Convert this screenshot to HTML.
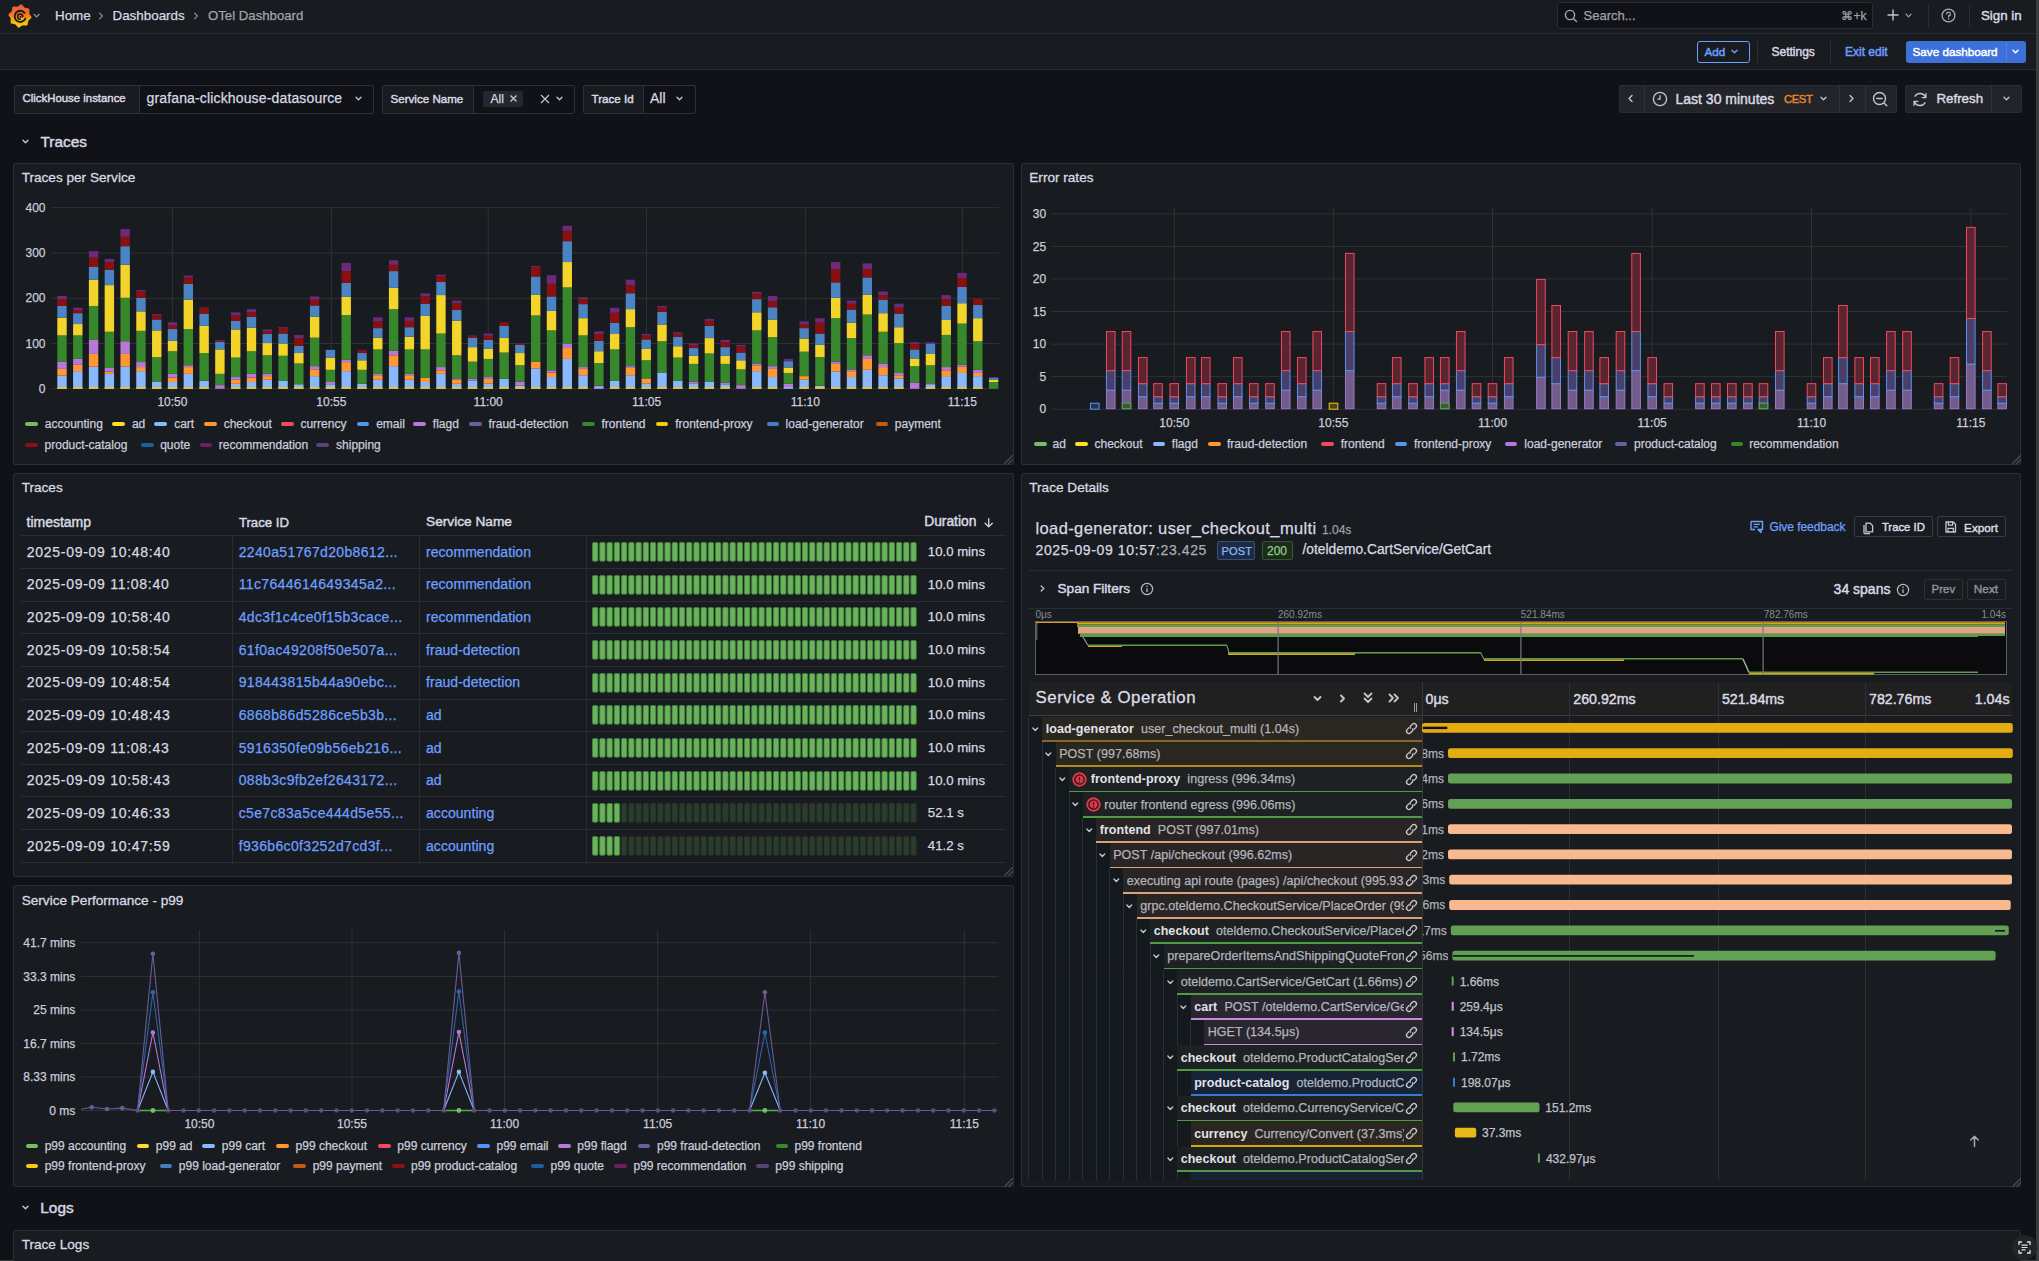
<!DOCTYPE html>
<html><head><meta charset="utf-8"><title>OTel Dashboard</title>
<style>
html,body{margin:0;padding:0;}
body{width:2039px;height:1261px;background:#111217;position:relative;overflow:hidden;font-family:"Liberation Sans", sans-serif;}
.t{position:absolute;white-space:nowrap;line-height:1;-webkit-text-stroke:0.25px currentColor;}
.b{position:absolute;}
.s{position:absolute;overflow:visible;}
</style></head><body>
<div class="b" style="left:0.0px;top:0.0px;width:2036.0px;height:33.0px;background:#181b1f;border-bottom:1px solid #2a2c31;"></div>
<div class="b" style="left:0.0px;top:34.0px;width:2036.0px;height:35.0px;background:#181b1f;border-bottom:1px solid #2a2c31;"></div>
<div class="b" style="left:2036.0px;top:0.0px;width:3.0px;height:1261.0px;background:#3a3b3f;"></div>
<div class="b" style="left:0.0px;top:1260.0px;width:2039.0px;height:1.0px;background:#3a3b3f;"></div>
<svg class="s" style="left:6.5px;top:2.8px;" width="26" height="26" viewBox="0 0 26 26"><defs><linearGradient id="lg" x1="0" y1="0" x2="0" y2="1"><stop offset="0" stop-color="#f0593a"/><stop offset="0.5" stop-color="#f77a20"/><stop offset="0.62" stop-color="#f0a814"/><stop offset="1" stop-color="#f8c80c"/></linearGradient></defs>
<path d="M14.27,2.48 L17.12,5.68 L21.34,6.46 L21.09,10.74 L23.52,14.27 L20.32,17.12 L19.54,21.34 L15.26,21.09 L11.73,23.52 L8.88,20.32 L4.66,19.54 L4.91,15.26 L2.48,11.73 L5.68,8.88 L6.46,4.66 L10.74,4.91 Z" fill="url(#lg)" stroke="url(#lg)" stroke-width="2.2" stroke-linejoin="round"/>
<path d="M17.6,9.8 A5.6,5.6 0 1 0 18.4,15.6" fill="none" stroke="#181b1f" stroke-width="1.9" stroke-linecap="round"/>
<path d="M15.8,13.6 A2.6,2.6 0 1 0 13.2,16.2" fill="none" stroke="#181b1f" stroke-width="1.6" stroke-linecap="round"/>
<circle cx="13.6" cy="13.8" r="1.1" fill="#181b1f"/></svg>
<svg class="s" style="left:32px;top:11px;" width="9.2" height="9.2" viewBox="0 0 9.2 9.2"><path d="M2.1 3.3 L4.6 5.9 L7.1 3.3" fill="none" stroke="#a0a1ab" stroke-width="1.2" stroke-linecap="round" stroke-linejoin="round"/></svg>
<div class="t" style="left:55.0px;top:9.1px;font-size:13.4px;color:#d8d9e3;font-weight:400;">Home</div>
<svg class="s" style="left:96px;top:11px;" width="10" height="10" viewBox="0 0 10 10"><path d="M3.6 2.2 L6.4 5.0 L3.6 7.8" fill="none" stroke="#8e8f9b" stroke-width="1.2" stroke-linecap="round" stroke-linejoin="round"/></svg>
<div class="t" style="left:112.5px;top:9.1px;font-size:13.4px;color:#d8d9e3;font-weight:400;">Dashboards</div>
<svg class="s" style="left:191px;top:11px;" width="10" height="10" viewBox="0 0 10 10"><path d="M3.6 2.2 L6.4 5.0 L3.6 7.8" fill="none" stroke="#8e8f9b" stroke-width="1.2" stroke-linecap="round" stroke-linejoin="round"/></svg>
<div class="t" style="left:208.0px;top:9.2px;font-size:13.2px;color:#a3a4ae;font-weight:400;">OTel Dashboard</div>
<div class="b" style="left:1557.0px;top:2.0px;width:316.0px;height:27.0px;background:#111217;border:1px solid #2c2e33;border-radius:3px;box-sizing:border-box;"></div>
<svg class="s" style="left:1564px;top:9px;" width="14" height="14" viewBox="0 0 14 14"><circle cx="6" cy="6" r="4.6" fill="none" stroke="#a8a9b3" stroke-width="1.4"/><path d="M9.4 9.4 L12.5 12.5" stroke="#a8a9b3" stroke-width="1.4" stroke-linecap="round"/></svg>
<div class="t" style="left:1583.5px;top:9.3px;font-size:13px;color:#a0a1ab;font-weight:400;">Search...</div>
<div class="t" style="right:172.5px;top:10.1px;font-size:12px;color:#a0a1ab;font-weight:400;text-align:right;">⌘+k</div>
<svg class="s" style="left:1887px;top:9px;" width="12" height="12" viewBox="0 0 12 12"><path d="M6 0.5 V11.5 M0.5 6 H11.5" stroke="#c4c5cf" stroke-width="1.4"/></svg>
<svg class="s" style="left:1904px;top:11px;" width="9.0" height="9.0" viewBox="0 0 9.0 9.0"><path d="M2.0 3.2 L4.5 5.8 L7.0 3.2" fill="none" stroke="#a0a1ab" stroke-width="1.2" stroke-linecap="round" stroke-linejoin="round"/></svg>
<div class="b" style="left:1928.0px;top:5.0px;width:1.0px;height:22.0px;background:#2c2e33;"></div>
<svg class="s" style="left:1941px;top:8px;" width="15" height="15" viewBox="0 0 15 15"><circle cx="7.5" cy="7.5" r="6.4" fill="none" stroke="#a8a9b3" stroke-width="1.3"/><path d="M5.6 5.9 A1.9 1.9 0 1 1 7.6 7.9 V9" fill="none" stroke="#a8a9b3" stroke-width="1.3" stroke-linecap="round"/><circle cx="7.6" cy="11" r="0.8" fill="#a8a9b3"/></svg>
<div class="b" style="left:1969.0px;top:5.0px;width:1.0px;height:22.0px;background:#2c2e33;"></div>
<div class="t" style="left:1981.0px;top:9.0px;font-size:13.3px;color:#d8d9e3;font-weight:400;-webkit-text-stroke:0.45px currentColor;">Sign in</div>
<div class="b" style="left:1697.0px;top:41.0px;width:53.0px;height:22.0px;border:1px solid #6e9fff;border-radius:3px;box-sizing:border-box;"></div>
<div class="t" style="left:1704.5px;top:46.0px;font-size:11.7px;color:#6e9fff;font-weight:400;-webkit-text-stroke:0.45px currentColor;">Add</div>
<svg class="s" style="left:1730px;top:47px;" width="9.0" height="9.0" viewBox="0 0 9.0 9.0"><path d="M2.0 3.2 L4.5 5.8 L7.0 3.2" fill="none" stroke="#6e9fff" stroke-width="1.4" stroke-linecap="round" stroke-linejoin="round"/></svg>
<div class="b" style="left:1757.0px;top:41.0px;width:1.0px;height:22.0px;background:#2c2e33;"></div>
<div class="t" style="left:1771.5px;top:45.7px;font-size:12px;color:#d8d9e3;font-weight:400;-webkit-text-stroke:0.45px currentColor;">Settings</div>
<div class="b" style="left:1830.0px;top:41.0px;width:1.0px;height:22.0px;background:#2c2e33;"></div>
<div class="t" style="left:1845.0px;top:45.7px;font-size:12px;color:#6e9fff;font-weight:400;-webkit-text-stroke:0.45px currentColor;">Exit edit</div>
<div class="b" style="left:1906.0px;top:41.0px;width:120.0px;height:22.0px;background:#3d71d9;border-radius:3px;"></div>
<div class="b" style="left:2006.0px;top:43.0px;width:1.0px;height:18.0px;border-left:1px dotted #6b8fd8;"></div>
<div class="t" style="left:1912.5px;top:46.0px;font-size:11.7px;color:#ffffff;font-weight:400;-webkit-text-stroke:0.45px currentColor;">Save dashboard</div>
<svg class="s" style="left:2011px;top:47px;" width="9.0" height="9.0" viewBox="0 0 9.0 9.0"><path d="M2.0 3.2 L4.5 5.8 L7.0 3.2" fill="none" stroke="#ffffff" stroke-width="1.4" stroke-linecap="round" stroke-linejoin="round"/></svg>
<div class="b" style="left:14.0px;top:84.5px;width:360.0px;height:29.0px;background:#111217;border:1px solid #2f3136;border-radius:2px;box-sizing:border-box;"></div>
<div class="b" style="left:15.0px;top:85.5px;width:123.5px;height:27.0px;background:#181b1f;border-right:1px solid #2f3136;"></div>
<div class="t" style="left:22.5px;top:92.8px;font-size:11.4px;color:#d8d9e3;font-weight:400;-webkit-text-stroke:0.45px currentColor;">ClickHouse instance</div>
<div class="t" style="left:146.5px;top:91.2px;font-size:14px;color:#d8d9e3;font-weight:400;letter-spacing:0.15px;">grafana-clickhouse-datasource</div>
<svg class="s" style="left:354px;top:94px;" width="9.0" height="9.0" viewBox="0 0 9.0 9.0"><path d="M2.0 3.2 L4.5 5.8 L7.0 3.2" fill="none" stroke="#c4c5cf" stroke-width="1.3" stroke-linecap="round" stroke-linejoin="round"/></svg>
<div class="b" style="left:382.0px;top:84.5px;width:193.0px;height:29.0px;background:#111217;border:1px solid #2f3136;border-radius:2px;box-sizing:border-box;"></div>
<div class="b" style="left:383.0px;top:85.5px;width:89.5px;height:27.0px;background:#181b1f;border-right:1px solid #2f3136;"></div>
<div class="t" style="left:390.5px;top:92.6px;font-size:11.6px;color:#d8d9e3;font-weight:400;-webkit-text-stroke:0.45px currentColor;">Service Name</div>
<div class="b" style="left:483.0px;top:91.0px;width:40.0px;height:16.0px;background:#24272c;border-radius:2px;"></div>
<div class="t" style="left:490.5px;top:92.6px;font-size:12px;color:#d8d9e3;font-weight:400;">All</div>
<svg class="s" style="left:508px;top:93px;" width="11" height="11" viewBox="0 0 11 11"><path d="M2.5 2.5 L8.5 8.5 M8.5 2.5 L2.5 8.5" stroke="#c4c5cf" stroke-width="1.4"/></svg>
<svg class="s" style="left:539px;top:93px;" width="12" height="12" viewBox="0 0 12 12"><path d="M2 2 L10 10 M10 2 L2 10" stroke="#c4c5cf" stroke-width="1.2"/></svg>
<svg class="s" style="left:555px;top:94px;" width="9.0" height="9.0" viewBox="0 0 9.0 9.0"><path d="M2.0 3.2 L4.5 5.8 L7.0 3.2" fill="none" stroke="#c4c5cf" stroke-width="1.3" stroke-linecap="round" stroke-linejoin="round"/></svg>
<div class="b" style="left:583.0px;top:84.5px;width:112.5px;height:29.0px;background:#111217;border:1px solid #2f3136;border-radius:2px;box-sizing:border-box;"></div>
<div class="b" style="left:584.0px;top:85.5px;width:58.5px;height:27.0px;background:#181b1f;border-right:1px solid #2f3136;"></div>
<div class="t" style="left:591.5px;top:92.6px;font-size:11.6px;color:#d8d9e3;font-weight:400;-webkit-text-stroke:0.45px currentColor;">Trace Id</div>
<div class="t" style="left:650.0px;top:91.1px;font-size:14px;color:#d8d9e3;font-weight:400;">All</div>
<svg class="s" style="left:675px;top:94px;" width="9.0" height="9.0" viewBox="0 0 9.0 9.0"><path d="M2.0 3.2 L4.5 5.8 L7.0 3.2" fill="none" stroke="#c4c5cf" stroke-width="1.3" stroke-linecap="round" stroke-linejoin="round"/></svg>
<div class="b" style="left:1618.5px;top:84.5px;width:278.5px;height:28.5px;background:#222429;border:1px solid #2a2c31;border-radius:2px;box-sizing:border-box;"></div>
<div class="b" style="left:1644.0px;top:85.0px;width:1.0px;height:27.5px;background:#2f3136;"></div>
<div class="b" style="left:1839.0px;top:85.0px;width:1.0px;height:27.5px;background:#2f3136;"></div>
<div class="b" style="left:1864.5px;top:85.0px;width:1.0px;height:27.5px;background:#2f3136;"></div>
<svg class="s" style="left:1625px;top:93px;" width="11.0" height="11.0" viewBox="0 0 11.0 11.0"><path d="M7.0 2.5 L4.0 5.5 L7.0 8.5" fill="none" stroke="#c4c5cf" stroke-width="1.4" stroke-linecap="round" stroke-linejoin="round"/></svg>
<svg class="s" style="left:1652px;top:91px;" width="16" height="16" viewBox="0 0 16 16"><circle cx="8" cy="8" r="6.6" fill="none" stroke="#c4c5cf" stroke-width="1.3"/><path d="M8 4.2 V8.2 H5.4" fill="none" stroke="#c4c5cf" stroke-width="1.3"/></svg>
<div class="t" style="left:1675.5px;top:91.7px;font-size:14px;color:#d8d9e3;font-weight:400;-webkit-text-stroke:0.45px currentColor;">Last 30 minutes</div>
<div class="t" style="left:1784.0px;top:93.7px;font-size:11.2px;color:#e8862c;font-weight:400;letter-spacing:-0.35px;-webkit-text-stroke:0.45px currentColor;">CEST</div>
<svg class="s" style="left:1819px;top:94px;" width="9.0" height="9.0" viewBox="0 0 9.0 9.0"><path d="M2.0 3.2 L4.5 5.8 L7.0 3.2" fill="none" stroke="#c4c5cf" stroke-width="1.3" stroke-linecap="round" stroke-linejoin="round"/></svg>
<svg class="s" style="left:1846px;top:93px;" width="11.0" height="11.0" viewBox="0 0 11.0 11.0"><path d="M4.0 2.5 L7.0 5.5 L4.0 8.5" fill="none" stroke="#c4c5cf" stroke-width="1.4" stroke-linecap="round" stroke-linejoin="round"/></svg>
<svg class="s" style="left:1872px;top:91px;" width="17" height="17" viewBox="0 0 17 17"><circle cx="7.5" cy="7.5" r="6" fill="none" stroke="#c4c5cf" stroke-width="1.4"/><path d="M4.8 7.5 H10.2 M12 12 L14.8 14.8" stroke="#c4c5cf" stroke-width="1.4" stroke-linecap="round"/></svg>
<div class="b" style="left:1904.5px;top:84.5px;width:117.5px;height:28.5px;background:#222429;border:1px solid #2a2c31;border-radius:2px;box-sizing:border-box;"></div>
<div class="b" style="left:1991.0px;top:85.0px;width:1.0px;height:27.5px;background:#2f3136;"></div>
<svg class="s" style="left:1912px;top:91px;" width="17" height="17" viewBox="0 0 17 17"><path d="M13.6 6.2 A6 6 0 0 0 3 5.2 M2.4 10.8 A6 6 0 0 0 13 11.8" fill="none" stroke="#c4c5cf" stroke-width="1.4" stroke-linecap="round"/><path d="M13.9 2.8 V6.6 H10.2 M2.1 14.2 V10.4 H5.8" fill="none" stroke="#c4c5cf" stroke-width="1.4" stroke-linecap="round" stroke-linejoin="round"/></svg>
<div class="t" style="left:1936.5px;top:92.2px;font-size:13.3px;color:#d8d9e3;font-weight:400;-webkit-text-stroke:0.45px currentColor;">Refresh</div>
<svg class="s" style="left:2002px;top:94px;" width="9.0" height="9.0" viewBox="0 0 9.0 9.0"><path d="M2.0 3.2 L4.5 5.8 L7.0 3.2" fill="none" stroke="#c4c5cf" stroke-width="1.3" stroke-linecap="round" stroke-linejoin="round"/></svg>
<svg class="s" style="left:21px;top:137px;" width="9.0" height="9.0" viewBox="0 0 9.0 9.0"><path d="M2.0 3.2 L4.5 5.8 L7.0 3.2" fill="none" stroke="#c4c5cf" stroke-width="1.4" stroke-linecap="round" stroke-linejoin="round"/></svg>
<div class="t" style="left:40.5px;top:134.2px;font-size:15.4px;color:#d8d9e3;font-weight:400;-webkit-text-stroke:0.45px currentColor;">Traces</div>
<svg class="s" style="left:21px;top:1203px;" width="9.0" height="9.0" viewBox="0 0 9.0 9.0"><path d="M2.0 3.2 L4.5 5.8 L7.0 3.2" fill="none" stroke="#c4c5cf" stroke-width="1.4" stroke-linecap="round" stroke-linejoin="round"/></svg>
<div class="t" style="left:40.3px;top:1200.3px;font-size:15.4px;color:#d8d9e3;font-weight:400;-webkit-text-stroke:0.45px currentColor;">Logs</div>
<div class="b" style="left:13.2px;top:163.3px;width:1000.6px;height:302.0px;background:#181b1f;border:1px solid #2c2e33;border-radius:2px;box-sizing:border-box;"></div>
<div class="t" style="left:21.7px;top:171.4px;font-size:13.6px;color:#d8d9e3;font-weight:400;-webkit-text-stroke:0.3px currentColor;">Traces per Service</div>
<svg class="s" style="left:1000.8px;top:452.3px;" width="12" height="12" viewBox="0 0 12 12"><path d="M3.8 11.3 L11.5 3.6 M7.8 11.3 L11.5 7.6" stroke="#55575c" stroke-width="1.1" stroke-linecap="round"/></svg>
<div class="b" style="left:1020.8px;top:163.3px;width:1000.7px;height:302.0px;background:#181b1f;border:1px solid #2c2e33;border-radius:2px;box-sizing:border-box;"></div>
<div class="t" style="left:1029.3px;top:171.3px;font-size:13.6px;color:#d8d9e3;font-weight:400;-webkit-text-stroke:0.3px currentColor;">Error rates</div>
<svg class="s" style="left:2008.5px;top:452.3px;" width="12" height="12" viewBox="0 0 12 12"><path d="M3.8 11.3 L11.5 3.6 M7.8 11.3 L11.5 7.6" stroke="#55575c" stroke-width="1.1" stroke-linecap="round"/></svg>
<div class="b" style="left:13.2px;top:473.3px;width:1000.6px;height:404.0px;background:#181b1f;border:1px solid #2c2e33;border-radius:2px;box-sizing:border-box;"></div>
<div class="t" style="left:21.7px;top:481.1px;font-size:13.6px;color:#d8d9e3;font-weight:400;-webkit-text-stroke:0.3px currentColor;">Traces</div>
<svg class="s" style="left:1000.8px;top:864.3px;" width="12" height="12" viewBox="0 0 12 12"><path d="M3.8 11.3 L11.5 3.6 M7.8 11.3 L11.5 7.6" stroke="#55575c" stroke-width="1.1" stroke-linecap="round"/></svg>
<div class="b" style="left:1020.8px;top:473.3px;width:1000.7px;height:714.2px;background:#181b1f;border:1px solid #2c2e33;border-radius:2px;box-sizing:border-box;"></div>
<div class="t" style="left:1029.3px;top:481.1px;font-size:13.6px;color:#d8d9e3;font-weight:400;-webkit-text-stroke:0.3px currentColor;">Trace Details</div>
<svg class="s" style="left:2008.5px;top:1174.5px;" width="12" height="12" viewBox="0 0 12 12"><path d="M3.8 11.3 L11.5 3.6 M7.8 11.3 L11.5 7.6" stroke="#55575c" stroke-width="1.1" stroke-linecap="round"/></svg>
<div class="b" style="left:13.2px;top:885.2px;width:1000.6px;height:302.3px;background:#181b1f;border:1px solid #2c2e33;border-radius:2px;box-sizing:border-box;"></div>
<div class="t" style="left:21.7px;top:893.7px;font-size:13.6px;color:#d8d9e3;font-weight:400;-webkit-text-stroke:0.3px currentColor;">Service Performance - p99</div>
<svg class="s" style="left:1000.8px;top:1174.5px;" width="12" height="12" viewBox="0 0 12 12"><path d="M3.8 11.3 L11.5 3.6 M7.8 11.3 L11.5 7.6" stroke="#55575c" stroke-width="1.1" stroke-linecap="round"/></svg>
<div class="b" style="left:13.2px;top:1229.5px;width:2008.3px;height:70.5px;background:#181b1f;border:1px solid #2c2e33;border-radius:2px;box-sizing:border-box;"></div>
<div class="t" style="left:21.7px;top:1237.7px;font-size:13.6px;color:#d8d9e3;font-weight:400;-webkit-text-stroke:0.3px currentColor;">Trace Logs</div>
<svg class="s" style="left:2011px;top:1234px;" width="27" height="27" viewBox="0 0 27 27"><circle cx="13.5" cy="13.5" r="12.5" fill="#222428"/><path d="M8 11 V8 H11 M16 8 H19 V11 M19 16 V19 H16 M11 19 H8 V16" fill="none" stroke="#e0e0ea" stroke-width="1.3"/><path d="M10.5 11.2 H16.5 M10.5 13.5 H16.5 M10.5 15.8 H14.5" stroke="#e0e0ea" stroke-width="1.2"/></svg>
<svg class="s" style="left:0px;top:0px;pointer-events:none;" width="1020" height="470" viewBox="0 0 1020 470"><rect x="51" y="388.3" width="948" height="1" fill="#2e3136"/><rect x="51" y="343.0" width="948" height="1" fill="#2e3136"/><rect x="51" y="297.8" width="948" height="1" fill="#2e3136"/><rect x="51" y="252.5" width="948" height="1" fill="#2e3136"/><rect x="51" y="207.2" width="948" height="1" fill="#2e3136"/><rect x="171.9" y="207.5" width="1" height="184.5" fill="#2e3136"/><rect x="330.8" y="207.5" width="1" height="184.5" fill="#2e3136"/><rect x="487.7" y="207.5" width="1" height="184.5" fill="#2e3136"/><rect x="646.1" y="207.5" width="1" height="184.5" fill="#2e3136"/><rect x="804.8" y="207.5" width="1" height="184.5" fill="#2e3136"/><rect x="961.9" y="207.5" width="1" height="184.5" fill="#2e3136"/><rect x="57.30" y="375.67" width="9.4" height="13.13" fill="#8ab8ff"/><rect x="57.30" y="368.88" width="9.4" height="6.79" fill="#ff9830"/><rect x="57.30" y="361.63" width="9.4" height="7.24" fill="#b877d9"/><rect x="57.30" y="335.38" width="9.4" height="26.26" fill="#37872d"/><rect x="57.30" y="317.72" width="9.4" height="17.66" fill="#f2d42a"/><rect x="57.30" y="305.95" width="9.4" height="11.77" fill="#4a84c2"/><rect x="57.30" y="299.16" width="9.4" height="6.79" fill="#8a1010"/><rect x="57.30" y="295.99" width="9.4" height="3.17" fill="#6d2a78"/><rect x="57.30" y="387.20" width="9.4" height="1.6" fill="#f2cc0c"/><rect x="73.09" y="371.14" width="9.4" height="17.66" fill="#8ab8ff"/><rect x="73.09" y="364.80" width="9.4" height="6.34" fill="#ff9830"/><rect x="73.09" y="358.92" width="9.4" height="5.89" fill="#b877d9"/><rect x="73.09" y="335.38" width="9.4" height="23.54" fill="#37872d"/><rect x="73.09" y="324.06" width="9.4" height="11.32" fill="#f2d42a"/><rect x="73.09" y="313.19" width="9.4" height="10.87" fill="#4a84c2"/><rect x="73.09" y="310.02" width="9.4" height="3.17" fill="#8a1010"/><rect x="73.09" y="307.76" width="9.4" height="2.26" fill="#6d2a78"/><rect x="73.09" y="387.20" width="9.4" height="1.6" fill="#f2cc0c"/><rect x="88.88" y="366.62" width="9.4" height="22.18" fill="#8ab8ff"/><rect x="88.88" y="353.94" width="9.4" height="12.68" fill="#ff9830"/><rect x="88.88" y="339.90" width="9.4" height="14.04" fill="#b877d9"/><rect x="88.88" y="305.95" width="9.4" height="33.96" fill="#37872d"/><rect x="88.88" y="279.69" width="9.4" height="26.26" fill="#f2d42a"/><rect x="88.88" y="266.56" width="9.4" height="13.13" fill="#4a84c2"/><rect x="88.88" y="257.50" width="9.4" height="9.05" fill="#8a1010"/><rect x="88.88" y="251.16" width="9.4" height="6.34" fill="#6d2a78"/><rect x="88.88" y="387.20" width="9.4" height="1.6" fill="#f2cc0c"/><rect x="104.67" y="373.86" width="9.4" height="14.94" fill="#8ab8ff"/><rect x="104.67" y="371.60" width="9.4" height="2.26" fill="#ff9830"/><rect x="104.67" y="367.97" width="9.4" height="3.62" fill="#b877d9"/><rect x="104.67" y="331.75" width="9.4" height="36.22" fill="#37872d"/><rect x="104.67" y="285.12" width="9.4" height="46.63" fill="#f2d42a"/><rect x="104.67" y="269.73" width="9.4" height="15.39" fill="#4a84c2"/><rect x="104.67" y="262.03" width="9.4" height="7.70" fill="#8a1010"/><rect x="104.67" y="258.86" width="9.4" height="3.17" fill="#6d2a78"/><rect x="104.67" y="387.20" width="9.4" height="1.6" fill="#f2cc0c"/><rect x="120.46" y="366.62" width="9.4" height="22.18" fill="#8ab8ff"/><rect x="120.46" y="353.94" width="9.4" height="12.68" fill="#ff9830"/><rect x="120.46" y="341.26" width="9.4" height="12.68" fill="#b877d9"/><rect x="120.46" y="297.80" width="9.4" height="43.46" fill="#37872d"/><rect x="120.46" y="264.75" width="9.4" height="33.05" fill="#f2d42a"/><rect x="120.46" y="246.18" width="9.4" height="18.56" fill="#4a84c2"/><rect x="120.46" y="236.68" width="9.4" height="9.51" fill="#8a1010"/><rect x="120.46" y="228.98" width="9.4" height="7.70" fill="#6d2a78"/><rect x="120.46" y="387.20" width="9.4" height="1.6" fill="#f2cc0c"/><rect x="136.25" y="371.14" width="9.4" height="17.66" fill="#8ab8ff"/><rect x="136.25" y="367.07" width="9.4" height="4.07" fill="#ff9830"/><rect x="136.25" y="362.09" width="9.4" height="4.98" fill="#b877d9"/><rect x="136.25" y="330.85" width="9.4" height="31.24" fill="#37872d"/><rect x="136.25" y="311.38" width="9.4" height="19.47" fill="#f2d42a"/><rect x="136.25" y="297.80" width="9.4" height="13.58" fill="#4a84c2"/><rect x="136.25" y="291.46" width="9.4" height="6.34" fill="#8a1010"/><rect x="136.25" y="290.10" width="9.4" height="1.36" fill="#6d2a78"/><rect x="136.25" y="387.20" width="9.4" height="1.6" fill="#f2cc0c"/><rect x="152.04" y="381.56" width="9.4" height="7.24" fill="#8ab8ff"/><rect x="152.04" y="357.11" width="9.4" height="24.45" fill="#37872d"/><rect x="152.04" y="330.40" width="9.4" height="26.71" fill="#f2d42a"/><rect x="152.04" y="319.53" width="9.4" height="10.87" fill="#4a84c2"/><rect x="152.04" y="315.00" width="9.4" height="4.53" fill="#8a1010"/><rect x="152.04" y="314.10" width="9.4" height="0.91" fill="#6d2a78"/><rect x="152.04" y="387.20" width="9.4" height="1.6" fill="#f2cc0c"/><rect x="167.83" y="382.01" width="9.4" height="6.79" fill="#8ab8ff"/><rect x="167.83" y="377.48" width="9.4" height="4.53" fill="#ff9830"/><rect x="167.83" y="373.86" width="9.4" height="3.62" fill="#b877d9"/><rect x="167.83" y="351.22" width="9.4" height="22.64" fill="#37872d"/><rect x="167.83" y="340.81" width="9.4" height="10.41" fill="#f2d42a"/><rect x="167.83" y="329.04" width="9.4" height="11.77" fill="#4a84c2"/><rect x="167.83" y="325.42" width="9.4" height="3.62" fill="#8a1010"/><rect x="167.83" y="322.25" width="9.4" height="3.17" fill="#6d2a78"/><rect x="167.83" y="387.20" width="9.4" height="1.6" fill="#f2cc0c"/><rect x="183.62" y="373.86" width="9.4" height="14.94" fill="#8ab8ff"/><rect x="183.62" y="367.07" width="9.4" height="6.79" fill="#ff9830"/><rect x="183.62" y="365.26" width="9.4" height="1.81" fill="#b877d9"/><rect x="183.62" y="329.04" width="9.4" height="36.22" fill="#37872d"/><rect x="183.62" y="299.61" width="9.4" height="29.43" fill="#f2d42a"/><rect x="183.62" y="283.76" width="9.4" height="15.85" fill="#4a84c2"/><rect x="183.62" y="277.42" width="9.4" height="6.34" fill="#8a1010"/><rect x="183.62" y="275.61" width="9.4" height="1.81" fill="#6d2a78"/><rect x="183.62" y="387.20" width="9.4" height="1.6" fill="#f2cc0c"/><rect x="199.41" y="380.65" width="9.4" height="8.15" fill="#8ab8ff"/><rect x="199.41" y="353.03" width="9.4" height="27.62" fill="#37872d"/><rect x="199.41" y="325.87" width="9.4" height="27.17" fill="#f2d42a"/><rect x="199.41" y="313.64" width="9.4" height="12.22" fill="#4a84c2"/><rect x="199.41" y="307.76" width="9.4" height="5.89" fill="#8a1010"/><rect x="199.41" y="307.31" width="9.4" height="0.45" fill="#6d2a78"/><rect x="199.41" y="387.20" width="9.4" height="1.6" fill="#f2cc0c"/><rect x="215.20" y="385.18" width="9.4" height="3.62" fill="#b877d9"/><rect x="215.20" y="373.86" width="9.4" height="11.32" fill="#37872d"/><rect x="215.20" y="349.41" width="9.4" height="24.45" fill="#f2d42a"/><rect x="215.20" y="341.71" width="9.4" height="7.70" fill="#4a84c2"/><rect x="215.20" y="340.81" width="9.4" height="0.91" fill="#8a1010"/><rect x="215.20" y="339.90" width="9.4" height="0.91" fill="#6d2a78"/><rect x="230.99" y="383.82" width="9.4" height="4.98" fill="#8ab8ff"/><rect x="230.99" y="379.75" width="9.4" height="4.07" fill="#ff9830"/><rect x="230.99" y="377.03" width="9.4" height="2.72" fill="#b877d9"/><rect x="230.99" y="357.56" width="9.4" height="19.47" fill="#37872d"/><rect x="230.99" y="329.49" width="9.4" height="28.07" fill="#f2d42a"/><rect x="230.99" y="320.89" width="9.4" height="8.60" fill="#4a84c2"/><rect x="230.99" y="315.45" width="9.4" height="5.43" fill="#8a1010"/><rect x="230.99" y="312.29" width="9.4" height="3.17" fill="#6d2a78"/><rect x="230.99" y="387.20" width="9.4" height="1.6" fill="#f2cc0c"/><rect x="246.78" y="382.01" width="9.4" height="6.79" fill="#8ab8ff"/><rect x="246.78" y="377.48" width="9.4" height="4.53" fill="#ff9830"/><rect x="246.78" y="373.86" width="9.4" height="3.62" fill="#b877d9"/><rect x="246.78" y="351.22" width="9.4" height="22.64" fill="#37872d"/><rect x="246.78" y="327.68" width="9.4" height="23.54" fill="#f2d42a"/><rect x="246.78" y="316.81" width="9.4" height="10.87" fill="#4a84c2"/><rect x="246.78" y="312.29" width="9.4" height="4.53" fill="#8a1010"/><rect x="246.78" y="309.12" width="9.4" height="3.17" fill="#6d2a78"/><rect x="246.78" y="387.20" width="9.4" height="1.6" fill="#f2cc0c"/><rect x="262.57" y="379.75" width="9.4" height="9.06" fill="#8ab8ff"/><rect x="262.57" y="376.12" width="9.4" height="3.62" fill="#ff9830"/><rect x="262.57" y="373.86" width="9.4" height="2.26" fill="#b877d9"/><rect x="262.57" y="355.30" width="9.4" height="18.56" fill="#37872d"/><rect x="262.57" y="343.07" width="9.4" height="12.22" fill="#f2d42a"/><rect x="262.57" y="334.02" width="9.4" height="9.06" fill="#4a84c2"/><rect x="262.57" y="331.30" width="9.4" height="2.72" fill="#8a1010"/><rect x="262.57" y="329.49" width="9.4" height="1.81" fill="#6d2a78"/><rect x="262.57" y="387.20" width="9.4" height="1.6" fill="#f2cc0c"/><rect x="278.36" y="380.65" width="9.4" height="8.15" fill="#8ab8ff"/><rect x="278.36" y="355.75" width="9.4" height="24.90" fill="#37872d"/><rect x="278.36" y="343.53" width="9.4" height="12.22" fill="#f2d42a"/><rect x="278.36" y="333.56" width="9.4" height="9.96" fill="#4a84c2"/><rect x="278.36" y="328.13" width="9.4" height="5.43" fill="#8a1010"/><rect x="278.36" y="327.23" width="9.4" height="0.91" fill="#6d2a78"/><rect x="278.36" y="387.20" width="9.4" height="1.6" fill="#f2cc0c"/><rect x="294.15" y="384.27" width="9.4" height="4.53" fill="#8ab8ff"/><rect x="294.15" y="363.45" width="9.4" height="20.83" fill="#37872d"/><rect x="294.15" y="353.03" width="9.4" height="10.41" fill="#f2d42a"/><rect x="294.15" y="345.79" width="9.4" height="7.24" fill="#4a84c2"/><rect x="294.15" y="338.09" width="9.4" height="7.70" fill="#8a1010"/><rect x="294.15" y="334.92" width="9.4" height="3.17" fill="#6d2a78"/><rect x="294.15" y="387.20" width="9.4" height="1.6" fill="#f2cc0c"/><rect x="309.94" y="376.12" width="9.4" height="12.68" fill="#8ab8ff"/><rect x="309.94" y="369.33" width="9.4" height="6.79" fill="#ff9830"/><rect x="309.94" y="366.16" width="9.4" height="3.17" fill="#b877d9"/><rect x="309.94" y="337.64" width="9.4" height="28.52" fill="#37872d"/><rect x="309.94" y="316.81" width="9.4" height="20.83" fill="#f2d42a"/><rect x="309.94" y="305.49" width="9.4" height="11.32" fill="#4a84c2"/><rect x="309.94" y="299.61" width="9.4" height="5.89" fill="#8a1010"/><rect x="309.94" y="296.44" width="9.4" height="3.17" fill="#6d2a78"/><rect x="309.94" y="387.20" width="9.4" height="1.6" fill="#f2cc0c"/><rect x="325.73" y="384.27" width="9.4" height="4.53" fill="#8ab8ff"/><rect x="325.73" y="382.01" width="9.4" height="2.26" fill="#b877d9"/><rect x="325.73" y="369.78" width="9.4" height="12.22" fill="#37872d"/><rect x="325.73" y="357.56" width="9.4" height="12.22" fill="#f2d42a"/><rect x="325.73" y="349.86" width="9.4" height="7.70" fill="#4a84c2"/><rect x="325.73" y="387.20" width="9.4" height="1.6" fill="#f2cc0c"/><rect x="341.52" y="371.14" width="9.4" height="17.66" fill="#8ab8ff"/><rect x="341.52" y="362.09" width="9.4" height="9.06" fill="#ff9830"/><rect x="341.52" y="359.82" width="9.4" height="2.26" fill="#b877d9"/><rect x="341.52" y="315.00" width="9.4" height="44.82" fill="#37872d"/><rect x="341.52" y="296.89" width="9.4" height="18.11" fill="#f2d42a"/><rect x="341.52" y="282.86" width="9.4" height="14.04" fill="#4a84c2"/><rect x="341.52" y="271.09" width="9.4" height="11.77" fill="#8a1010"/><rect x="341.52" y="262.94" width="9.4" height="8.15" fill="#6d2a78"/><rect x="341.52" y="387.20" width="9.4" height="1.6" fill="#f2cc0c"/><rect x="357.31" y="383.82" width="9.4" height="4.98" fill="#8ab8ff"/><rect x="357.31" y="369.78" width="9.4" height="14.04" fill="#37872d"/><rect x="357.31" y="360.28" width="9.4" height="9.51" fill="#f2d42a"/><rect x="357.31" y="353.03" width="9.4" height="7.24" fill="#4a84c2"/><rect x="357.31" y="350.32" width="9.4" height="2.72" fill="#8a1010"/><rect x="357.31" y="349.86" width="9.4" height="0.45" fill="#6d2a78"/><rect x="357.31" y="387.20" width="9.4" height="1.6" fill="#f2cc0c"/><rect x="373.10" y="379.75" width="9.4" height="9.06" fill="#8ab8ff"/><rect x="373.10" y="375.22" width="9.4" height="4.53" fill="#ff9830"/><rect x="373.10" y="373.86" width="9.4" height="1.36" fill="#b877d9"/><rect x="373.10" y="349.41" width="9.4" height="24.45" fill="#37872d"/><rect x="373.10" y="337.64" width="9.4" height="11.77" fill="#f2d42a"/><rect x="373.10" y="328.13" width="9.4" height="9.51" fill="#4a84c2"/><rect x="373.10" y="321.34" width="9.4" height="6.79" fill="#8a1010"/><rect x="373.10" y="317.27" width="9.4" height="4.07" fill="#6d2a78"/><rect x="373.10" y="387.20" width="9.4" height="1.6" fill="#f2cc0c"/><rect x="388.89" y="366.16" width="9.4" height="22.64" fill="#8ab8ff"/><rect x="388.89" y="355.30" width="9.4" height="10.87" fill="#ff9830"/><rect x="388.89" y="350.77" width="9.4" height="4.53" fill="#b877d9"/><rect x="388.89" y="309.12" width="9.4" height="41.65" fill="#37872d"/><rect x="388.89" y="287.84" width="9.4" height="21.28" fill="#f2d42a"/><rect x="388.89" y="271.09" width="9.4" height="16.75" fill="#4a84c2"/><rect x="388.89" y="264.75" width="9.4" height="6.34" fill="#8a1010"/><rect x="388.89" y="260.22" width="9.4" height="4.53" fill="#6d2a78"/><rect x="388.89" y="387.20" width="9.4" height="1.6" fill="#f2cc0c"/><rect x="404.68" y="379.75" width="9.4" height="9.06" fill="#8ab8ff"/><rect x="404.68" y="375.22" width="9.4" height="4.53" fill="#ff9830"/><rect x="404.68" y="373.86" width="9.4" height="1.36" fill="#b877d9"/><rect x="404.68" y="349.41" width="9.4" height="24.45" fill="#37872d"/><rect x="404.68" y="336.73" width="9.4" height="12.68" fill="#f2d42a"/><rect x="404.68" y="327.23" width="9.4" height="9.51" fill="#4a84c2"/><rect x="404.68" y="320.89" width="9.4" height="6.34" fill="#8a1010"/><rect x="404.68" y="317.27" width="9.4" height="3.62" fill="#6d2a78"/><rect x="404.68" y="387.20" width="9.4" height="1.6" fill="#f2cc0c"/><rect x="420.47" y="382.01" width="9.4" height="6.79" fill="#8ab8ff"/><rect x="420.47" y="377.93" width="9.4" height="4.07" fill="#ff9830"/><rect x="420.47" y="349.41" width="9.4" height="28.52" fill="#37872d"/><rect x="420.47" y="315.91" width="9.4" height="33.50" fill="#f2d42a"/><rect x="420.47" y="303.68" width="9.4" height="12.22" fill="#4a84c2"/><rect x="420.47" y="296.44" width="9.4" height="7.24" fill="#8a1010"/><rect x="420.47" y="293.27" width="9.4" height="3.17" fill="#6d2a78"/><rect x="420.47" y="387.20" width="9.4" height="1.6" fill="#f2cc0c"/><rect x="436.26" y="373.86" width="9.4" height="14.94" fill="#8ab8ff"/><rect x="436.26" y="370.24" width="9.4" height="3.62" fill="#ff9830"/><rect x="436.26" y="367.07" width="9.4" height="3.17" fill="#b877d9"/><rect x="436.26" y="333.56" width="9.4" height="33.50" fill="#37872d"/><rect x="436.26" y="295.08" width="9.4" height="38.48" fill="#f2d42a"/><rect x="436.26" y="281.95" width="9.4" height="13.13" fill="#4a84c2"/><rect x="436.26" y="276.07" width="9.4" height="5.89" fill="#8a1010"/><rect x="436.26" y="274.71" width="9.4" height="1.36" fill="#6d2a78"/><rect x="436.26" y="387.20" width="9.4" height="1.6" fill="#f2cc0c"/><rect x="452.05" y="383.82" width="9.4" height="4.98" fill="#8ab8ff"/><rect x="452.05" y="379.75" width="9.4" height="4.07" fill="#ff9830"/><rect x="452.05" y="378.39" width="9.4" height="1.36" fill="#b877d9"/><rect x="452.05" y="355.30" width="9.4" height="23.09" fill="#37872d"/><rect x="452.05" y="320.89" width="9.4" height="34.41" fill="#f2d42a"/><rect x="452.05" y="310.02" width="9.4" height="10.87" fill="#4a84c2"/><rect x="452.05" y="303.23" width="9.4" height="6.79" fill="#8a1010"/><rect x="452.05" y="300.51" width="9.4" height="2.72" fill="#6d2a78"/><rect x="452.05" y="387.20" width="9.4" height="1.6" fill="#f2cc0c"/><rect x="467.84" y="380.65" width="9.4" height="8.15" fill="#8ab8ff"/><rect x="467.84" y="378.84" width="9.4" height="1.81" fill="#b877d9"/><rect x="467.84" y="361.63" width="9.4" height="17.20" fill="#37872d"/><rect x="467.84" y="347.15" width="9.4" height="14.49" fill="#f2d42a"/><rect x="467.84" y="337.64" width="9.4" height="9.51" fill="#4a84c2"/><rect x="467.84" y="335.83" width="9.4" height="1.81" fill="#8a1010"/><rect x="467.84" y="335.38" width="9.4" height="0.45" fill="#6d2a78"/><rect x="467.84" y="387.20" width="9.4" height="1.6" fill="#f2cc0c"/><rect x="483.63" y="383.37" width="9.4" height="5.43" fill="#8ab8ff"/><rect x="483.63" y="378.84" width="9.4" height="4.53" fill="#ff9830"/><rect x="483.63" y="377.03" width="9.4" height="1.81" fill="#b877d9"/><rect x="483.63" y="358.92" width="9.4" height="18.11" fill="#37872d"/><rect x="483.63" y="348.96" width="9.4" height="9.96" fill="#f2d42a"/><rect x="483.63" y="339.90" width="9.4" height="9.06" fill="#4a84c2"/><rect x="483.63" y="335.83" width="9.4" height="4.07" fill="#8a1010"/><rect x="483.63" y="333.56" width="9.4" height="2.26" fill="#6d2a78"/><rect x="483.63" y="387.20" width="9.4" height="1.6" fill="#f2cc0c"/><rect x="499.42" y="378.84" width="9.4" height="9.96" fill="#8ab8ff"/><rect x="499.42" y="352.58" width="9.4" height="26.26" fill="#37872d"/><rect x="499.42" y="337.64" width="9.4" height="14.94" fill="#f2d42a"/><rect x="499.42" y="325.87" width="9.4" height="11.77" fill="#4a84c2"/><rect x="499.42" y="322.25" width="9.4" height="3.62" fill="#8a1010"/><rect x="499.42" y="387.20" width="9.4" height="1.6" fill="#f2cc0c"/><rect x="515.21" y="385.63" width="9.4" height="3.17" fill="#8ab8ff"/><rect x="515.21" y="381.56" width="9.4" height="4.07" fill="#b877d9"/><rect x="515.21" y="365.26" width="9.4" height="16.30" fill="#37872d"/><rect x="515.21" y="353.03" width="9.4" height="12.22" fill="#f2d42a"/><rect x="515.21" y="344.88" width="9.4" height="8.15" fill="#4a84c2"/><rect x="515.21" y="343.98" width="9.4" height="0.91" fill="#8a1010"/><rect x="515.21" y="343.53" width="9.4" height="0.45" fill="#6d2a78"/><rect x="515.21" y="387.20" width="9.4" height="1.6" fill="#f2cc0c"/><rect x="531.00" y="368.43" width="9.4" height="20.37" fill="#8ab8ff"/><rect x="531.00" y="361.63" width="9.4" height="6.79" fill="#ff9830"/><rect x="531.00" y="315.45" width="9.4" height="46.18" fill="#37872d"/><rect x="531.00" y="294.63" width="9.4" height="20.83" fill="#f2d42a"/><rect x="531.00" y="276.52" width="9.4" height="18.11" fill="#4a84c2"/><rect x="531.00" y="267.01" width="9.4" height="9.51" fill="#8a1010"/><rect x="531.00" y="266.10" width="9.4" height="0.91" fill="#6d2a78"/><rect x="531.00" y="387.20" width="9.4" height="1.6" fill="#f2cc0c"/><rect x="546.79" y="377.03" width="9.4" height="11.77" fill="#8ab8ff"/><rect x="546.79" y="372.50" width="9.4" height="4.53" fill="#ff9830"/><rect x="546.79" y="370.24" width="9.4" height="2.26" fill="#b877d9"/><rect x="546.79" y="330.40" width="9.4" height="39.84" fill="#37872d"/><rect x="546.79" y="310.93" width="9.4" height="19.47" fill="#f2d42a"/><rect x="546.79" y="296.44" width="9.4" height="14.49" fill="#4a84c2"/><rect x="546.79" y="283.76" width="9.4" height="12.68" fill="#8a1010"/><rect x="546.79" y="275.16" width="9.4" height="8.60" fill="#6d2a78"/><rect x="546.79" y="387.20" width="9.4" height="1.6" fill="#f2cc0c"/><rect x="562.58" y="358.92" width="9.4" height="29.88" fill="#8ab8ff"/><rect x="562.58" y="348.05" width="9.4" height="10.87" fill="#ff9830"/><rect x="562.58" y="343.98" width="9.4" height="4.07" fill="#b877d9"/><rect x="562.58" y="287.38" width="9.4" height="56.59" fill="#37872d"/><rect x="562.58" y="262.03" width="9.4" height="25.35" fill="#f2d42a"/><rect x="562.58" y="241.20" width="9.4" height="20.83" fill="#4a84c2"/><rect x="562.58" y="230.79" width="9.4" height="10.41" fill="#8a1010"/><rect x="562.58" y="225.81" width="9.4" height="4.98" fill="#6d2a78"/><rect x="562.58" y="387.20" width="9.4" height="1.6" fill="#f2cc0c"/><rect x="578.37" y="375.22" width="9.4" height="13.58" fill="#8ab8ff"/><rect x="578.37" y="368.88" width="9.4" height="6.34" fill="#ff9830"/><rect x="578.37" y="367.07" width="9.4" height="1.81" fill="#b877d9"/><rect x="578.37" y="335.38" width="9.4" height="31.69" fill="#37872d"/><rect x="578.37" y="318.17" width="9.4" height="17.20" fill="#f2d42a"/><rect x="578.37" y="304.14" width="9.4" height="14.04" fill="#4a84c2"/><rect x="578.37" y="299.16" width="9.4" height="4.98" fill="#8a1010"/><rect x="578.37" y="297.34" width="9.4" height="1.81" fill="#6d2a78"/><rect x="578.37" y="387.20" width="9.4" height="1.6" fill="#f2cc0c"/><rect x="594.16" y="386.99" width="9.4" height="1.81" fill="#8ab8ff"/><rect x="594.16" y="385.63" width="9.4" height="1.36" fill="#b877d9"/><rect x="594.16" y="362.99" width="9.4" height="22.64" fill="#37872d"/><rect x="594.16" y="351.22" width="9.4" height="11.77" fill="#f2d42a"/><rect x="594.16" y="340.81" width="9.4" height="10.41" fill="#4a84c2"/><rect x="594.16" y="334.02" width="9.4" height="6.79" fill="#8a1010"/><rect x="594.16" y="331.30" width="9.4" height="2.72" fill="#6d2a78"/><rect x="609.95" y="380.65" width="9.4" height="8.15" fill="#8ab8ff"/><rect x="609.95" y="349.41" width="9.4" height="31.24" fill="#37872d"/><rect x="609.95" y="334.02" width="9.4" height="15.39" fill="#f2d42a"/><rect x="609.95" y="322.70" width="9.4" height="11.32" fill="#4a84c2"/><rect x="609.95" y="312.74" width="9.4" height="9.96" fill="#8a1010"/><rect x="609.95" y="307.76" width="9.4" height="4.98" fill="#6d2a78"/><rect x="609.95" y="387.20" width="9.4" height="1.6" fill="#f2cc0c"/><rect x="625.74" y="375.22" width="9.4" height="13.58" fill="#8ab8ff"/><rect x="625.74" y="367.97" width="9.4" height="7.24" fill="#ff9830"/><rect x="625.74" y="366.16" width="9.4" height="1.81" fill="#b877d9"/><rect x="625.74" y="327.23" width="9.4" height="38.94" fill="#37872d"/><rect x="625.74" y="309.12" width="9.4" height="18.11" fill="#f2d42a"/><rect x="625.74" y="293.27" width="9.4" height="15.85" fill="#4a84c2"/><rect x="625.74" y="285.12" width="9.4" height="8.15" fill="#8a1010"/><rect x="625.74" y="279.69" width="9.4" height="5.43" fill="#6d2a78"/><rect x="625.74" y="387.20" width="9.4" height="1.6" fill="#f2cc0c"/><rect x="641.53" y="383.37" width="9.4" height="5.43" fill="#8ab8ff"/><rect x="641.53" y="378.39" width="9.4" height="4.98" fill="#ff9830"/><rect x="641.53" y="360.28" width="9.4" height="18.11" fill="#37872d"/><rect x="641.53" y="348.96" width="9.4" height="11.32" fill="#f2d42a"/><rect x="641.53" y="339.45" width="9.4" height="9.51" fill="#4a84c2"/><rect x="641.53" y="335.38" width="9.4" height="4.07" fill="#8a1010"/><rect x="641.53" y="334.02" width="9.4" height="1.36" fill="#6d2a78"/><rect x="641.53" y="387.20" width="9.4" height="1.6" fill="#f2cc0c"/><rect x="657.32" y="372.50" width="9.4" height="16.30" fill="#8ab8ff"/><rect x="657.32" y="341.26" width="9.4" height="31.24" fill="#37872d"/><rect x="657.32" y="324.51" width="9.4" height="16.75" fill="#f2d42a"/><rect x="657.32" y="311.83" width="9.4" height="12.68" fill="#4a84c2"/><rect x="657.32" y="307.31" width="9.4" height="4.53" fill="#8a1010"/><rect x="657.32" y="305.95" width="9.4" height="1.36" fill="#6d2a78"/><rect x="657.32" y="387.20" width="9.4" height="1.6" fill="#f2cc0c"/><rect x="673.11" y="380.65" width="9.4" height="8.15" fill="#8ab8ff"/><rect x="673.11" y="357.56" width="9.4" height="23.09" fill="#37872d"/><rect x="673.11" y="346.24" width="9.4" height="11.32" fill="#f2d42a"/><rect x="673.11" y="336.73" width="9.4" height="9.51" fill="#4a84c2"/><rect x="673.11" y="333.56" width="9.4" height="3.17" fill="#8a1010"/><rect x="673.11" y="332.21" width="9.4" height="1.36" fill="#6d2a78"/><rect x="673.11" y="387.20" width="9.4" height="1.6" fill="#f2cc0c"/><rect x="688.90" y="383.82" width="9.4" height="4.98" fill="#8ab8ff"/><rect x="688.90" y="381.56" width="9.4" height="2.26" fill="#b877d9"/><rect x="688.90" y="363.90" width="9.4" height="17.66" fill="#37872d"/><rect x="688.90" y="355.75" width="9.4" height="8.15" fill="#f2d42a"/><rect x="688.90" y="348.05" width="9.4" height="7.70" fill="#4a84c2"/><rect x="688.90" y="345.34" width="9.4" height="2.72" fill="#8a1010"/><rect x="688.90" y="343.53" width="9.4" height="1.81" fill="#6d2a78"/><rect x="688.90" y="387.20" width="9.4" height="1.6" fill="#f2cc0c"/><rect x="704.69" y="381.56" width="9.4" height="7.24" fill="#8ab8ff"/><rect x="704.69" y="353.49" width="9.4" height="28.07" fill="#37872d"/><rect x="704.69" y="338.09" width="9.4" height="15.39" fill="#f2d42a"/><rect x="704.69" y="325.87" width="9.4" height="12.22" fill="#4a84c2"/><rect x="704.69" y="320.89" width="9.4" height="4.98" fill="#8a1010"/><rect x="704.69" y="319.08" width="9.4" height="1.81" fill="#6d2a78"/><rect x="704.69" y="387.20" width="9.4" height="1.6" fill="#f2cc0c"/><rect x="720.48" y="384.27" width="9.4" height="4.53" fill="#8ab8ff"/><rect x="720.48" y="382.46" width="9.4" height="1.81" fill="#b877d9"/><rect x="720.48" y="363.90" width="9.4" height="18.56" fill="#37872d"/><rect x="720.48" y="355.75" width="9.4" height="8.15" fill="#f2d42a"/><rect x="720.48" y="347.15" width="9.4" height="8.60" fill="#4a84c2"/><rect x="720.48" y="342.17" width="9.4" height="4.98" fill="#8a1010"/><rect x="720.48" y="339.90" width="9.4" height="2.26" fill="#6d2a78"/><rect x="720.48" y="387.20" width="9.4" height="1.6" fill="#f2cc0c"/><rect x="736.27" y="385.18" width="9.4" height="3.62" fill="#b877d9"/><rect x="736.27" y="369.33" width="9.4" height="15.85" fill="#37872d"/><rect x="736.27" y="360.28" width="9.4" height="9.06" fill="#f2d42a"/><rect x="736.27" y="352.58" width="9.4" height="7.70" fill="#4a84c2"/><rect x="736.27" y="346.24" width="9.4" height="6.34" fill="#8a1010"/><rect x="736.27" y="344.88" width="9.4" height="1.36" fill="#6d2a78"/><rect x="752.06" y="371.14" width="9.4" height="17.66" fill="#8ab8ff"/><rect x="752.06" y="365.26" width="9.4" height="5.89" fill="#ff9830"/><rect x="752.06" y="363.45" width="9.4" height="1.81" fill="#b877d9"/><rect x="752.06" y="330.40" width="9.4" height="33.05" fill="#37872d"/><rect x="752.06" y="312.29" width="9.4" height="18.11" fill="#f2d42a"/><rect x="752.06" y="299.16" width="9.4" height="13.13" fill="#4a84c2"/><rect x="752.06" y="293.72" width="9.4" height="5.43" fill="#8a1010"/><rect x="752.06" y="291.91" width="9.4" height="1.81" fill="#6d2a78"/><rect x="752.06" y="387.20" width="9.4" height="1.6" fill="#f2cc0c"/><rect x="767.85" y="377.03" width="9.4" height="11.77" fill="#8ab8ff"/><rect x="767.85" y="368.88" width="9.4" height="8.15" fill="#ff9830"/><rect x="767.85" y="366.16" width="9.4" height="2.72" fill="#b877d9"/><rect x="767.85" y="337.19" width="9.4" height="28.98" fill="#37872d"/><rect x="767.85" y="319.53" width="9.4" height="17.66" fill="#f2d42a"/><rect x="767.85" y="307.31" width="9.4" height="12.22" fill="#4a84c2"/><rect x="767.85" y="301.42" width="9.4" height="5.89" fill="#8a1010"/><rect x="767.85" y="295.99" width="9.4" height="5.43" fill="#6d2a78"/><rect x="767.85" y="387.20" width="9.4" height="1.6" fill="#f2cc0c"/><rect x="783.64" y="386.99" width="9.4" height="1.81" fill="#8ab8ff"/><rect x="783.64" y="383.82" width="9.4" height="3.17" fill="#b877d9"/><rect x="783.64" y="372.95" width="9.4" height="10.87" fill="#37872d"/><rect x="783.64" y="367.52" width="9.4" height="5.43" fill="#f2d42a"/><rect x="783.64" y="361.18" width="9.4" height="6.34" fill="#4a84c2"/><rect x="783.64" y="358.92" width="9.4" height="2.26" fill="#6d2a78"/><rect x="799.43" y="379.75" width="9.4" height="9.06" fill="#8ab8ff"/><rect x="799.43" y="376.12" width="9.4" height="3.62" fill="#ff9830"/><rect x="799.43" y="351.67" width="9.4" height="24.45" fill="#37872d"/><rect x="799.43" y="338.54" width="9.4" height="13.13" fill="#f2d42a"/><rect x="799.43" y="328.13" width="9.4" height="10.41" fill="#4a84c2"/><rect x="799.43" y="324.51" width="9.4" height="3.62" fill="#8a1010"/><rect x="799.43" y="321.34" width="9.4" height="3.17" fill="#6d2a78"/><rect x="799.43" y="387.20" width="9.4" height="1.6" fill="#f2cc0c"/><rect x="815.22" y="385.63" width="9.4" height="3.17" fill="#8ab8ff"/><rect x="815.22" y="357.11" width="9.4" height="28.52" fill="#37872d"/><rect x="815.22" y="344.88" width="9.4" height="12.22" fill="#f2d42a"/><rect x="815.22" y="333.56" width="9.4" height="11.32" fill="#4a84c2"/><rect x="815.22" y="322.70" width="9.4" height="10.87" fill="#8a1010"/><rect x="815.22" y="318.17" width="9.4" height="4.53" fill="#6d2a78"/><rect x="815.22" y="387.20" width="9.4" height="1.6" fill="#f2cc0c"/><rect x="831.01" y="371.60" width="9.4" height="17.20" fill="#8ab8ff"/><rect x="831.01" y="363.90" width="9.4" height="7.70" fill="#ff9830"/><rect x="831.01" y="361.63" width="9.4" height="2.26" fill="#b877d9"/><rect x="831.01" y="318.17" width="9.4" height="43.46" fill="#37872d"/><rect x="831.01" y="297.80" width="9.4" height="20.37" fill="#f2d42a"/><rect x="831.01" y="282.40" width="9.4" height="15.39" fill="#4a84c2"/><rect x="831.01" y="269.27" width="9.4" height="13.13" fill="#8a1010"/><rect x="831.01" y="262.03" width="9.4" height="7.24" fill="#6d2a78"/><rect x="831.01" y="387.20" width="9.4" height="1.6" fill="#f2cc0c"/><rect x="846.80" y="377.03" width="9.4" height="11.77" fill="#8ab8ff"/><rect x="846.80" y="371.14" width="9.4" height="5.89" fill="#ff9830"/><rect x="846.80" y="369.33" width="9.4" height="1.81" fill="#b877d9"/><rect x="846.80" y="338.09" width="9.4" height="31.24" fill="#37872d"/><rect x="846.80" y="322.70" width="9.4" height="15.39" fill="#f2d42a"/><rect x="846.80" y="309.57" width="9.4" height="13.13" fill="#4a84c2"/><rect x="846.80" y="303.68" width="9.4" height="5.89" fill="#8a1010"/><rect x="846.80" y="300.51" width="9.4" height="3.17" fill="#6d2a78"/><rect x="846.80" y="387.20" width="9.4" height="1.6" fill="#f2cc0c"/><rect x="862.59" y="369.78" width="9.4" height="19.02" fill="#8ab8ff"/><rect x="862.59" y="358.92" width="9.4" height="10.87" fill="#ff9830"/><rect x="862.59" y="355.30" width="9.4" height="3.62" fill="#b877d9"/><rect x="862.59" y="314.55" width="9.4" height="40.75" fill="#37872d"/><rect x="862.59" y="294.63" width="9.4" height="19.92" fill="#f2d42a"/><rect x="862.59" y="277.42" width="9.4" height="17.20" fill="#4a84c2"/><rect x="862.59" y="269.27" width="9.4" height="8.15" fill="#8a1010"/><rect x="862.59" y="263.39" width="9.4" height="5.89" fill="#6d2a78"/><rect x="862.59" y="387.20" width="9.4" height="1.6" fill="#f2cc0c"/><rect x="878.38" y="375.22" width="9.4" height="13.58" fill="#8ab8ff"/><rect x="878.38" y="367.07" width="9.4" height="8.15" fill="#ff9830"/><rect x="878.38" y="363.45" width="9.4" height="3.62" fill="#b877d9"/><rect x="878.38" y="331.75" width="9.4" height="31.69" fill="#37872d"/><rect x="878.38" y="313.19" width="9.4" height="18.56" fill="#f2d42a"/><rect x="878.38" y="299.61" width="9.4" height="13.58" fill="#4a84c2"/><rect x="878.38" y="295.08" width="9.4" height="4.53" fill="#8a1010"/><rect x="878.38" y="291.46" width="9.4" height="3.62" fill="#6d2a78"/><rect x="878.38" y="387.20" width="9.4" height="1.6" fill="#f2cc0c"/><rect x="894.17" y="378.39" width="9.4" height="10.41" fill="#8ab8ff"/><rect x="894.17" y="375.22" width="9.4" height="3.17" fill="#ff9830"/><rect x="894.17" y="372.95" width="9.4" height="2.26" fill="#b877d9"/><rect x="894.17" y="343.07" width="9.4" height="29.88" fill="#37872d"/><rect x="894.17" y="327.23" width="9.4" height="15.85" fill="#f2d42a"/><rect x="894.17" y="313.64" width="9.4" height="13.58" fill="#4a84c2"/><rect x="894.17" y="307.76" width="9.4" height="5.89" fill="#8a1010"/><rect x="894.17" y="303.68" width="9.4" height="4.07" fill="#6d2a78"/><rect x="894.17" y="387.20" width="9.4" height="1.6" fill="#f2cc0c"/><rect x="909.96" y="382.46" width="9.4" height="6.34" fill="#b877d9"/><rect x="909.96" y="366.16" width="9.4" height="16.30" fill="#37872d"/><rect x="909.96" y="358.47" width="9.4" height="7.70" fill="#f2d42a"/><rect x="909.96" y="349.41" width="9.4" height="9.06" fill="#4a84c2"/><rect x="909.96" y="343.98" width="9.4" height="5.43" fill="#8a1010"/><rect x="909.96" y="342.17" width="9.4" height="1.81" fill="#6d2a78"/><rect x="925.75" y="384.27" width="9.4" height="4.53" fill="#8ab8ff"/><rect x="925.75" y="383.37" width="9.4" height="0.91" fill="#b877d9"/><rect x="925.75" y="365.26" width="9.4" height="18.11" fill="#37872d"/><rect x="925.75" y="353.94" width="9.4" height="11.32" fill="#f2d42a"/><rect x="925.75" y="343.53" width="9.4" height="10.41" fill="#4a84c2"/><rect x="925.75" y="342.17" width="9.4" height="1.36" fill="#6d2a78"/><rect x="925.75" y="387.20" width="9.4" height="1.6" fill="#f2cc0c"/><rect x="941.54" y="376.12" width="9.4" height="12.68" fill="#8ab8ff"/><rect x="941.54" y="370.24" width="9.4" height="5.89" fill="#ff9830"/><rect x="941.54" y="367.07" width="9.4" height="3.17" fill="#b877d9"/><rect x="941.54" y="334.92" width="9.4" height="32.15" fill="#37872d"/><rect x="941.54" y="319.98" width="9.4" height="14.94" fill="#f2d42a"/><rect x="941.54" y="305.95" width="9.4" height="14.04" fill="#4a84c2"/><rect x="941.54" y="299.16" width="9.4" height="6.79" fill="#8a1010"/><rect x="941.54" y="295.08" width="9.4" height="4.07" fill="#6d2a78"/><rect x="941.54" y="387.20" width="9.4" height="1.6" fill="#f2cc0c"/><rect x="957.33" y="372.95" width="9.4" height="15.85" fill="#8ab8ff"/><rect x="957.33" y="366.62" width="9.4" height="6.34" fill="#ff9830"/><rect x="957.33" y="364.80" width="9.4" height="1.81" fill="#b877d9"/><rect x="957.33" y="323.60" width="9.4" height="41.20" fill="#37872d"/><rect x="957.33" y="303.23" width="9.4" height="20.37" fill="#f2d42a"/><rect x="957.33" y="286.93" width="9.4" height="16.30" fill="#4a84c2"/><rect x="957.33" y="277.88" width="9.4" height="9.06" fill="#8a1010"/><rect x="957.33" y="272.90" width="9.4" height="4.98" fill="#6d2a78"/><rect x="957.33" y="387.20" width="9.4" height="1.6" fill="#f2cc0c"/><rect x="973.12" y="376.12" width="9.4" height="12.68" fill="#8ab8ff"/><rect x="973.12" y="372.95" width="9.4" height="3.17" fill="#ff9830"/><rect x="973.12" y="369.78" width="9.4" height="3.17" fill="#b877d9"/><rect x="973.12" y="341.26" width="9.4" height="28.52" fill="#37872d"/><rect x="973.12" y="318.17" width="9.4" height="23.09" fill="#f2d42a"/><rect x="973.12" y="305.04" width="9.4" height="13.13" fill="#4a84c2"/><rect x="973.12" y="298.70" width="9.4" height="6.34" fill="#8a1010"/><rect x="973.12" y="387.20" width="9.4" height="1.6" fill="#f2cc0c"/><rect x="988.91" y="382.01" width="9.4" height="6.79" fill="#37872d"/><rect x="988.91" y="379.75" width="9.4" height="2.26" fill="#f2d42a"/><rect x="988.91" y="377.93" width="9.4" height="1.81" fill="#4a84c2"/><rect x="988.91" y="377.03" width="9.4" height="0.91" fill="#6d2a78"/></svg>
<div class="t" style="right:1993.5px;top:382.9px;font-size:12px;color:#ccccdc;font-weight:400;text-align:right;">0</div>
<div class="t" style="right:1993.5px;top:337.7px;font-size:12px;color:#ccccdc;font-weight:400;text-align:right;">100</div>
<div class="t" style="right:1993.5px;top:292.4px;font-size:12px;color:#ccccdc;font-weight:400;text-align:right;">200</div>
<div class="t" style="right:1993.5px;top:247.1px;font-size:12px;color:#ccccdc;font-weight:400;text-align:right;">300</div>
<div class="t" style="right:1993.5px;top:201.8px;font-size:12px;color:#ccccdc;font-weight:400;text-align:right;">400</div>
<div class="t" style="left:142.4px;width:60px;top:396.0px;font-size:12px;color:#ccccdc;font-weight:400;text-align:center;">10:50</div>
<div class="t" style="left:301.3px;width:60px;top:396.0px;font-size:12px;color:#ccccdc;font-weight:400;text-align:center;">10:55</div>
<div class="t" style="left:458.2px;width:60px;top:396.0px;font-size:12px;color:#ccccdc;font-weight:400;text-align:center;">11:00</div>
<div class="t" style="left:616.6px;width:60px;top:396.0px;font-size:12px;color:#ccccdc;font-weight:400;text-align:center;">11:05</div>
<div class="t" style="left:775.3px;width:60px;top:396.0px;font-size:12px;color:#ccccdc;font-weight:400;text-align:center;">11:10</div>
<div class="t" style="left:932.4px;width:60px;top:396.0px;font-size:12px;color:#ccccdc;font-weight:400;text-align:center;">11:15</div>
<div class="b" style="left:25.0px;top:421.8px;width:12.8px;height:4.0px;background:#73bf69;border-radius:2px;"></div>
<div class="t" style="left:44.8px;top:417.7px;font-size:12px;color:#ccccdc;font-weight:400;">accounting</div>
<div class="b" style="left:112.2px;top:421.8px;width:12.8px;height:4.0px;background:#fade2a;border-radius:2px;"></div>
<div class="t" style="left:131.9px;top:417.7px;font-size:12px;color:#ccccdc;font-weight:400;">ad</div>
<div class="b" style="left:154.3px;top:421.8px;width:12.8px;height:4.0px;background:#8ab8ff;border-radius:2px;"></div>
<div class="t" style="left:174.2px;top:417.7px;font-size:12px;color:#ccccdc;font-weight:400;">cart</div>
<div class="b" style="left:204.0px;top:421.8px;width:12.8px;height:4.0px;background:#ff9830;border-radius:2px;"></div>
<div class="t" style="left:223.7px;top:417.7px;font-size:12px;color:#ccccdc;font-weight:400;">checkout</div>
<div class="b" style="left:281.0px;top:421.8px;width:12.8px;height:4.0px;background:#f2495c;border-radius:2px;"></div>
<div class="t" style="left:300.4px;top:417.7px;font-size:12px;color:#ccccdc;font-weight:400;">currency</div>
<div class="b" style="left:356.5px;top:421.8px;width:12.8px;height:4.0px;background:#5794f2;border-radius:2px;"></div>
<div class="t" style="left:376.2px;top:417.7px;font-size:12px;color:#ccccdc;font-weight:400;">email</div>
<div class="b" style="left:413.2px;top:421.8px;width:12.8px;height:4.0px;background:#b877d9;border-radius:2px;"></div>
<div class="t" style="left:432.8px;top:417.7px;font-size:12px;color:#ccccdc;font-weight:400;">flagd</div>
<div class="b" style="left:469.3px;top:421.8px;width:12.8px;height:4.0px;background:#705da0;border-radius:2px;"></div>
<div class="t" style="left:488.4px;top:417.7px;font-size:12px;color:#ccccdc;font-weight:400;">fraud-detection</div>
<div class="b" style="left:582.4px;top:421.8px;width:12.8px;height:4.0px;background:#37872d;border-radius:2px;"></div>
<div class="t" style="left:601.5px;top:417.7px;font-size:12px;color:#ccccdc;font-weight:400;">frontend</div>
<div class="b" style="left:655.6px;top:421.8px;width:12.8px;height:4.0px;background:#f2cc0c;border-radius:2px;"></div>
<div class="t" style="left:675.2px;top:417.7px;font-size:12px;color:#ccccdc;font-weight:400;">frontend-proxy</div>
<div class="b" style="left:766.5px;top:421.8px;width:12.8px;height:4.0px;background:#447ebc;border-radius:2px;"></div>
<div class="t" style="left:785.6px;top:417.7px;font-size:12px;color:#ccccdc;font-weight:400;">load-generator</div>
<div class="b" style="left:875.7px;top:421.8px;width:12.8px;height:4.0px;background:#c15c17;border-radius:2px;"></div>
<div class="t" style="left:894.8px;top:417.7px;font-size:12px;color:#ccccdc;font-weight:400;">payment</div>
<div class="b" style="left:25.0px;top:443.3px;width:12.8px;height:4.0px;background:#8f1010;border-radius:2px;"></div>
<div class="t" style="left:44.6px;top:439.2px;font-size:12px;color:#ccccdc;font-weight:400;">product-catalog</div>
<div class="b" style="left:141.0px;top:443.3px;width:12.8px;height:4.0px;background:#1f5c9e;border-radius:2px;"></div>
<div class="t" style="left:160.2px;top:439.2px;font-size:12px;color:#ccccdc;font-weight:400;">quote</div>
<div class="b" style="left:199.7px;top:443.3px;width:12.8px;height:4.0px;background:#6d1f62;border-radius:2px;"></div>
<div class="t" style="left:218.8px;top:439.2px;font-size:12px;color:#ccccdc;font-weight:400;">recommendation</div>
<div class="b" style="left:316.2px;top:443.3px;width:12.8px;height:4.0px;background:#584477;border-radius:2px;"></div>
<div class="t" style="left:336.1px;top:439.2px;font-size:12px;color:#ccccdc;font-weight:400;">shipping</div>
<svg class="s" style="left:0px;top:0px;pointer-events:none;" width="2039" height="470" viewBox="0 0 2039 470"><rect x="1051" y="408.7" width="956" height="1" fill="#2e3136"/><rect x="1051" y="376.1" width="956" height="1" fill="#2e3136"/><rect x="1051" y="343.6" width="956" height="1" fill="#2e3136"/><rect x="1051" y="311.0" width="956" height="1" fill="#2e3136"/><rect x="1051" y="278.4" width="956" height="1" fill="#2e3136"/><rect x="1051" y="245.9" width="956" height="1" fill="#2e3136"/><rect x="1051" y="213.3" width="956" height="1" fill="#2e3136"/><rect x="1173.8" y="208" width="1" height="202" fill="#2e3136"/><rect x="1332.8" y="208" width="1" height="202" fill="#2e3136"/><rect x="1492.0" y="208" width="1" height="202" fill="#2e3136"/><rect x="1651.7" y="208" width="1" height="202" fill="#2e3136"/><rect x="1811.0" y="208" width="1" height="202" fill="#2e3136"/><rect x="1970.3" y="208" width="1" height="202" fill="#2e3136"/><rect x="1090.45" y="403.20" width="8.6" height="6" fill="#263650" stroke="#5794f2" stroke-width="1"/><rect x="1106.45" y="390.16" width="8.6" height="18.54" fill="#715c8c" stroke="#9a78c8" stroke-width="1"/><rect x="1106.45" y="370.62" width="8.6" height="19.54" fill="#4a3f68" stroke="#5794f2" stroke-width="1"/><rect x="1106.45" y="331.54" width="8.6" height="39.08" fill="#5a2530" stroke="#f2495c" stroke-width="1"/><rect x="1122.20" y="390.16" width="8.6" height="18.54" fill="#715c8c" stroke="#9a78c8" stroke-width="1"/><rect x="1122.20" y="370.62" width="8.6" height="19.54" fill="#4a3f68" stroke="#5794f2" stroke-width="1"/><rect x="1122.20" y="331.54" width="8.6" height="39.08" fill="#5a2530" stroke="#f2495c" stroke-width="1"/><rect x="1122.20" y="403.19" width="8.6" height="5.51" fill="#3c5a3a" stroke="#56a64b" stroke-width="1"/><rect x="1138.45" y="396.67" width="8.6" height="12.03" fill="#715c8c" stroke="#9a78c8" stroke-width="1"/><rect x="1138.45" y="383.65" width="8.6" height="13.03" fill="#4a3f68" stroke="#5794f2" stroke-width="1"/><rect x="1138.45" y="357.59" width="8.6" height="26.05" fill="#5a2530" stroke="#f2495c" stroke-width="1"/><rect x="1153.70" y="403.19" width="8.6" height="5.51" fill="#715c8c" stroke="#9a78c8" stroke-width="1"/><rect x="1153.70" y="396.67" width="8.6" height="6.51" fill="#4a3f68" stroke="#5794f2" stroke-width="1"/><rect x="1153.70" y="383.65" width="8.6" height="13.03" fill="#5a2530" stroke="#f2495c" stroke-width="1"/><rect x="1169.95" y="403.19" width="8.6" height="5.51" fill="#715c8c" stroke="#9a78c8" stroke-width="1"/><rect x="1169.95" y="396.67" width="8.6" height="6.51" fill="#4a3f68" stroke="#5794f2" stroke-width="1"/><rect x="1169.95" y="383.65" width="8.6" height="13.03" fill="#5a2530" stroke="#f2495c" stroke-width="1"/><rect x="1186.45" y="396.67" width="8.6" height="12.03" fill="#715c8c" stroke="#9a78c8" stroke-width="1"/><rect x="1186.45" y="383.65" width="8.6" height="13.03" fill="#4a3f68" stroke="#5794f2" stroke-width="1"/><rect x="1186.45" y="357.59" width="8.6" height="26.05" fill="#5a2530" stroke="#f2495c" stroke-width="1"/><rect x="1201.45" y="396.67" width="8.6" height="12.03" fill="#715c8c" stroke="#9a78c8" stroke-width="1"/><rect x="1201.45" y="383.65" width="8.6" height="13.03" fill="#4a3f68" stroke="#5794f2" stroke-width="1"/><rect x="1201.45" y="357.59" width="8.6" height="26.05" fill="#5a2530" stroke="#f2495c" stroke-width="1"/><rect x="1217.95" y="403.19" width="8.6" height="5.51" fill="#715c8c" stroke="#9a78c8" stroke-width="1"/><rect x="1217.95" y="396.67" width="8.6" height="6.51" fill="#4a3f68" stroke="#5794f2" stroke-width="1"/><rect x="1217.95" y="383.65" width="8.6" height="13.03" fill="#5a2530" stroke="#f2495c" stroke-width="1"/><rect x="1233.45" y="396.67" width="8.6" height="12.03" fill="#715c8c" stroke="#9a78c8" stroke-width="1"/><rect x="1233.45" y="383.65" width="8.6" height="13.03" fill="#4a3f68" stroke="#5794f2" stroke-width="1"/><rect x="1233.45" y="357.59" width="8.6" height="26.05" fill="#5a2530" stroke="#f2495c" stroke-width="1"/><rect x="1249.45" y="403.19" width="8.6" height="5.51" fill="#715c8c" stroke="#9a78c8" stroke-width="1"/><rect x="1249.45" y="396.67" width="8.6" height="6.51" fill="#4a3f68" stroke="#5794f2" stroke-width="1"/><rect x="1249.45" y="383.65" width="8.6" height="13.03" fill="#5a2530" stroke="#f2495c" stroke-width="1"/><rect x="1265.70" y="403.19" width="8.6" height="5.51" fill="#715c8c" stroke="#9a78c8" stroke-width="1"/><rect x="1265.70" y="396.67" width="8.6" height="6.51" fill="#4a3f68" stroke="#5794f2" stroke-width="1"/><rect x="1265.70" y="383.65" width="8.6" height="13.03" fill="#5a2530" stroke="#f2495c" stroke-width="1"/><rect x="1281.45" y="390.16" width="8.6" height="18.54" fill="#715c8c" stroke="#9a78c8" stroke-width="1"/><rect x="1281.45" y="370.62" width="8.6" height="19.54" fill="#4a3f68" stroke="#5794f2" stroke-width="1"/><rect x="1281.45" y="331.54" width="8.6" height="39.08" fill="#5a2530" stroke="#f2495c" stroke-width="1"/><rect x="1297.45" y="396.67" width="8.6" height="12.03" fill="#715c8c" stroke="#9a78c8" stroke-width="1"/><rect x="1297.45" y="383.65" width="8.6" height="13.03" fill="#4a3f68" stroke="#5794f2" stroke-width="1"/><rect x="1297.45" y="357.59" width="8.6" height="26.05" fill="#5a2530" stroke="#f2495c" stroke-width="1"/><rect x="1312.95" y="390.16" width="8.6" height="18.54" fill="#715c8c" stroke="#9a78c8" stroke-width="1"/><rect x="1312.95" y="370.62" width="8.6" height="19.54" fill="#4a3f68" stroke="#5794f2" stroke-width="1"/><rect x="1312.95" y="331.54" width="8.6" height="39.08" fill="#5a2530" stroke="#f2495c" stroke-width="1"/><rect x="1329.20" y="403.20" width="8.6" height="6" fill="#4a4222" stroke="#f2cc0c" stroke-width="1"/><rect x="1345.45" y="370.62" width="8.6" height="38.08" fill="#715c8c" stroke="#9a78c8" stroke-width="1"/><rect x="1345.45" y="331.54" width="8.6" height="39.08" fill="#4a3f68" stroke="#5794f2" stroke-width="1"/><rect x="1345.45" y="253.38" width="8.6" height="78.16" fill="#5a2530" stroke="#f2495c" stroke-width="1"/><rect x="1377.20" y="403.19" width="8.6" height="5.51" fill="#715c8c" stroke="#9a78c8" stroke-width="1"/><rect x="1377.20" y="396.67" width="8.6" height="6.51" fill="#4a3f68" stroke="#5794f2" stroke-width="1"/><rect x="1377.20" y="383.65" width="8.6" height="13.03" fill="#5a2530" stroke="#f2495c" stroke-width="1"/><rect x="1392.45" y="396.67" width="8.6" height="12.03" fill="#715c8c" stroke="#9a78c8" stroke-width="1"/><rect x="1392.45" y="383.65" width="8.6" height="13.03" fill="#4a3f68" stroke="#5794f2" stroke-width="1"/><rect x="1392.45" y="357.59" width="8.6" height="26.05" fill="#5a2530" stroke="#f2495c" stroke-width="1"/><rect x="1408.70" y="403.19" width="8.6" height="5.51" fill="#715c8c" stroke="#9a78c8" stroke-width="1"/><rect x="1408.70" y="396.67" width="8.6" height="6.51" fill="#4a3f68" stroke="#5794f2" stroke-width="1"/><rect x="1408.70" y="383.65" width="8.6" height="13.03" fill="#5a2530" stroke="#f2495c" stroke-width="1"/><rect x="1424.95" y="396.67" width="8.6" height="12.03" fill="#715c8c" stroke="#9a78c8" stroke-width="1"/><rect x="1424.95" y="383.65" width="8.6" height="13.03" fill="#4a3f68" stroke="#5794f2" stroke-width="1"/><rect x="1424.95" y="357.59" width="8.6" height="26.05" fill="#5a2530" stroke="#f2495c" stroke-width="1"/><rect x="1440.45" y="390.16" width="8.6" height="18.54" fill="#715c8c" stroke="#9a78c8" stroke-width="1"/><rect x="1440.45" y="383.65" width="8.6" height="6.51" fill="#4a3f68" stroke="#5794f2" stroke-width="1"/><rect x="1440.45" y="357.59" width="8.6" height="26.05" fill="#5a2530" stroke="#f2495c" stroke-width="1"/><rect x="1440.45" y="403.19" width="8.6" height="5.51" fill="#3c5a3a" stroke="#56a64b" stroke-width="1"/><rect x="1456.45" y="390.16" width="8.6" height="18.54" fill="#715c8c" stroke="#9a78c8" stroke-width="1"/><rect x="1456.45" y="370.62" width="8.6" height="19.54" fill="#4a3f68" stroke="#5794f2" stroke-width="1"/><rect x="1456.45" y="331.54" width="8.6" height="39.08" fill="#5a2530" stroke="#f2495c" stroke-width="1"/><rect x="1472.20" y="403.19" width="8.6" height="5.51" fill="#715c8c" stroke="#9a78c8" stroke-width="1"/><rect x="1472.20" y="396.67" width="8.6" height="6.51" fill="#4a3f68" stroke="#5794f2" stroke-width="1"/><rect x="1472.20" y="383.65" width="8.6" height="13.03" fill="#5a2530" stroke="#f2495c" stroke-width="1"/><rect x="1488.20" y="403.19" width="8.6" height="5.51" fill="#715c8c" stroke="#9a78c8" stroke-width="1"/><rect x="1488.20" y="396.67" width="8.6" height="6.51" fill="#4a3f68" stroke="#5794f2" stroke-width="1"/><rect x="1488.20" y="383.65" width="8.6" height="13.03" fill="#5a2530" stroke="#f2495c" stroke-width="1"/><rect x="1504.45" y="396.67" width="8.6" height="12.03" fill="#715c8c" stroke="#9a78c8" stroke-width="1"/><rect x="1504.45" y="383.65" width="8.6" height="13.03" fill="#4a3f68" stroke="#5794f2" stroke-width="1"/><rect x="1504.45" y="357.59" width="8.6" height="26.05" fill="#5a2530" stroke="#f2495c" stroke-width="1"/><rect x="1536.60" y="377.13" width="8.6" height="31.57" fill="#715c8c" stroke="#9a78c8" stroke-width="1"/><rect x="1536.60" y="344.57" width="8.6" height="32.57" fill="#4a3f68" stroke="#5794f2" stroke-width="1"/><rect x="1536.60" y="279.43" width="8.6" height="65.13" fill="#5a2530" stroke="#f2495c" stroke-width="1"/><rect x="1551.90" y="383.65" width="8.6" height="25.05" fill="#715c8c" stroke="#9a78c8" stroke-width="1"/><rect x="1551.90" y="357.59" width="8.6" height="26.05" fill="#4a3f68" stroke="#5794f2" stroke-width="1"/><rect x="1551.90" y="305.49" width="8.6" height="52.11" fill="#5a2530" stroke="#f2495c" stroke-width="1"/><rect x="1568.20" y="390.16" width="8.6" height="18.54" fill="#715c8c" stroke="#9a78c8" stroke-width="1"/><rect x="1568.20" y="370.62" width="8.6" height="19.54" fill="#4a3f68" stroke="#5794f2" stroke-width="1"/><rect x="1568.20" y="331.54" width="8.6" height="39.08" fill="#5a2530" stroke="#f2495c" stroke-width="1"/><rect x="1584.60" y="390.16" width="8.6" height="18.54" fill="#715c8c" stroke="#9a78c8" stroke-width="1"/><rect x="1584.60" y="370.62" width="8.6" height="19.54" fill="#4a3f68" stroke="#5794f2" stroke-width="1"/><rect x="1584.60" y="331.54" width="8.6" height="39.08" fill="#5a2530" stroke="#f2495c" stroke-width="1"/><rect x="1599.90" y="396.67" width="8.6" height="12.03" fill="#715c8c" stroke="#9a78c8" stroke-width="1"/><rect x="1599.90" y="383.65" width="8.6" height="13.03" fill="#4a3f68" stroke="#5794f2" stroke-width="1"/><rect x="1599.90" y="357.59" width="8.6" height="26.05" fill="#5a2530" stroke="#f2495c" stroke-width="1"/><rect x="1616.20" y="390.16" width="8.6" height="18.54" fill="#715c8c" stroke="#9a78c8" stroke-width="1"/><rect x="1616.20" y="370.62" width="8.6" height="19.54" fill="#4a3f68" stroke="#5794f2" stroke-width="1"/><rect x="1616.20" y="331.54" width="8.6" height="39.08" fill="#5a2530" stroke="#f2495c" stroke-width="1"/><rect x="1631.80" y="370.62" width="8.6" height="38.08" fill="#715c8c" stroke="#9a78c8" stroke-width="1"/><rect x="1631.80" y="331.54" width="8.6" height="39.08" fill="#4a3f68" stroke="#5794f2" stroke-width="1"/><rect x="1631.80" y="253.38" width="8.6" height="78.16" fill="#5a2530" stroke="#f2495c" stroke-width="1"/><rect x="1647.90" y="396.67" width="8.6" height="12.03" fill="#715c8c" stroke="#9a78c8" stroke-width="1"/><rect x="1647.90" y="383.65" width="8.6" height="13.03" fill="#4a3f68" stroke="#5794f2" stroke-width="1"/><rect x="1647.90" y="357.59" width="8.6" height="26.05" fill="#5a2530" stroke="#f2495c" stroke-width="1"/><rect x="1664.00" y="403.19" width="8.6" height="5.51" fill="#715c8c" stroke="#9a78c8" stroke-width="1"/><rect x="1664.00" y="396.67" width="8.6" height="6.51" fill="#4a3f68" stroke="#5794f2" stroke-width="1"/><rect x="1664.00" y="383.65" width="8.6" height="13.03" fill="#5a2530" stroke="#f2495c" stroke-width="1"/><rect x="1695.60" y="403.19" width="8.6" height="5.51" fill="#715c8c" stroke="#9a78c8" stroke-width="1"/><rect x="1695.60" y="396.67" width="8.6" height="6.51" fill="#4a3f68" stroke="#5794f2" stroke-width="1"/><rect x="1695.60" y="383.65" width="8.6" height="13.03" fill="#5a2530" stroke="#f2495c" stroke-width="1"/><rect x="1711.50" y="403.19" width="8.6" height="5.51" fill="#715c8c" stroke="#9a78c8" stroke-width="1"/><rect x="1711.50" y="396.67" width="8.6" height="6.51" fill="#4a3f68" stroke="#5794f2" stroke-width="1"/><rect x="1711.50" y="383.65" width="8.6" height="13.03" fill="#5a2530" stroke="#f2495c" stroke-width="1"/><rect x="1727.50" y="403.19" width="8.6" height="5.51" fill="#715c8c" stroke="#9a78c8" stroke-width="1"/><rect x="1727.50" y="396.67" width="8.6" height="6.51" fill="#4a3f68" stroke="#5794f2" stroke-width="1"/><rect x="1727.50" y="383.65" width="8.6" height="13.03" fill="#5a2530" stroke="#f2495c" stroke-width="1"/><rect x="1743.60" y="403.19" width="8.6" height="5.51" fill="#715c8c" stroke="#9a78c8" stroke-width="1"/><rect x="1743.60" y="396.67" width="8.6" height="6.51" fill="#4a3f68" stroke="#5794f2" stroke-width="1"/><rect x="1743.60" y="383.65" width="8.6" height="13.03" fill="#5a2530" stroke="#f2495c" stroke-width="1"/><rect x="1759.20" y="403.19" width="8.6" height="5.51" fill="#715c8c" stroke="#9a78c8" stroke-width="1"/><rect x="1759.20" y="396.67" width="8.6" height="6.51" fill="#4a3f68" stroke="#5794f2" stroke-width="1"/><rect x="1759.20" y="383.65" width="8.6" height="13.03" fill="#5a2530" stroke="#f2495c" stroke-width="1"/><rect x="1759.20" y="403.19" width="8.6" height="5.51" fill="#3c5a3a" stroke="#56a64b" stroke-width="1"/><rect x="1775.50" y="390.16" width="8.6" height="18.54" fill="#715c8c" stroke="#9a78c8" stroke-width="1"/><rect x="1775.50" y="370.62" width="8.6" height="19.54" fill="#4a3f68" stroke="#5794f2" stroke-width="1"/><rect x="1775.50" y="331.54" width="8.6" height="39.08" fill="#5a2530" stroke="#f2495c" stroke-width="1"/><rect x="1807.20" y="403.19" width="8.6" height="5.51" fill="#715c8c" stroke="#9a78c8" stroke-width="1"/><rect x="1807.20" y="396.67" width="8.6" height="6.51" fill="#4a3f68" stroke="#5794f2" stroke-width="1"/><rect x="1807.20" y="383.65" width="8.6" height="13.03" fill="#5a2530" stroke="#f2495c" stroke-width="1"/><rect x="1823.50" y="396.67" width="8.6" height="12.03" fill="#715c8c" stroke="#9a78c8" stroke-width="1"/><rect x="1823.50" y="383.65" width="8.6" height="13.03" fill="#4a3f68" stroke="#5794f2" stroke-width="1"/><rect x="1823.50" y="357.59" width="8.6" height="26.05" fill="#5a2530" stroke="#f2495c" stroke-width="1"/><rect x="1838.60" y="383.65" width="8.6" height="25.05" fill="#715c8c" stroke="#9a78c8" stroke-width="1"/><rect x="1838.60" y="357.59" width="8.6" height="26.05" fill="#4a3f68" stroke="#5794f2" stroke-width="1"/><rect x="1838.60" y="305.49" width="8.6" height="52.11" fill="#5a2530" stroke="#f2495c" stroke-width="1"/><rect x="1854.90" y="396.67" width="8.6" height="12.03" fill="#715c8c" stroke="#9a78c8" stroke-width="1"/><rect x="1854.90" y="383.65" width="8.6" height="13.03" fill="#4a3f68" stroke="#5794f2" stroke-width="1"/><rect x="1854.90" y="357.59" width="8.6" height="26.05" fill="#5a2530" stroke="#f2495c" stroke-width="1"/><rect x="1870.50" y="396.67" width="8.6" height="12.03" fill="#715c8c" stroke="#9a78c8" stroke-width="1"/><rect x="1870.50" y="383.65" width="8.6" height="13.03" fill="#4a3f68" stroke="#5794f2" stroke-width="1"/><rect x="1870.50" y="357.59" width="8.6" height="26.05" fill="#5a2530" stroke="#f2495c" stroke-width="1"/><rect x="1886.60" y="390.16" width="8.6" height="18.54" fill="#715c8c" stroke="#9a78c8" stroke-width="1"/><rect x="1886.60" y="370.62" width="8.6" height="19.54" fill="#4a3f68" stroke="#5794f2" stroke-width="1"/><rect x="1886.60" y="331.54" width="8.6" height="39.08" fill="#5a2530" stroke="#f2495c" stroke-width="1"/><rect x="1902.70" y="390.16" width="8.6" height="18.54" fill="#715c8c" stroke="#9a78c8" stroke-width="1"/><rect x="1902.70" y="370.62" width="8.6" height="19.54" fill="#4a3f68" stroke="#5794f2" stroke-width="1"/><rect x="1902.70" y="331.54" width="8.6" height="39.08" fill="#5a2530" stroke="#f2495c" stroke-width="1"/><rect x="1934.30" y="403.19" width="8.6" height="5.51" fill="#715c8c" stroke="#9a78c8" stroke-width="1"/><rect x="1934.30" y="396.67" width="8.6" height="6.51" fill="#4a3f68" stroke="#5794f2" stroke-width="1"/><rect x="1934.30" y="383.65" width="8.6" height="13.03" fill="#5a2530" stroke="#f2495c" stroke-width="1"/><rect x="1950.20" y="396.67" width="8.6" height="12.03" fill="#715c8c" stroke="#9a78c8" stroke-width="1"/><rect x="1950.20" y="383.65" width="8.6" height="13.03" fill="#4a3f68" stroke="#5794f2" stroke-width="1"/><rect x="1950.20" y="357.59" width="8.6" height="26.05" fill="#5a2530" stroke="#f2495c" stroke-width="1"/><rect x="1966.50" y="364.11" width="8.6" height="44.59" fill="#715c8c" stroke="#9a78c8" stroke-width="1"/><rect x="1966.50" y="318.51" width="8.6" height="45.59" fill="#4a3f68" stroke="#5794f2" stroke-width="1"/><rect x="1966.50" y="227.33" width="8.6" height="91.19" fill="#5a2530" stroke="#f2495c" stroke-width="1"/><rect x="1982.60" y="390.16" width="8.6" height="18.54" fill="#715c8c" stroke="#9a78c8" stroke-width="1"/><rect x="1982.60" y="370.62" width="8.6" height="19.54" fill="#4a3f68" stroke="#5794f2" stroke-width="1"/><rect x="1982.60" y="331.54" width="8.6" height="39.08" fill="#5a2530" stroke="#f2495c" stroke-width="1"/><rect x="1997.90" y="403.19" width="8.6" height="5.51" fill="#715c8c" stroke="#9a78c8" stroke-width="1"/><rect x="1997.90" y="396.67" width="8.6" height="6.51" fill="#4a3f68" stroke="#5794f2" stroke-width="1"/><rect x="1997.90" y="383.65" width="8.6" height="13.03" fill="#5a2530" stroke="#f2495c" stroke-width="1"/></svg>
<div class="t" style="right:992.8px;top:403.3px;font-size:12px;color:#ccccdc;font-weight:400;text-align:right;">0</div>
<div class="t" style="right:992.8px;top:370.8px;font-size:12px;color:#ccccdc;font-weight:400;text-align:right;">5</div>
<div class="t" style="right:992.8px;top:338.2px;font-size:12px;color:#ccccdc;font-weight:400;text-align:right;">10</div>
<div class="t" style="right:992.8px;top:305.6px;font-size:12px;color:#ccccdc;font-weight:400;text-align:right;">15</div>
<div class="t" style="right:992.8px;top:273.1px;font-size:12px;color:#ccccdc;font-weight:400;text-align:right;">20</div>
<div class="t" style="right:992.8px;top:240.5px;font-size:12px;color:#ccccdc;font-weight:400;text-align:right;">25</div>
<div class="t" style="right:992.8px;top:207.9px;font-size:12px;color:#ccccdc;font-weight:400;text-align:right;">30</div>
<div class="t" style="left:1144.3px;width:60px;top:417.0px;font-size:12px;color:#ccccdc;font-weight:400;text-align:center;">10:50</div>
<div class="t" style="left:1303.3px;width:60px;top:417.0px;font-size:12px;color:#ccccdc;font-weight:400;text-align:center;">10:55</div>
<div class="t" style="left:1462.5px;width:60px;top:417.0px;font-size:12px;color:#ccccdc;font-weight:400;text-align:center;">11:00</div>
<div class="t" style="left:1622.2px;width:60px;top:417.0px;font-size:12px;color:#ccccdc;font-weight:400;text-align:center;">11:05</div>
<div class="t" style="left:1781.5px;width:60px;top:417.0px;font-size:12px;color:#ccccdc;font-weight:400;text-align:center;">11:10</div>
<div class="t" style="left:1940.8px;width:60px;top:417.0px;font-size:12px;color:#ccccdc;font-weight:400;text-align:center;">11:15</div>
<div class="b" style="left:1033.8px;top:442.4px;width:12.8px;height:4.0px;background:#73bf69;border-radius:2px;"></div>
<div class="t" style="left:1052.5px;top:438.3px;font-size:12px;color:#ccccdc;font-weight:400;">ad</div>
<div class="b" style="left:1075.0px;top:442.4px;width:12.8px;height:4.0px;background:#fade2a;border-radius:2px;"></div>
<div class="t" style="left:1094.5px;top:438.3px;font-size:12px;color:#ccccdc;font-weight:400;">checkout</div>
<div class="b" style="left:1152.6px;top:442.4px;width:12.8px;height:4.0px;background:#8ab8ff;border-radius:2px;"></div>
<div class="t" style="left:1171.8px;top:438.3px;font-size:12px;color:#ccccdc;font-weight:400;">flagd</div>
<div class="b" style="left:1208.0px;top:442.4px;width:12.8px;height:4.0px;background:#ff9830;border-radius:2px;"></div>
<div class="t" style="left:1227.0px;top:438.3px;font-size:12px;color:#ccccdc;font-weight:400;">fraud-detection</div>
<div class="b" style="left:1321.4px;top:442.4px;width:12.8px;height:4.0px;background:#f2495c;border-radius:2px;"></div>
<div class="t" style="left:1340.7px;top:438.3px;font-size:12px;color:#ccccdc;font-weight:400;">frontend</div>
<div class="b" style="left:1394.7px;top:442.4px;width:12.8px;height:4.0px;background:#5794f2;border-radius:2px;"></div>
<div class="t" style="left:1414.0px;top:438.3px;font-size:12px;color:#ccccdc;font-weight:400;">frontend-proxy</div>
<div class="b" style="left:1504.7px;top:442.4px;width:12.8px;height:4.0px;background:#b877d9;border-radius:2px;"></div>
<div class="t" style="left:1524.3px;top:438.3px;font-size:12px;color:#ccccdc;font-weight:400;">load-generator</div>
<div class="b" style="left:1614.6px;top:442.4px;width:12.8px;height:4.0px;background:#705da0;border-radius:2px;"></div>
<div class="t" style="left:1634.0px;top:438.3px;font-size:12px;color:#ccccdc;font-weight:400;">product-catalog</div>
<div class="b" style="left:1730.5px;top:442.4px;width:12.8px;height:4.0px;background:#37872d;border-radius:2px;"></div>
<div class="t" style="left:1749.2px;top:438.3px;font-size:12px;color:#ccccdc;font-weight:400;">recommendation</div>
<div class="b" style="left:21.3px;top:535.3px;width:984.5px;height:1.0px;background:#2a2d32;"></div>
<div class="t" style="left:26.5px;top:515.0px;font-size:14px;color:#d8d9e3;font-weight:400;-webkit-text-stroke:0.45px currentColor;">timestamp</div>
<div class="t" style="left:238.9px;top:515.6px;font-size:13.2px;color:#d8d9e3;font-weight:400;-webkit-text-stroke:0.45px currentColor;">Trace ID</div>
<div class="t" style="left:426.0px;top:515.2px;font-size:13.7px;color:#d8d9e3;font-weight:400;-webkit-text-stroke:0.45px currentColor;">Service Name</div>
<div class="t" style="left:924.2px;top:515.1px;font-size:13.8px;color:#d8d9e3;font-weight:400;-webkit-text-stroke:0.45px currentColor;">Duration</div>
<svg class="s" style="left:982px;top:517px;" width="13" height="12" viewBox="0 0 13 12"><path d="M6.7 1.8 V9.6 M3.1 6.2 L6.7 9.8 L10.3 6.2" fill="none" stroke="#ccccdc" stroke-width="1.4" stroke-linecap="round" stroke-linejoin="round"/></svg>
<div class="b" style="left:21.3px;top:567.9px;width:984.5px;height:1.0px;background:#2a2d32;"></div>
<div class="t" style="left:26.8px;top:544.8px;font-size:14px;color:#d8d9e3;font-weight:400;letter-spacing:0.72px;">2025-09-09 10:48:40</div>
<div class="t" style="left:238.7px;top:544.8px;font-size:14px;color:#6e9fff;font-weight:400;letter-spacing:0.35px;">2240a51767d20b8612...</div>
<div class="t" style="left:426.0px;top:544.8px;font-size:14px;color:#6e9fff;font-weight:400;letter-spacing:0.05px;">recommendation</div>
<div class="t" style="left:927.8px;top:545.1px;font-size:13.2px;color:#d8d9e3;font-weight:400;">10.0 mins</div>
<div class="b" style="left:21.3px;top:600.6px;width:984.5px;height:1.0px;background:#2a2d32;"></div>
<div class="t" style="left:26.8px;top:577.4px;font-size:14px;color:#d8d9e3;font-weight:400;letter-spacing:0.72px;">2025-09-09 11:08:40</div>
<div class="t" style="left:238.7px;top:577.4px;font-size:14px;color:#6e9fff;font-weight:400;letter-spacing:0.35px;">11c7644614649345a2...</div>
<div class="t" style="left:426.0px;top:577.4px;font-size:14px;color:#6e9fff;font-weight:400;letter-spacing:0.05px;">recommendation</div>
<div class="t" style="left:927.8px;top:577.8px;font-size:13.2px;color:#d8d9e3;font-weight:400;">10.0 mins</div>
<div class="b" style="left:21.3px;top:633.2px;width:984.5px;height:1.0px;background:#2a2d32;"></div>
<div class="t" style="left:26.8px;top:610.0px;font-size:14px;color:#d8d9e3;font-weight:400;letter-spacing:0.72px;">2025-09-09 10:58:40</div>
<div class="t" style="left:238.7px;top:610.0px;font-size:14px;color:#6e9fff;font-weight:400;letter-spacing:0.35px;">4dc3f1c4ce0f15b3cace...</div>
<div class="t" style="left:426.0px;top:610.0px;font-size:14px;color:#6e9fff;font-weight:400;letter-spacing:0.05px;">recommendation</div>
<div class="t" style="left:927.8px;top:610.4px;font-size:13.2px;color:#d8d9e3;font-weight:400;">10.0 mins</div>
<div class="b" style="left:21.3px;top:665.9px;width:984.5px;height:1.0px;background:#2a2d32;"></div>
<div class="t" style="left:26.8px;top:642.7px;font-size:14px;color:#d8d9e3;font-weight:400;letter-spacing:0.72px;">2025-09-09 10:58:54</div>
<div class="t" style="left:238.7px;top:642.7px;font-size:14px;color:#6e9fff;font-weight:400;letter-spacing:0.35px;">61f0ac49208f50e507a...</div>
<div class="t" style="left:426.0px;top:642.7px;font-size:14px;color:#6e9fff;font-weight:400;letter-spacing:0.05px;">fraud-detection</div>
<div class="t" style="left:927.8px;top:643.1px;font-size:13.2px;color:#d8d9e3;font-weight:400;">10.0 mins</div>
<div class="b" style="left:21.3px;top:698.5px;width:984.5px;height:1.0px;background:#2a2d32;"></div>
<div class="t" style="left:26.8px;top:675.3px;font-size:14px;color:#d8d9e3;font-weight:400;letter-spacing:0.72px;">2025-09-09 10:48:54</div>
<div class="t" style="left:238.7px;top:675.3px;font-size:14px;color:#6e9fff;font-weight:400;letter-spacing:0.35px;">918443815b44a90ebc...</div>
<div class="t" style="left:426.0px;top:675.3px;font-size:14px;color:#6e9fff;font-weight:400;letter-spacing:0.05px;">fraud-detection</div>
<div class="t" style="left:927.8px;top:675.7px;font-size:13.2px;color:#d8d9e3;font-weight:400;">10.0 mins</div>
<div class="b" style="left:21.3px;top:731.1px;width:984.5px;height:1.0px;background:#2a2d32;"></div>
<div class="t" style="left:26.8px;top:708.0px;font-size:14px;color:#d8d9e3;font-weight:400;letter-spacing:0.72px;">2025-09-09 10:48:43</div>
<div class="t" style="left:238.7px;top:708.0px;font-size:14px;color:#6e9fff;font-weight:400;letter-spacing:0.35px;">6868b86d5286ce5b3b...</div>
<div class="t" style="left:426.0px;top:708.0px;font-size:14px;color:#6e9fff;font-weight:400;letter-spacing:0.05px;">ad</div>
<div class="t" style="left:927.8px;top:708.3px;font-size:13.2px;color:#d8d9e3;font-weight:400;">10.0 mins</div>
<div class="b" style="left:21.3px;top:763.8px;width:984.5px;height:1.0px;background:#2a2d32;"></div>
<div class="t" style="left:26.8px;top:740.6px;font-size:14px;color:#d8d9e3;font-weight:400;letter-spacing:0.72px;">2025-09-09 11:08:43</div>
<div class="t" style="left:238.7px;top:740.6px;font-size:14px;color:#6e9fff;font-weight:400;letter-spacing:0.35px;">5916350fe09b56eb216...</div>
<div class="t" style="left:426.0px;top:740.6px;font-size:14px;color:#6e9fff;font-weight:400;letter-spacing:0.05px;">ad</div>
<div class="t" style="left:927.8px;top:741.0px;font-size:13.2px;color:#d8d9e3;font-weight:400;">10.0 mins</div>
<div class="b" style="left:21.3px;top:796.4px;width:984.5px;height:1.0px;background:#2a2d32;"></div>
<div class="t" style="left:26.8px;top:773.2px;font-size:14px;color:#d8d9e3;font-weight:400;letter-spacing:0.72px;">2025-09-09 10:58:43</div>
<div class="t" style="left:238.7px;top:773.2px;font-size:14px;color:#6e9fff;font-weight:400;letter-spacing:0.35px;">088b3c9fb2ef2643172...</div>
<div class="t" style="left:426.0px;top:773.2px;font-size:14px;color:#6e9fff;font-weight:400;letter-spacing:0.05px;">ad</div>
<div class="t" style="left:927.8px;top:773.6px;font-size:13.2px;color:#d8d9e3;font-weight:400;">10.0 mins</div>
<div class="b" style="left:21.3px;top:829.1px;width:984.5px;height:1.0px;background:#2a2d32;"></div>
<div class="t" style="left:26.8px;top:805.9px;font-size:14px;color:#d8d9e3;font-weight:400;letter-spacing:0.72px;">2025-09-09 10:46:33</div>
<div class="t" style="left:238.7px;top:805.9px;font-size:14px;color:#6e9fff;font-weight:400;letter-spacing:0.35px;">c5e7c83a5ce444d5e55...</div>
<div class="t" style="left:426.0px;top:805.9px;font-size:14px;color:#6e9fff;font-weight:400;letter-spacing:0.05px;">accounting</div>
<div class="t" style="left:927.8px;top:806.3px;font-size:13.2px;color:#d8d9e3;font-weight:400;">52.1 s</div>
<div class="b" style="left:21.3px;top:861.7px;width:984.5px;height:1.0px;background:#2a2d32;"></div>
<div class="t" style="left:26.8px;top:838.5px;font-size:14px;color:#d8d9e3;font-weight:400;letter-spacing:0.72px;">2025-09-09 10:47:59</div>
<div class="t" style="left:238.7px;top:838.5px;font-size:14px;color:#6e9fff;font-weight:400;letter-spacing:0.35px;">f936b6c0f3252d7cd3f...</div>
<div class="t" style="left:426.0px;top:838.5px;font-size:14px;color:#6e9fff;font-weight:400;letter-spacing:0.05px;">accounting</div>
<div class="t" style="left:927.8px;top:838.9px;font-size:13.2px;color:#d8d9e3;font-weight:400;">41.2 s</div>
<div class="b" style="left:231.9px;top:536.3px;width:1.0px;height:327.7px;background:#2a2d32;"></div>
<div class="b" style="left:419.0px;top:536.3px;width:1.0px;height:327.7px;background:#2a2d32;"></div>
<div class="b" style="left:585.7px;top:536.3px;width:1.0px;height:327.7px;background:#2a2d32;"></div>
<svg class="s" style="left:592px;top:542px;" width="326" height="20" viewBox="0 0 326 20"><rect x="0.50" y="0.5" width="5.4" height="18.7" rx="1.3" fill="#68b35c" stroke="#46833d" stroke-width="0.8"/><rect x="7.74" y="0.5" width="5.4" height="18.7" rx="1.3" fill="#68b35c" stroke="#46833d" stroke-width="0.8"/><rect x="14.97" y="0.5" width="5.4" height="18.7" rx="1.3" fill="#68b35c" stroke="#46833d" stroke-width="0.8"/><rect x="22.21" y="0.5" width="5.4" height="18.7" rx="1.3" fill="#68b35c" stroke="#46833d" stroke-width="0.8"/><rect x="29.44" y="0.5" width="5.4" height="18.7" rx="1.3" fill="#68b35c" stroke="#46833d" stroke-width="0.8"/><rect x="36.68" y="0.5" width="5.4" height="18.7" rx="1.3" fill="#68b35c" stroke="#46833d" stroke-width="0.8"/><rect x="43.91" y="0.5" width="5.4" height="18.7" rx="1.3" fill="#68b35c" stroke="#46833d" stroke-width="0.8"/><rect x="51.15" y="0.5" width="5.4" height="18.7" rx="1.3" fill="#68b35c" stroke="#46833d" stroke-width="0.8"/><rect x="58.38" y="0.5" width="5.4" height="18.7" rx="1.3" fill="#68b35c" stroke="#46833d" stroke-width="0.8"/><rect x="65.62" y="0.5" width="5.4" height="18.7" rx="1.3" fill="#68b35c" stroke="#46833d" stroke-width="0.8"/><rect x="72.85" y="0.5" width="5.4" height="18.7" rx="1.3" fill="#68b35c" stroke="#46833d" stroke-width="0.8"/><rect x="80.09" y="0.5" width="5.4" height="18.7" rx="1.3" fill="#68b35c" stroke="#46833d" stroke-width="0.8"/><rect x="87.32" y="0.5" width="5.4" height="18.7" rx="1.3" fill="#68b35c" stroke="#46833d" stroke-width="0.8"/><rect x="94.56" y="0.5" width="5.4" height="18.7" rx="1.3" fill="#68b35c" stroke="#46833d" stroke-width="0.8"/><rect x="101.79" y="0.5" width="5.4" height="18.7" rx="1.3" fill="#68b35c" stroke="#46833d" stroke-width="0.8"/><rect x="109.03" y="0.5" width="5.4" height="18.7" rx="1.3" fill="#68b35c" stroke="#46833d" stroke-width="0.8"/><rect x="116.26" y="0.5" width="5.4" height="18.7" rx="1.3" fill="#68b35c" stroke="#46833d" stroke-width="0.8"/><rect x="123.50" y="0.5" width="5.4" height="18.7" rx="1.3" fill="#68b35c" stroke="#46833d" stroke-width="0.8"/><rect x="130.73" y="0.5" width="5.4" height="18.7" rx="1.3" fill="#68b35c" stroke="#46833d" stroke-width="0.8"/><rect x="137.97" y="0.5" width="5.4" height="18.7" rx="1.3" fill="#68b35c" stroke="#46833d" stroke-width="0.8"/><rect x="145.20" y="0.5" width="5.4" height="18.7" rx="1.3" fill="#68b35c" stroke="#46833d" stroke-width="0.8"/><rect x="152.44" y="0.5" width="5.4" height="18.7" rx="1.3" fill="#68b35c" stroke="#46833d" stroke-width="0.8"/><rect x="159.67" y="0.5" width="5.4" height="18.7" rx="1.3" fill="#68b35c" stroke="#46833d" stroke-width="0.8"/><rect x="166.91" y="0.5" width="5.4" height="18.7" rx="1.3" fill="#68b35c" stroke="#46833d" stroke-width="0.8"/><rect x="174.14" y="0.5" width="5.4" height="18.7" rx="1.3" fill="#68b35c" stroke="#46833d" stroke-width="0.8"/><rect x="181.38" y="0.5" width="5.4" height="18.7" rx="1.3" fill="#68b35c" stroke="#46833d" stroke-width="0.8"/><rect x="188.61" y="0.5" width="5.4" height="18.7" rx="1.3" fill="#68b35c" stroke="#46833d" stroke-width="0.8"/><rect x="195.84" y="0.5" width="5.4" height="18.7" rx="1.3" fill="#68b35c" stroke="#46833d" stroke-width="0.8"/><rect x="203.08" y="0.5" width="5.4" height="18.7" rx="1.3" fill="#68b35c" stroke="#46833d" stroke-width="0.8"/><rect x="210.31" y="0.5" width="5.4" height="18.7" rx="1.3" fill="#68b35c" stroke="#46833d" stroke-width="0.8"/><rect x="217.55" y="0.5" width="5.4" height="18.7" rx="1.3" fill="#68b35c" stroke="#46833d" stroke-width="0.8"/><rect x="224.78" y="0.5" width="5.4" height="18.7" rx="1.3" fill="#68b35c" stroke="#46833d" stroke-width="0.8"/><rect x="232.02" y="0.5" width="5.4" height="18.7" rx="1.3" fill="#68b35c" stroke="#46833d" stroke-width="0.8"/><rect x="239.26" y="0.5" width="5.4" height="18.7" rx="1.3" fill="#68b35c" stroke="#46833d" stroke-width="0.8"/><rect x="246.49" y="0.5" width="5.4" height="18.7" rx="1.3" fill="#68b35c" stroke="#46833d" stroke-width="0.8"/><rect x="253.73" y="0.5" width="5.4" height="18.7" rx="1.3" fill="#68b35c" stroke="#46833d" stroke-width="0.8"/><rect x="260.96" y="0.5" width="5.4" height="18.7" rx="1.3" fill="#68b35c" stroke="#46833d" stroke-width="0.8"/><rect x="268.19" y="0.5" width="5.4" height="18.7" rx="1.3" fill="#68b35c" stroke="#46833d" stroke-width="0.8"/><rect x="275.43" y="0.5" width="5.4" height="18.7" rx="1.3" fill="#68b35c" stroke="#46833d" stroke-width="0.8"/><rect x="282.67" y="0.5" width="5.4" height="18.7" rx="1.3" fill="#68b35c" stroke="#46833d" stroke-width="0.8"/><rect x="289.90" y="0.5" width="5.4" height="18.7" rx="1.3" fill="#68b35c" stroke="#46833d" stroke-width="0.8"/><rect x="297.13" y="0.5" width="5.4" height="18.7" rx="1.3" fill="#68b35c" stroke="#46833d" stroke-width="0.8"/><rect x="304.37" y="0.5" width="5.4" height="18.7" rx="1.3" fill="#68b35c" stroke="#46833d" stroke-width="0.8"/><rect x="311.61" y="0.5" width="5.4" height="18.7" rx="1.3" fill="#68b35c" stroke="#46833d" stroke-width="0.8"/><rect x="318.84" y="0.5" width="5.4" height="18.7" rx="1.3" fill="#68b35c" stroke="#46833d" stroke-width="0.8"/></svg>
<svg class="s" style="left:592px;top:575px;" width="326" height="20" viewBox="0 0 326 20"><rect x="0.50" y="0.5" width="5.4" height="18.7" rx="1.3" fill="#68b35c" stroke="#46833d" stroke-width="0.8"/><rect x="7.74" y="0.5" width="5.4" height="18.7" rx="1.3" fill="#68b35c" stroke="#46833d" stroke-width="0.8"/><rect x="14.97" y="0.5" width="5.4" height="18.7" rx="1.3" fill="#68b35c" stroke="#46833d" stroke-width="0.8"/><rect x="22.21" y="0.5" width="5.4" height="18.7" rx="1.3" fill="#68b35c" stroke="#46833d" stroke-width="0.8"/><rect x="29.44" y="0.5" width="5.4" height="18.7" rx="1.3" fill="#68b35c" stroke="#46833d" stroke-width="0.8"/><rect x="36.68" y="0.5" width="5.4" height="18.7" rx="1.3" fill="#68b35c" stroke="#46833d" stroke-width="0.8"/><rect x="43.91" y="0.5" width="5.4" height="18.7" rx="1.3" fill="#68b35c" stroke="#46833d" stroke-width="0.8"/><rect x="51.15" y="0.5" width="5.4" height="18.7" rx="1.3" fill="#68b35c" stroke="#46833d" stroke-width="0.8"/><rect x="58.38" y="0.5" width="5.4" height="18.7" rx="1.3" fill="#68b35c" stroke="#46833d" stroke-width="0.8"/><rect x="65.62" y="0.5" width="5.4" height="18.7" rx="1.3" fill="#68b35c" stroke="#46833d" stroke-width="0.8"/><rect x="72.85" y="0.5" width="5.4" height="18.7" rx="1.3" fill="#68b35c" stroke="#46833d" stroke-width="0.8"/><rect x="80.09" y="0.5" width="5.4" height="18.7" rx="1.3" fill="#68b35c" stroke="#46833d" stroke-width="0.8"/><rect x="87.32" y="0.5" width="5.4" height="18.7" rx="1.3" fill="#68b35c" stroke="#46833d" stroke-width="0.8"/><rect x="94.56" y="0.5" width="5.4" height="18.7" rx="1.3" fill="#68b35c" stroke="#46833d" stroke-width="0.8"/><rect x="101.79" y="0.5" width="5.4" height="18.7" rx="1.3" fill="#68b35c" stroke="#46833d" stroke-width="0.8"/><rect x="109.03" y="0.5" width="5.4" height="18.7" rx="1.3" fill="#68b35c" stroke="#46833d" stroke-width="0.8"/><rect x="116.26" y="0.5" width="5.4" height="18.7" rx="1.3" fill="#68b35c" stroke="#46833d" stroke-width="0.8"/><rect x="123.50" y="0.5" width="5.4" height="18.7" rx="1.3" fill="#68b35c" stroke="#46833d" stroke-width="0.8"/><rect x="130.73" y="0.5" width="5.4" height="18.7" rx="1.3" fill="#68b35c" stroke="#46833d" stroke-width="0.8"/><rect x="137.97" y="0.5" width="5.4" height="18.7" rx="1.3" fill="#68b35c" stroke="#46833d" stroke-width="0.8"/><rect x="145.20" y="0.5" width="5.4" height="18.7" rx="1.3" fill="#68b35c" stroke="#46833d" stroke-width="0.8"/><rect x="152.44" y="0.5" width="5.4" height="18.7" rx="1.3" fill="#68b35c" stroke="#46833d" stroke-width="0.8"/><rect x="159.67" y="0.5" width="5.4" height="18.7" rx="1.3" fill="#68b35c" stroke="#46833d" stroke-width="0.8"/><rect x="166.91" y="0.5" width="5.4" height="18.7" rx="1.3" fill="#68b35c" stroke="#46833d" stroke-width="0.8"/><rect x="174.14" y="0.5" width="5.4" height="18.7" rx="1.3" fill="#68b35c" stroke="#46833d" stroke-width="0.8"/><rect x="181.38" y="0.5" width="5.4" height="18.7" rx="1.3" fill="#68b35c" stroke="#46833d" stroke-width="0.8"/><rect x="188.61" y="0.5" width="5.4" height="18.7" rx="1.3" fill="#68b35c" stroke="#46833d" stroke-width="0.8"/><rect x="195.84" y="0.5" width="5.4" height="18.7" rx="1.3" fill="#68b35c" stroke="#46833d" stroke-width="0.8"/><rect x="203.08" y="0.5" width="5.4" height="18.7" rx="1.3" fill="#68b35c" stroke="#46833d" stroke-width="0.8"/><rect x="210.31" y="0.5" width="5.4" height="18.7" rx="1.3" fill="#68b35c" stroke="#46833d" stroke-width="0.8"/><rect x="217.55" y="0.5" width="5.4" height="18.7" rx="1.3" fill="#68b35c" stroke="#46833d" stroke-width="0.8"/><rect x="224.78" y="0.5" width="5.4" height="18.7" rx="1.3" fill="#68b35c" stroke="#46833d" stroke-width="0.8"/><rect x="232.02" y="0.5" width="5.4" height="18.7" rx="1.3" fill="#68b35c" stroke="#46833d" stroke-width="0.8"/><rect x="239.26" y="0.5" width="5.4" height="18.7" rx="1.3" fill="#68b35c" stroke="#46833d" stroke-width="0.8"/><rect x="246.49" y="0.5" width="5.4" height="18.7" rx="1.3" fill="#68b35c" stroke="#46833d" stroke-width="0.8"/><rect x="253.73" y="0.5" width="5.4" height="18.7" rx="1.3" fill="#68b35c" stroke="#46833d" stroke-width="0.8"/><rect x="260.96" y="0.5" width="5.4" height="18.7" rx="1.3" fill="#68b35c" stroke="#46833d" stroke-width="0.8"/><rect x="268.19" y="0.5" width="5.4" height="18.7" rx="1.3" fill="#68b35c" stroke="#46833d" stroke-width="0.8"/><rect x="275.43" y="0.5" width="5.4" height="18.7" rx="1.3" fill="#68b35c" stroke="#46833d" stroke-width="0.8"/><rect x="282.67" y="0.5" width="5.4" height="18.7" rx="1.3" fill="#68b35c" stroke="#46833d" stroke-width="0.8"/><rect x="289.90" y="0.5" width="5.4" height="18.7" rx="1.3" fill="#68b35c" stroke="#46833d" stroke-width="0.8"/><rect x="297.13" y="0.5" width="5.4" height="18.7" rx="1.3" fill="#68b35c" stroke="#46833d" stroke-width="0.8"/><rect x="304.37" y="0.5" width="5.4" height="18.7" rx="1.3" fill="#68b35c" stroke="#46833d" stroke-width="0.8"/><rect x="311.61" y="0.5" width="5.4" height="18.7" rx="1.3" fill="#68b35c" stroke="#46833d" stroke-width="0.8"/><rect x="318.84" y="0.5" width="5.4" height="18.7" rx="1.3" fill="#68b35c" stroke="#46833d" stroke-width="0.8"/></svg>
<svg class="s" style="left:592px;top:607px;" width="326" height="20" viewBox="0 0 326 20"><rect x="0.50" y="0.5" width="5.4" height="18.7" rx="1.3" fill="#68b35c" stroke="#46833d" stroke-width="0.8"/><rect x="7.74" y="0.5" width="5.4" height="18.7" rx="1.3" fill="#68b35c" stroke="#46833d" stroke-width="0.8"/><rect x="14.97" y="0.5" width="5.4" height="18.7" rx="1.3" fill="#68b35c" stroke="#46833d" stroke-width="0.8"/><rect x="22.21" y="0.5" width="5.4" height="18.7" rx="1.3" fill="#68b35c" stroke="#46833d" stroke-width="0.8"/><rect x="29.44" y="0.5" width="5.4" height="18.7" rx="1.3" fill="#68b35c" stroke="#46833d" stroke-width="0.8"/><rect x="36.68" y="0.5" width="5.4" height="18.7" rx="1.3" fill="#68b35c" stroke="#46833d" stroke-width="0.8"/><rect x="43.91" y="0.5" width="5.4" height="18.7" rx="1.3" fill="#68b35c" stroke="#46833d" stroke-width="0.8"/><rect x="51.15" y="0.5" width="5.4" height="18.7" rx="1.3" fill="#68b35c" stroke="#46833d" stroke-width="0.8"/><rect x="58.38" y="0.5" width="5.4" height="18.7" rx="1.3" fill="#68b35c" stroke="#46833d" stroke-width="0.8"/><rect x="65.62" y="0.5" width="5.4" height="18.7" rx="1.3" fill="#68b35c" stroke="#46833d" stroke-width="0.8"/><rect x="72.85" y="0.5" width="5.4" height="18.7" rx="1.3" fill="#68b35c" stroke="#46833d" stroke-width="0.8"/><rect x="80.09" y="0.5" width="5.4" height="18.7" rx="1.3" fill="#68b35c" stroke="#46833d" stroke-width="0.8"/><rect x="87.32" y="0.5" width="5.4" height="18.7" rx="1.3" fill="#68b35c" stroke="#46833d" stroke-width="0.8"/><rect x="94.56" y="0.5" width="5.4" height="18.7" rx="1.3" fill="#68b35c" stroke="#46833d" stroke-width="0.8"/><rect x="101.79" y="0.5" width="5.4" height="18.7" rx="1.3" fill="#68b35c" stroke="#46833d" stroke-width="0.8"/><rect x="109.03" y="0.5" width="5.4" height="18.7" rx="1.3" fill="#68b35c" stroke="#46833d" stroke-width="0.8"/><rect x="116.26" y="0.5" width="5.4" height="18.7" rx="1.3" fill="#68b35c" stroke="#46833d" stroke-width="0.8"/><rect x="123.50" y="0.5" width="5.4" height="18.7" rx="1.3" fill="#68b35c" stroke="#46833d" stroke-width="0.8"/><rect x="130.73" y="0.5" width="5.4" height="18.7" rx="1.3" fill="#68b35c" stroke="#46833d" stroke-width="0.8"/><rect x="137.97" y="0.5" width="5.4" height="18.7" rx="1.3" fill="#68b35c" stroke="#46833d" stroke-width="0.8"/><rect x="145.20" y="0.5" width="5.4" height="18.7" rx="1.3" fill="#68b35c" stroke="#46833d" stroke-width="0.8"/><rect x="152.44" y="0.5" width="5.4" height="18.7" rx="1.3" fill="#68b35c" stroke="#46833d" stroke-width="0.8"/><rect x="159.67" y="0.5" width="5.4" height="18.7" rx="1.3" fill="#68b35c" stroke="#46833d" stroke-width="0.8"/><rect x="166.91" y="0.5" width="5.4" height="18.7" rx="1.3" fill="#68b35c" stroke="#46833d" stroke-width="0.8"/><rect x="174.14" y="0.5" width="5.4" height="18.7" rx="1.3" fill="#68b35c" stroke="#46833d" stroke-width="0.8"/><rect x="181.38" y="0.5" width="5.4" height="18.7" rx="1.3" fill="#68b35c" stroke="#46833d" stroke-width="0.8"/><rect x="188.61" y="0.5" width="5.4" height="18.7" rx="1.3" fill="#68b35c" stroke="#46833d" stroke-width="0.8"/><rect x="195.84" y="0.5" width="5.4" height="18.7" rx="1.3" fill="#68b35c" stroke="#46833d" stroke-width="0.8"/><rect x="203.08" y="0.5" width="5.4" height="18.7" rx="1.3" fill="#68b35c" stroke="#46833d" stroke-width="0.8"/><rect x="210.31" y="0.5" width="5.4" height="18.7" rx="1.3" fill="#68b35c" stroke="#46833d" stroke-width="0.8"/><rect x="217.55" y="0.5" width="5.4" height="18.7" rx="1.3" fill="#68b35c" stroke="#46833d" stroke-width="0.8"/><rect x="224.78" y="0.5" width="5.4" height="18.7" rx="1.3" fill="#68b35c" stroke="#46833d" stroke-width="0.8"/><rect x="232.02" y="0.5" width="5.4" height="18.7" rx="1.3" fill="#68b35c" stroke="#46833d" stroke-width="0.8"/><rect x="239.26" y="0.5" width="5.4" height="18.7" rx="1.3" fill="#68b35c" stroke="#46833d" stroke-width="0.8"/><rect x="246.49" y="0.5" width="5.4" height="18.7" rx="1.3" fill="#68b35c" stroke="#46833d" stroke-width="0.8"/><rect x="253.73" y="0.5" width="5.4" height="18.7" rx="1.3" fill="#68b35c" stroke="#46833d" stroke-width="0.8"/><rect x="260.96" y="0.5" width="5.4" height="18.7" rx="1.3" fill="#68b35c" stroke="#46833d" stroke-width="0.8"/><rect x="268.19" y="0.5" width="5.4" height="18.7" rx="1.3" fill="#68b35c" stroke="#46833d" stroke-width="0.8"/><rect x="275.43" y="0.5" width="5.4" height="18.7" rx="1.3" fill="#68b35c" stroke="#46833d" stroke-width="0.8"/><rect x="282.67" y="0.5" width="5.4" height="18.7" rx="1.3" fill="#68b35c" stroke="#46833d" stroke-width="0.8"/><rect x="289.90" y="0.5" width="5.4" height="18.7" rx="1.3" fill="#68b35c" stroke="#46833d" stroke-width="0.8"/><rect x="297.13" y="0.5" width="5.4" height="18.7" rx="1.3" fill="#68b35c" stroke="#46833d" stroke-width="0.8"/><rect x="304.37" y="0.5" width="5.4" height="18.7" rx="1.3" fill="#68b35c" stroke="#46833d" stroke-width="0.8"/><rect x="311.61" y="0.5" width="5.4" height="18.7" rx="1.3" fill="#68b35c" stroke="#46833d" stroke-width="0.8"/><rect x="318.84" y="0.5" width="5.4" height="18.7" rx="1.3" fill="#68b35c" stroke="#46833d" stroke-width="0.8"/></svg>
<svg class="s" style="left:592px;top:640px;" width="326" height="20" viewBox="0 0 326 20"><rect x="0.50" y="0.5" width="5.4" height="18.7" rx="1.3" fill="#68b35c" stroke="#46833d" stroke-width="0.8"/><rect x="7.74" y="0.5" width="5.4" height="18.7" rx="1.3" fill="#68b35c" stroke="#46833d" stroke-width="0.8"/><rect x="14.97" y="0.5" width="5.4" height="18.7" rx="1.3" fill="#68b35c" stroke="#46833d" stroke-width="0.8"/><rect x="22.21" y="0.5" width="5.4" height="18.7" rx="1.3" fill="#68b35c" stroke="#46833d" stroke-width="0.8"/><rect x="29.44" y="0.5" width="5.4" height="18.7" rx="1.3" fill="#68b35c" stroke="#46833d" stroke-width="0.8"/><rect x="36.68" y="0.5" width="5.4" height="18.7" rx="1.3" fill="#68b35c" stroke="#46833d" stroke-width="0.8"/><rect x="43.91" y="0.5" width="5.4" height="18.7" rx="1.3" fill="#68b35c" stroke="#46833d" stroke-width="0.8"/><rect x="51.15" y="0.5" width="5.4" height="18.7" rx="1.3" fill="#68b35c" stroke="#46833d" stroke-width="0.8"/><rect x="58.38" y="0.5" width="5.4" height="18.7" rx="1.3" fill="#68b35c" stroke="#46833d" stroke-width="0.8"/><rect x="65.62" y="0.5" width="5.4" height="18.7" rx="1.3" fill="#68b35c" stroke="#46833d" stroke-width="0.8"/><rect x="72.85" y="0.5" width="5.4" height="18.7" rx="1.3" fill="#68b35c" stroke="#46833d" stroke-width="0.8"/><rect x="80.09" y="0.5" width="5.4" height="18.7" rx="1.3" fill="#68b35c" stroke="#46833d" stroke-width="0.8"/><rect x="87.32" y="0.5" width="5.4" height="18.7" rx="1.3" fill="#68b35c" stroke="#46833d" stroke-width="0.8"/><rect x="94.56" y="0.5" width="5.4" height="18.7" rx="1.3" fill="#68b35c" stroke="#46833d" stroke-width="0.8"/><rect x="101.79" y="0.5" width="5.4" height="18.7" rx="1.3" fill="#68b35c" stroke="#46833d" stroke-width="0.8"/><rect x="109.03" y="0.5" width="5.4" height="18.7" rx="1.3" fill="#68b35c" stroke="#46833d" stroke-width="0.8"/><rect x="116.26" y="0.5" width="5.4" height="18.7" rx="1.3" fill="#68b35c" stroke="#46833d" stroke-width="0.8"/><rect x="123.50" y="0.5" width="5.4" height="18.7" rx="1.3" fill="#68b35c" stroke="#46833d" stroke-width="0.8"/><rect x="130.73" y="0.5" width="5.4" height="18.7" rx="1.3" fill="#68b35c" stroke="#46833d" stroke-width="0.8"/><rect x="137.97" y="0.5" width="5.4" height="18.7" rx="1.3" fill="#68b35c" stroke="#46833d" stroke-width="0.8"/><rect x="145.20" y="0.5" width="5.4" height="18.7" rx="1.3" fill="#68b35c" stroke="#46833d" stroke-width="0.8"/><rect x="152.44" y="0.5" width="5.4" height="18.7" rx="1.3" fill="#68b35c" stroke="#46833d" stroke-width="0.8"/><rect x="159.67" y="0.5" width="5.4" height="18.7" rx="1.3" fill="#68b35c" stroke="#46833d" stroke-width="0.8"/><rect x="166.91" y="0.5" width="5.4" height="18.7" rx="1.3" fill="#68b35c" stroke="#46833d" stroke-width="0.8"/><rect x="174.14" y="0.5" width="5.4" height="18.7" rx="1.3" fill="#68b35c" stroke="#46833d" stroke-width="0.8"/><rect x="181.38" y="0.5" width="5.4" height="18.7" rx="1.3" fill="#68b35c" stroke="#46833d" stroke-width="0.8"/><rect x="188.61" y="0.5" width="5.4" height="18.7" rx="1.3" fill="#68b35c" stroke="#46833d" stroke-width="0.8"/><rect x="195.84" y="0.5" width="5.4" height="18.7" rx="1.3" fill="#68b35c" stroke="#46833d" stroke-width="0.8"/><rect x="203.08" y="0.5" width="5.4" height="18.7" rx="1.3" fill="#68b35c" stroke="#46833d" stroke-width="0.8"/><rect x="210.31" y="0.5" width="5.4" height="18.7" rx="1.3" fill="#68b35c" stroke="#46833d" stroke-width="0.8"/><rect x="217.55" y="0.5" width="5.4" height="18.7" rx="1.3" fill="#68b35c" stroke="#46833d" stroke-width="0.8"/><rect x="224.78" y="0.5" width="5.4" height="18.7" rx="1.3" fill="#68b35c" stroke="#46833d" stroke-width="0.8"/><rect x="232.02" y="0.5" width="5.4" height="18.7" rx="1.3" fill="#68b35c" stroke="#46833d" stroke-width="0.8"/><rect x="239.26" y="0.5" width="5.4" height="18.7" rx="1.3" fill="#68b35c" stroke="#46833d" stroke-width="0.8"/><rect x="246.49" y="0.5" width="5.4" height="18.7" rx="1.3" fill="#68b35c" stroke="#46833d" stroke-width="0.8"/><rect x="253.73" y="0.5" width="5.4" height="18.7" rx="1.3" fill="#68b35c" stroke="#46833d" stroke-width="0.8"/><rect x="260.96" y="0.5" width="5.4" height="18.7" rx="1.3" fill="#68b35c" stroke="#46833d" stroke-width="0.8"/><rect x="268.19" y="0.5" width="5.4" height="18.7" rx="1.3" fill="#68b35c" stroke="#46833d" stroke-width="0.8"/><rect x="275.43" y="0.5" width="5.4" height="18.7" rx="1.3" fill="#68b35c" stroke="#46833d" stroke-width="0.8"/><rect x="282.67" y="0.5" width="5.4" height="18.7" rx="1.3" fill="#68b35c" stroke="#46833d" stroke-width="0.8"/><rect x="289.90" y="0.5" width="5.4" height="18.7" rx="1.3" fill="#68b35c" stroke="#46833d" stroke-width="0.8"/><rect x="297.13" y="0.5" width="5.4" height="18.7" rx="1.3" fill="#68b35c" stroke="#46833d" stroke-width="0.8"/><rect x="304.37" y="0.5" width="5.4" height="18.7" rx="1.3" fill="#68b35c" stroke="#46833d" stroke-width="0.8"/><rect x="311.61" y="0.5" width="5.4" height="18.7" rx="1.3" fill="#68b35c" stroke="#46833d" stroke-width="0.8"/><rect x="318.84" y="0.5" width="5.4" height="18.7" rx="1.3" fill="#68b35c" stroke="#46833d" stroke-width="0.8"/></svg>
<svg class="s" style="left:592px;top:673px;" width="326" height="20" viewBox="0 0 326 20"><rect x="0.50" y="0.5" width="5.4" height="18.7" rx="1.3" fill="#68b35c" stroke="#46833d" stroke-width="0.8"/><rect x="7.74" y="0.5" width="5.4" height="18.7" rx="1.3" fill="#68b35c" stroke="#46833d" stroke-width="0.8"/><rect x="14.97" y="0.5" width="5.4" height="18.7" rx="1.3" fill="#68b35c" stroke="#46833d" stroke-width="0.8"/><rect x="22.21" y="0.5" width="5.4" height="18.7" rx="1.3" fill="#68b35c" stroke="#46833d" stroke-width="0.8"/><rect x="29.44" y="0.5" width="5.4" height="18.7" rx="1.3" fill="#68b35c" stroke="#46833d" stroke-width="0.8"/><rect x="36.68" y="0.5" width="5.4" height="18.7" rx="1.3" fill="#68b35c" stroke="#46833d" stroke-width="0.8"/><rect x="43.91" y="0.5" width="5.4" height="18.7" rx="1.3" fill="#68b35c" stroke="#46833d" stroke-width="0.8"/><rect x="51.15" y="0.5" width="5.4" height="18.7" rx="1.3" fill="#68b35c" stroke="#46833d" stroke-width="0.8"/><rect x="58.38" y="0.5" width="5.4" height="18.7" rx="1.3" fill="#68b35c" stroke="#46833d" stroke-width="0.8"/><rect x="65.62" y="0.5" width="5.4" height="18.7" rx="1.3" fill="#68b35c" stroke="#46833d" stroke-width="0.8"/><rect x="72.85" y="0.5" width="5.4" height="18.7" rx="1.3" fill="#68b35c" stroke="#46833d" stroke-width="0.8"/><rect x="80.09" y="0.5" width="5.4" height="18.7" rx="1.3" fill="#68b35c" stroke="#46833d" stroke-width="0.8"/><rect x="87.32" y="0.5" width="5.4" height="18.7" rx="1.3" fill="#68b35c" stroke="#46833d" stroke-width="0.8"/><rect x="94.56" y="0.5" width="5.4" height="18.7" rx="1.3" fill="#68b35c" stroke="#46833d" stroke-width="0.8"/><rect x="101.79" y="0.5" width="5.4" height="18.7" rx="1.3" fill="#68b35c" stroke="#46833d" stroke-width="0.8"/><rect x="109.03" y="0.5" width="5.4" height="18.7" rx="1.3" fill="#68b35c" stroke="#46833d" stroke-width="0.8"/><rect x="116.26" y="0.5" width="5.4" height="18.7" rx="1.3" fill="#68b35c" stroke="#46833d" stroke-width="0.8"/><rect x="123.50" y="0.5" width="5.4" height="18.7" rx="1.3" fill="#68b35c" stroke="#46833d" stroke-width="0.8"/><rect x="130.73" y="0.5" width="5.4" height="18.7" rx="1.3" fill="#68b35c" stroke="#46833d" stroke-width="0.8"/><rect x="137.97" y="0.5" width="5.4" height="18.7" rx="1.3" fill="#68b35c" stroke="#46833d" stroke-width="0.8"/><rect x="145.20" y="0.5" width="5.4" height="18.7" rx="1.3" fill="#68b35c" stroke="#46833d" stroke-width="0.8"/><rect x="152.44" y="0.5" width="5.4" height="18.7" rx="1.3" fill="#68b35c" stroke="#46833d" stroke-width="0.8"/><rect x="159.67" y="0.5" width="5.4" height="18.7" rx="1.3" fill="#68b35c" stroke="#46833d" stroke-width="0.8"/><rect x="166.91" y="0.5" width="5.4" height="18.7" rx="1.3" fill="#68b35c" stroke="#46833d" stroke-width="0.8"/><rect x="174.14" y="0.5" width="5.4" height="18.7" rx="1.3" fill="#68b35c" stroke="#46833d" stroke-width="0.8"/><rect x="181.38" y="0.5" width="5.4" height="18.7" rx="1.3" fill="#68b35c" stroke="#46833d" stroke-width="0.8"/><rect x="188.61" y="0.5" width="5.4" height="18.7" rx="1.3" fill="#68b35c" stroke="#46833d" stroke-width="0.8"/><rect x="195.84" y="0.5" width="5.4" height="18.7" rx="1.3" fill="#68b35c" stroke="#46833d" stroke-width="0.8"/><rect x="203.08" y="0.5" width="5.4" height="18.7" rx="1.3" fill="#68b35c" stroke="#46833d" stroke-width="0.8"/><rect x="210.31" y="0.5" width="5.4" height="18.7" rx="1.3" fill="#68b35c" stroke="#46833d" stroke-width="0.8"/><rect x="217.55" y="0.5" width="5.4" height="18.7" rx="1.3" fill="#68b35c" stroke="#46833d" stroke-width="0.8"/><rect x="224.78" y="0.5" width="5.4" height="18.7" rx="1.3" fill="#68b35c" stroke="#46833d" stroke-width="0.8"/><rect x="232.02" y="0.5" width="5.4" height="18.7" rx="1.3" fill="#68b35c" stroke="#46833d" stroke-width="0.8"/><rect x="239.26" y="0.5" width="5.4" height="18.7" rx="1.3" fill="#68b35c" stroke="#46833d" stroke-width="0.8"/><rect x="246.49" y="0.5" width="5.4" height="18.7" rx="1.3" fill="#68b35c" stroke="#46833d" stroke-width="0.8"/><rect x="253.73" y="0.5" width="5.4" height="18.7" rx="1.3" fill="#68b35c" stroke="#46833d" stroke-width="0.8"/><rect x="260.96" y="0.5" width="5.4" height="18.7" rx="1.3" fill="#68b35c" stroke="#46833d" stroke-width="0.8"/><rect x="268.19" y="0.5" width="5.4" height="18.7" rx="1.3" fill="#68b35c" stroke="#46833d" stroke-width="0.8"/><rect x="275.43" y="0.5" width="5.4" height="18.7" rx="1.3" fill="#68b35c" stroke="#46833d" stroke-width="0.8"/><rect x="282.67" y="0.5" width="5.4" height="18.7" rx="1.3" fill="#68b35c" stroke="#46833d" stroke-width="0.8"/><rect x="289.90" y="0.5" width="5.4" height="18.7" rx="1.3" fill="#68b35c" stroke="#46833d" stroke-width="0.8"/><rect x="297.13" y="0.5" width="5.4" height="18.7" rx="1.3" fill="#68b35c" stroke="#46833d" stroke-width="0.8"/><rect x="304.37" y="0.5" width="5.4" height="18.7" rx="1.3" fill="#68b35c" stroke="#46833d" stroke-width="0.8"/><rect x="311.61" y="0.5" width="5.4" height="18.7" rx="1.3" fill="#68b35c" stroke="#46833d" stroke-width="0.8"/><rect x="318.84" y="0.5" width="5.4" height="18.7" rx="1.3" fill="#68b35c" stroke="#46833d" stroke-width="0.8"/></svg>
<svg class="s" style="left:592px;top:705px;" width="326" height="20" viewBox="0 0 326 20"><rect x="0.50" y="0.5" width="5.4" height="18.7" rx="1.3" fill="#68b35c" stroke="#46833d" stroke-width="0.8"/><rect x="7.74" y="0.5" width="5.4" height="18.7" rx="1.3" fill="#68b35c" stroke="#46833d" stroke-width="0.8"/><rect x="14.97" y="0.5" width="5.4" height="18.7" rx="1.3" fill="#68b35c" stroke="#46833d" stroke-width="0.8"/><rect x="22.21" y="0.5" width="5.4" height="18.7" rx="1.3" fill="#68b35c" stroke="#46833d" stroke-width="0.8"/><rect x="29.44" y="0.5" width="5.4" height="18.7" rx="1.3" fill="#68b35c" stroke="#46833d" stroke-width="0.8"/><rect x="36.68" y="0.5" width="5.4" height="18.7" rx="1.3" fill="#68b35c" stroke="#46833d" stroke-width="0.8"/><rect x="43.91" y="0.5" width="5.4" height="18.7" rx="1.3" fill="#68b35c" stroke="#46833d" stroke-width="0.8"/><rect x="51.15" y="0.5" width="5.4" height="18.7" rx="1.3" fill="#68b35c" stroke="#46833d" stroke-width="0.8"/><rect x="58.38" y="0.5" width="5.4" height="18.7" rx="1.3" fill="#68b35c" stroke="#46833d" stroke-width="0.8"/><rect x="65.62" y="0.5" width="5.4" height="18.7" rx="1.3" fill="#68b35c" stroke="#46833d" stroke-width="0.8"/><rect x="72.85" y="0.5" width="5.4" height="18.7" rx="1.3" fill="#68b35c" stroke="#46833d" stroke-width="0.8"/><rect x="80.09" y="0.5" width="5.4" height="18.7" rx="1.3" fill="#68b35c" stroke="#46833d" stroke-width="0.8"/><rect x="87.32" y="0.5" width="5.4" height="18.7" rx="1.3" fill="#68b35c" stroke="#46833d" stroke-width="0.8"/><rect x="94.56" y="0.5" width="5.4" height="18.7" rx="1.3" fill="#68b35c" stroke="#46833d" stroke-width="0.8"/><rect x="101.79" y="0.5" width="5.4" height="18.7" rx="1.3" fill="#68b35c" stroke="#46833d" stroke-width="0.8"/><rect x="109.03" y="0.5" width="5.4" height="18.7" rx="1.3" fill="#68b35c" stroke="#46833d" stroke-width="0.8"/><rect x="116.26" y="0.5" width="5.4" height="18.7" rx="1.3" fill="#68b35c" stroke="#46833d" stroke-width="0.8"/><rect x="123.50" y="0.5" width="5.4" height="18.7" rx="1.3" fill="#68b35c" stroke="#46833d" stroke-width="0.8"/><rect x="130.73" y="0.5" width="5.4" height="18.7" rx="1.3" fill="#68b35c" stroke="#46833d" stroke-width="0.8"/><rect x="137.97" y="0.5" width="5.4" height="18.7" rx="1.3" fill="#68b35c" stroke="#46833d" stroke-width="0.8"/><rect x="145.20" y="0.5" width="5.4" height="18.7" rx="1.3" fill="#68b35c" stroke="#46833d" stroke-width="0.8"/><rect x="152.44" y="0.5" width="5.4" height="18.7" rx="1.3" fill="#68b35c" stroke="#46833d" stroke-width="0.8"/><rect x="159.67" y="0.5" width="5.4" height="18.7" rx="1.3" fill="#68b35c" stroke="#46833d" stroke-width="0.8"/><rect x="166.91" y="0.5" width="5.4" height="18.7" rx="1.3" fill="#68b35c" stroke="#46833d" stroke-width="0.8"/><rect x="174.14" y="0.5" width="5.4" height="18.7" rx="1.3" fill="#68b35c" stroke="#46833d" stroke-width="0.8"/><rect x="181.38" y="0.5" width="5.4" height="18.7" rx="1.3" fill="#68b35c" stroke="#46833d" stroke-width="0.8"/><rect x="188.61" y="0.5" width="5.4" height="18.7" rx="1.3" fill="#68b35c" stroke="#46833d" stroke-width="0.8"/><rect x="195.84" y="0.5" width="5.4" height="18.7" rx="1.3" fill="#68b35c" stroke="#46833d" stroke-width="0.8"/><rect x="203.08" y="0.5" width="5.4" height="18.7" rx="1.3" fill="#68b35c" stroke="#46833d" stroke-width="0.8"/><rect x="210.31" y="0.5" width="5.4" height="18.7" rx="1.3" fill="#68b35c" stroke="#46833d" stroke-width="0.8"/><rect x="217.55" y="0.5" width="5.4" height="18.7" rx="1.3" fill="#68b35c" stroke="#46833d" stroke-width="0.8"/><rect x="224.78" y="0.5" width="5.4" height="18.7" rx="1.3" fill="#68b35c" stroke="#46833d" stroke-width="0.8"/><rect x="232.02" y="0.5" width="5.4" height="18.7" rx="1.3" fill="#68b35c" stroke="#46833d" stroke-width="0.8"/><rect x="239.26" y="0.5" width="5.4" height="18.7" rx="1.3" fill="#68b35c" stroke="#46833d" stroke-width="0.8"/><rect x="246.49" y="0.5" width="5.4" height="18.7" rx="1.3" fill="#68b35c" stroke="#46833d" stroke-width="0.8"/><rect x="253.73" y="0.5" width="5.4" height="18.7" rx="1.3" fill="#68b35c" stroke="#46833d" stroke-width="0.8"/><rect x="260.96" y="0.5" width="5.4" height="18.7" rx="1.3" fill="#68b35c" stroke="#46833d" stroke-width="0.8"/><rect x="268.19" y="0.5" width="5.4" height="18.7" rx="1.3" fill="#68b35c" stroke="#46833d" stroke-width="0.8"/><rect x="275.43" y="0.5" width="5.4" height="18.7" rx="1.3" fill="#68b35c" stroke="#46833d" stroke-width="0.8"/><rect x="282.67" y="0.5" width="5.4" height="18.7" rx="1.3" fill="#68b35c" stroke="#46833d" stroke-width="0.8"/><rect x="289.90" y="0.5" width="5.4" height="18.7" rx="1.3" fill="#68b35c" stroke="#46833d" stroke-width="0.8"/><rect x="297.13" y="0.5" width="5.4" height="18.7" rx="1.3" fill="#68b35c" stroke="#46833d" stroke-width="0.8"/><rect x="304.37" y="0.5" width="5.4" height="18.7" rx="1.3" fill="#68b35c" stroke="#46833d" stroke-width="0.8"/><rect x="311.61" y="0.5" width="5.4" height="18.7" rx="1.3" fill="#68b35c" stroke="#46833d" stroke-width="0.8"/><rect x="318.84" y="0.5" width="5.4" height="18.7" rx="1.3" fill="#68b35c" stroke="#46833d" stroke-width="0.8"/></svg>
<svg class="s" style="left:592px;top:738px;" width="326" height="20" viewBox="0 0 326 20"><rect x="0.50" y="0.5" width="5.4" height="18.7" rx="1.3" fill="#68b35c" stroke="#46833d" stroke-width="0.8"/><rect x="7.74" y="0.5" width="5.4" height="18.7" rx="1.3" fill="#68b35c" stroke="#46833d" stroke-width="0.8"/><rect x="14.97" y="0.5" width="5.4" height="18.7" rx="1.3" fill="#68b35c" stroke="#46833d" stroke-width="0.8"/><rect x="22.21" y="0.5" width="5.4" height="18.7" rx="1.3" fill="#68b35c" stroke="#46833d" stroke-width="0.8"/><rect x="29.44" y="0.5" width="5.4" height="18.7" rx="1.3" fill="#68b35c" stroke="#46833d" stroke-width="0.8"/><rect x="36.68" y="0.5" width="5.4" height="18.7" rx="1.3" fill="#68b35c" stroke="#46833d" stroke-width="0.8"/><rect x="43.91" y="0.5" width="5.4" height="18.7" rx="1.3" fill="#68b35c" stroke="#46833d" stroke-width="0.8"/><rect x="51.15" y="0.5" width="5.4" height="18.7" rx="1.3" fill="#68b35c" stroke="#46833d" stroke-width="0.8"/><rect x="58.38" y="0.5" width="5.4" height="18.7" rx="1.3" fill="#68b35c" stroke="#46833d" stroke-width="0.8"/><rect x="65.62" y="0.5" width="5.4" height="18.7" rx="1.3" fill="#68b35c" stroke="#46833d" stroke-width="0.8"/><rect x="72.85" y="0.5" width="5.4" height="18.7" rx="1.3" fill="#68b35c" stroke="#46833d" stroke-width="0.8"/><rect x="80.09" y="0.5" width="5.4" height="18.7" rx="1.3" fill="#68b35c" stroke="#46833d" stroke-width="0.8"/><rect x="87.32" y="0.5" width="5.4" height="18.7" rx="1.3" fill="#68b35c" stroke="#46833d" stroke-width="0.8"/><rect x="94.56" y="0.5" width="5.4" height="18.7" rx="1.3" fill="#68b35c" stroke="#46833d" stroke-width="0.8"/><rect x="101.79" y="0.5" width="5.4" height="18.7" rx="1.3" fill="#68b35c" stroke="#46833d" stroke-width="0.8"/><rect x="109.03" y="0.5" width="5.4" height="18.7" rx="1.3" fill="#68b35c" stroke="#46833d" stroke-width="0.8"/><rect x="116.26" y="0.5" width="5.4" height="18.7" rx="1.3" fill="#68b35c" stroke="#46833d" stroke-width="0.8"/><rect x="123.50" y="0.5" width="5.4" height="18.7" rx="1.3" fill="#68b35c" stroke="#46833d" stroke-width="0.8"/><rect x="130.73" y="0.5" width="5.4" height="18.7" rx="1.3" fill="#68b35c" stroke="#46833d" stroke-width="0.8"/><rect x="137.97" y="0.5" width="5.4" height="18.7" rx="1.3" fill="#68b35c" stroke="#46833d" stroke-width="0.8"/><rect x="145.20" y="0.5" width="5.4" height="18.7" rx="1.3" fill="#68b35c" stroke="#46833d" stroke-width="0.8"/><rect x="152.44" y="0.5" width="5.4" height="18.7" rx="1.3" fill="#68b35c" stroke="#46833d" stroke-width="0.8"/><rect x="159.67" y="0.5" width="5.4" height="18.7" rx="1.3" fill="#68b35c" stroke="#46833d" stroke-width="0.8"/><rect x="166.91" y="0.5" width="5.4" height="18.7" rx="1.3" fill="#68b35c" stroke="#46833d" stroke-width="0.8"/><rect x="174.14" y="0.5" width="5.4" height="18.7" rx="1.3" fill="#68b35c" stroke="#46833d" stroke-width="0.8"/><rect x="181.38" y="0.5" width="5.4" height="18.7" rx="1.3" fill="#68b35c" stroke="#46833d" stroke-width="0.8"/><rect x="188.61" y="0.5" width="5.4" height="18.7" rx="1.3" fill="#68b35c" stroke="#46833d" stroke-width="0.8"/><rect x="195.84" y="0.5" width="5.4" height="18.7" rx="1.3" fill="#68b35c" stroke="#46833d" stroke-width="0.8"/><rect x="203.08" y="0.5" width="5.4" height="18.7" rx="1.3" fill="#68b35c" stroke="#46833d" stroke-width="0.8"/><rect x="210.31" y="0.5" width="5.4" height="18.7" rx="1.3" fill="#68b35c" stroke="#46833d" stroke-width="0.8"/><rect x="217.55" y="0.5" width="5.4" height="18.7" rx="1.3" fill="#68b35c" stroke="#46833d" stroke-width="0.8"/><rect x="224.78" y="0.5" width="5.4" height="18.7" rx="1.3" fill="#68b35c" stroke="#46833d" stroke-width="0.8"/><rect x="232.02" y="0.5" width="5.4" height="18.7" rx="1.3" fill="#68b35c" stroke="#46833d" stroke-width="0.8"/><rect x="239.26" y="0.5" width="5.4" height="18.7" rx="1.3" fill="#68b35c" stroke="#46833d" stroke-width="0.8"/><rect x="246.49" y="0.5" width="5.4" height="18.7" rx="1.3" fill="#68b35c" stroke="#46833d" stroke-width="0.8"/><rect x="253.73" y="0.5" width="5.4" height="18.7" rx="1.3" fill="#68b35c" stroke="#46833d" stroke-width="0.8"/><rect x="260.96" y="0.5" width="5.4" height="18.7" rx="1.3" fill="#68b35c" stroke="#46833d" stroke-width="0.8"/><rect x="268.19" y="0.5" width="5.4" height="18.7" rx="1.3" fill="#68b35c" stroke="#46833d" stroke-width="0.8"/><rect x="275.43" y="0.5" width="5.4" height="18.7" rx="1.3" fill="#68b35c" stroke="#46833d" stroke-width="0.8"/><rect x="282.67" y="0.5" width="5.4" height="18.7" rx="1.3" fill="#68b35c" stroke="#46833d" stroke-width="0.8"/><rect x="289.90" y="0.5" width="5.4" height="18.7" rx="1.3" fill="#68b35c" stroke="#46833d" stroke-width="0.8"/><rect x="297.13" y="0.5" width="5.4" height="18.7" rx="1.3" fill="#68b35c" stroke="#46833d" stroke-width="0.8"/><rect x="304.37" y="0.5" width="5.4" height="18.7" rx="1.3" fill="#68b35c" stroke="#46833d" stroke-width="0.8"/><rect x="311.61" y="0.5" width="5.4" height="18.7" rx="1.3" fill="#68b35c" stroke="#46833d" stroke-width="0.8"/><rect x="318.84" y="0.5" width="5.4" height="18.7" rx="1.3" fill="#68b35c" stroke="#46833d" stroke-width="0.8"/></svg>
<svg class="s" style="left:592px;top:771px;" width="326" height="20" viewBox="0 0 326 20"><rect x="0.50" y="0.5" width="5.4" height="18.7" rx="1.3" fill="#68b35c" stroke="#46833d" stroke-width="0.8"/><rect x="7.74" y="0.5" width="5.4" height="18.7" rx="1.3" fill="#68b35c" stroke="#46833d" stroke-width="0.8"/><rect x="14.97" y="0.5" width="5.4" height="18.7" rx="1.3" fill="#68b35c" stroke="#46833d" stroke-width="0.8"/><rect x="22.21" y="0.5" width="5.4" height="18.7" rx="1.3" fill="#68b35c" stroke="#46833d" stroke-width="0.8"/><rect x="29.44" y="0.5" width="5.4" height="18.7" rx="1.3" fill="#68b35c" stroke="#46833d" stroke-width="0.8"/><rect x="36.68" y="0.5" width="5.4" height="18.7" rx="1.3" fill="#68b35c" stroke="#46833d" stroke-width="0.8"/><rect x="43.91" y="0.5" width="5.4" height="18.7" rx="1.3" fill="#68b35c" stroke="#46833d" stroke-width="0.8"/><rect x="51.15" y="0.5" width="5.4" height="18.7" rx="1.3" fill="#68b35c" stroke="#46833d" stroke-width="0.8"/><rect x="58.38" y="0.5" width="5.4" height="18.7" rx="1.3" fill="#68b35c" stroke="#46833d" stroke-width="0.8"/><rect x="65.62" y="0.5" width="5.4" height="18.7" rx="1.3" fill="#68b35c" stroke="#46833d" stroke-width="0.8"/><rect x="72.85" y="0.5" width="5.4" height="18.7" rx="1.3" fill="#68b35c" stroke="#46833d" stroke-width="0.8"/><rect x="80.09" y="0.5" width="5.4" height="18.7" rx="1.3" fill="#68b35c" stroke="#46833d" stroke-width="0.8"/><rect x="87.32" y="0.5" width="5.4" height="18.7" rx="1.3" fill="#68b35c" stroke="#46833d" stroke-width="0.8"/><rect x="94.56" y="0.5" width="5.4" height="18.7" rx="1.3" fill="#68b35c" stroke="#46833d" stroke-width="0.8"/><rect x="101.79" y="0.5" width="5.4" height="18.7" rx="1.3" fill="#68b35c" stroke="#46833d" stroke-width="0.8"/><rect x="109.03" y="0.5" width="5.4" height="18.7" rx="1.3" fill="#68b35c" stroke="#46833d" stroke-width="0.8"/><rect x="116.26" y="0.5" width="5.4" height="18.7" rx="1.3" fill="#68b35c" stroke="#46833d" stroke-width="0.8"/><rect x="123.50" y="0.5" width="5.4" height="18.7" rx="1.3" fill="#68b35c" stroke="#46833d" stroke-width="0.8"/><rect x="130.73" y="0.5" width="5.4" height="18.7" rx="1.3" fill="#68b35c" stroke="#46833d" stroke-width="0.8"/><rect x="137.97" y="0.5" width="5.4" height="18.7" rx="1.3" fill="#68b35c" stroke="#46833d" stroke-width="0.8"/><rect x="145.20" y="0.5" width="5.4" height="18.7" rx="1.3" fill="#68b35c" stroke="#46833d" stroke-width="0.8"/><rect x="152.44" y="0.5" width="5.4" height="18.7" rx="1.3" fill="#68b35c" stroke="#46833d" stroke-width="0.8"/><rect x="159.67" y="0.5" width="5.4" height="18.7" rx="1.3" fill="#68b35c" stroke="#46833d" stroke-width="0.8"/><rect x="166.91" y="0.5" width="5.4" height="18.7" rx="1.3" fill="#68b35c" stroke="#46833d" stroke-width="0.8"/><rect x="174.14" y="0.5" width="5.4" height="18.7" rx="1.3" fill="#68b35c" stroke="#46833d" stroke-width="0.8"/><rect x="181.38" y="0.5" width="5.4" height="18.7" rx="1.3" fill="#68b35c" stroke="#46833d" stroke-width="0.8"/><rect x="188.61" y="0.5" width="5.4" height="18.7" rx="1.3" fill="#68b35c" stroke="#46833d" stroke-width="0.8"/><rect x="195.84" y="0.5" width="5.4" height="18.7" rx="1.3" fill="#68b35c" stroke="#46833d" stroke-width="0.8"/><rect x="203.08" y="0.5" width="5.4" height="18.7" rx="1.3" fill="#68b35c" stroke="#46833d" stroke-width="0.8"/><rect x="210.31" y="0.5" width="5.4" height="18.7" rx="1.3" fill="#68b35c" stroke="#46833d" stroke-width="0.8"/><rect x="217.55" y="0.5" width="5.4" height="18.7" rx="1.3" fill="#68b35c" stroke="#46833d" stroke-width="0.8"/><rect x="224.78" y="0.5" width="5.4" height="18.7" rx="1.3" fill="#68b35c" stroke="#46833d" stroke-width="0.8"/><rect x="232.02" y="0.5" width="5.4" height="18.7" rx="1.3" fill="#68b35c" stroke="#46833d" stroke-width="0.8"/><rect x="239.26" y="0.5" width="5.4" height="18.7" rx="1.3" fill="#68b35c" stroke="#46833d" stroke-width="0.8"/><rect x="246.49" y="0.5" width="5.4" height="18.7" rx="1.3" fill="#68b35c" stroke="#46833d" stroke-width="0.8"/><rect x="253.73" y="0.5" width="5.4" height="18.7" rx="1.3" fill="#68b35c" stroke="#46833d" stroke-width="0.8"/><rect x="260.96" y="0.5" width="5.4" height="18.7" rx="1.3" fill="#68b35c" stroke="#46833d" stroke-width="0.8"/><rect x="268.19" y="0.5" width="5.4" height="18.7" rx="1.3" fill="#68b35c" stroke="#46833d" stroke-width="0.8"/><rect x="275.43" y="0.5" width="5.4" height="18.7" rx="1.3" fill="#68b35c" stroke="#46833d" stroke-width="0.8"/><rect x="282.67" y="0.5" width="5.4" height="18.7" rx="1.3" fill="#68b35c" stroke="#46833d" stroke-width="0.8"/><rect x="289.90" y="0.5" width="5.4" height="18.7" rx="1.3" fill="#68b35c" stroke="#46833d" stroke-width="0.8"/><rect x="297.13" y="0.5" width="5.4" height="18.7" rx="1.3" fill="#68b35c" stroke="#46833d" stroke-width="0.8"/><rect x="304.37" y="0.5" width="5.4" height="18.7" rx="1.3" fill="#68b35c" stroke="#46833d" stroke-width="0.8"/><rect x="311.61" y="0.5" width="5.4" height="18.7" rx="1.3" fill="#68b35c" stroke="#46833d" stroke-width="0.8"/><rect x="318.84" y="0.5" width="5.4" height="18.7" rx="1.3" fill="#68b35c" stroke="#46833d" stroke-width="0.8"/></svg>
<svg class="s" style="left:592px;top:803px;" width="326" height="20" viewBox="0 0 326 20"><rect x="0.50" y="0.5" width="5.4" height="18.7" rx="1.3" fill="#68b35c" stroke="#46833d" stroke-width="0.8"/><rect x="7.74" y="0.5" width="5.4" height="18.7" rx="1.3" fill="#68b35c" stroke="#46833d" stroke-width="0.8"/><rect x="14.97" y="0.5" width="5.4" height="18.7" rx="1.3" fill="#68b35c" stroke="#46833d" stroke-width="0.8"/><rect x="22.21" y="0.5" width="5.4" height="18.7" rx="1.3" fill="#68b35c" stroke="#46833d" stroke-width="0.8"/><rect x="29.44" y="0.5" width="5.4" height="18.7" rx="1.3" fill="#2b3c2c" stroke="#263426" stroke-width="0.8"/><rect x="36.68" y="0.5" width="5.4" height="18.7" rx="1.3" fill="#2b3c2c" stroke="#263426" stroke-width="0.8"/><rect x="43.91" y="0.5" width="5.4" height="18.7" rx="1.3" fill="#2b3c2c" stroke="#263426" stroke-width="0.8"/><rect x="51.15" y="0.5" width="5.4" height="18.7" rx="1.3" fill="#2b3c2c" stroke="#263426" stroke-width="0.8"/><rect x="58.38" y="0.5" width="5.4" height="18.7" rx="1.3" fill="#2b3c2c" stroke="#263426" stroke-width="0.8"/><rect x="65.62" y="0.5" width="5.4" height="18.7" rx="1.3" fill="#2b3c2c" stroke="#263426" stroke-width="0.8"/><rect x="72.85" y="0.5" width="5.4" height="18.7" rx="1.3" fill="#2b3c2c" stroke="#263426" stroke-width="0.8"/><rect x="80.09" y="0.5" width="5.4" height="18.7" rx="1.3" fill="#2b3c2c" stroke="#263426" stroke-width="0.8"/><rect x="87.32" y="0.5" width="5.4" height="18.7" rx="1.3" fill="#2b3c2c" stroke="#263426" stroke-width="0.8"/><rect x="94.56" y="0.5" width="5.4" height="18.7" rx="1.3" fill="#2b3c2c" stroke="#263426" stroke-width="0.8"/><rect x="101.79" y="0.5" width="5.4" height="18.7" rx="1.3" fill="#2b3c2c" stroke="#263426" stroke-width="0.8"/><rect x="109.03" y="0.5" width="5.4" height="18.7" rx="1.3" fill="#2b3c2c" stroke="#263426" stroke-width="0.8"/><rect x="116.26" y="0.5" width="5.4" height="18.7" rx="1.3" fill="#2b3c2c" stroke="#263426" stroke-width="0.8"/><rect x="123.50" y="0.5" width="5.4" height="18.7" rx="1.3" fill="#2b3c2c" stroke="#263426" stroke-width="0.8"/><rect x="130.73" y="0.5" width="5.4" height="18.7" rx="1.3" fill="#2b3c2c" stroke="#263426" stroke-width="0.8"/><rect x="137.97" y="0.5" width="5.4" height="18.7" rx="1.3" fill="#2b3c2c" stroke="#263426" stroke-width="0.8"/><rect x="145.20" y="0.5" width="5.4" height="18.7" rx="1.3" fill="#2b3c2c" stroke="#263426" stroke-width="0.8"/><rect x="152.44" y="0.5" width="5.4" height="18.7" rx="1.3" fill="#2b3c2c" stroke="#263426" stroke-width="0.8"/><rect x="159.67" y="0.5" width="5.4" height="18.7" rx="1.3" fill="#2b3c2c" stroke="#263426" stroke-width="0.8"/><rect x="166.91" y="0.5" width="5.4" height="18.7" rx="1.3" fill="#2b3c2c" stroke="#263426" stroke-width="0.8"/><rect x="174.14" y="0.5" width="5.4" height="18.7" rx="1.3" fill="#2b3c2c" stroke="#263426" stroke-width="0.8"/><rect x="181.38" y="0.5" width="5.4" height="18.7" rx="1.3" fill="#2b3c2c" stroke="#263426" stroke-width="0.8"/><rect x="188.61" y="0.5" width="5.4" height="18.7" rx="1.3" fill="#2b3c2c" stroke="#263426" stroke-width="0.8"/><rect x="195.84" y="0.5" width="5.4" height="18.7" rx="1.3" fill="#2b3c2c" stroke="#263426" stroke-width="0.8"/><rect x="203.08" y="0.5" width="5.4" height="18.7" rx="1.3" fill="#2b3c2c" stroke="#263426" stroke-width="0.8"/><rect x="210.31" y="0.5" width="5.4" height="18.7" rx="1.3" fill="#2b3c2c" stroke="#263426" stroke-width="0.8"/><rect x="217.55" y="0.5" width="5.4" height="18.7" rx="1.3" fill="#2b3c2c" stroke="#263426" stroke-width="0.8"/><rect x="224.78" y="0.5" width="5.4" height="18.7" rx="1.3" fill="#2b3c2c" stroke="#263426" stroke-width="0.8"/><rect x="232.02" y="0.5" width="5.4" height="18.7" rx="1.3" fill="#2b3c2c" stroke="#263426" stroke-width="0.8"/><rect x="239.26" y="0.5" width="5.4" height="18.7" rx="1.3" fill="#2b3c2c" stroke="#263426" stroke-width="0.8"/><rect x="246.49" y="0.5" width="5.4" height="18.7" rx="1.3" fill="#2b3c2c" stroke="#263426" stroke-width="0.8"/><rect x="253.73" y="0.5" width="5.4" height="18.7" rx="1.3" fill="#2b3c2c" stroke="#263426" stroke-width="0.8"/><rect x="260.96" y="0.5" width="5.4" height="18.7" rx="1.3" fill="#2b3c2c" stroke="#263426" stroke-width="0.8"/><rect x="268.19" y="0.5" width="5.4" height="18.7" rx="1.3" fill="#2b3c2c" stroke="#263426" stroke-width="0.8"/><rect x="275.43" y="0.5" width="5.4" height="18.7" rx="1.3" fill="#2b3c2c" stroke="#263426" stroke-width="0.8"/><rect x="282.67" y="0.5" width="5.4" height="18.7" rx="1.3" fill="#2b3c2c" stroke="#263426" stroke-width="0.8"/><rect x="289.90" y="0.5" width="5.4" height="18.7" rx="1.3" fill="#2b3c2c" stroke="#263426" stroke-width="0.8"/><rect x="297.13" y="0.5" width="5.4" height="18.7" rx="1.3" fill="#2b3c2c" stroke="#263426" stroke-width="0.8"/><rect x="304.37" y="0.5" width="5.4" height="18.7" rx="1.3" fill="#2b3c2c" stroke="#263426" stroke-width="0.8"/><rect x="311.61" y="0.5" width="5.4" height="18.7" rx="1.3" fill="#2b3c2c" stroke="#263426" stroke-width="0.8"/><rect x="318.84" y="0.5" width="5.4" height="18.7" rx="1.3" fill="#2b3c2c" stroke="#263426" stroke-width="0.8"/></svg>
<svg class="s" style="left:592px;top:836px;" width="326" height="20" viewBox="0 0 326 20"><rect x="0.50" y="0.5" width="5.4" height="18.7" rx="1.3" fill="#68b35c" stroke="#46833d" stroke-width="0.8"/><rect x="7.74" y="0.5" width="5.4" height="18.7" rx="1.3" fill="#68b35c" stroke="#46833d" stroke-width="0.8"/><rect x="14.97" y="0.5" width="5.4" height="18.7" rx="1.3" fill="#68b35c" stroke="#46833d" stroke-width="0.8"/><rect x="22.21" y="0.5" width="5.4" height="18.7" rx="1.3" fill="#68b35c" stroke="#46833d" stroke-width="0.8"/><rect x="29.44" y="0.5" width="5.4" height="18.7" rx="1.3" fill="#2b3c2c" stroke="#263426" stroke-width="0.8"/><rect x="36.68" y="0.5" width="5.4" height="18.7" rx="1.3" fill="#2b3c2c" stroke="#263426" stroke-width="0.8"/><rect x="43.91" y="0.5" width="5.4" height="18.7" rx="1.3" fill="#2b3c2c" stroke="#263426" stroke-width="0.8"/><rect x="51.15" y="0.5" width="5.4" height="18.7" rx="1.3" fill="#2b3c2c" stroke="#263426" stroke-width="0.8"/><rect x="58.38" y="0.5" width="5.4" height="18.7" rx="1.3" fill="#2b3c2c" stroke="#263426" stroke-width="0.8"/><rect x="65.62" y="0.5" width="5.4" height="18.7" rx="1.3" fill="#2b3c2c" stroke="#263426" stroke-width="0.8"/><rect x="72.85" y="0.5" width="5.4" height="18.7" rx="1.3" fill="#2b3c2c" stroke="#263426" stroke-width="0.8"/><rect x="80.09" y="0.5" width="5.4" height="18.7" rx="1.3" fill="#2b3c2c" stroke="#263426" stroke-width="0.8"/><rect x="87.32" y="0.5" width="5.4" height="18.7" rx="1.3" fill="#2b3c2c" stroke="#263426" stroke-width="0.8"/><rect x="94.56" y="0.5" width="5.4" height="18.7" rx="1.3" fill="#2b3c2c" stroke="#263426" stroke-width="0.8"/><rect x="101.79" y="0.5" width="5.4" height="18.7" rx="1.3" fill="#2b3c2c" stroke="#263426" stroke-width="0.8"/><rect x="109.03" y="0.5" width="5.4" height="18.7" rx="1.3" fill="#2b3c2c" stroke="#263426" stroke-width="0.8"/><rect x="116.26" y="0.5" width="5.4" height="18.7" rx="1.3" fill="#2b3c2c" stroke="#263426" stroke-width="0.8"/><rect x="123.50" y="0.5" width="5.4" height="18.7" rx="1.3" fill="#2b3c2c" stroke="#263426" stroke-width="0.8"/><rect x="130.73" y="0.5" width="5.4" height="18.7" rx="1.3" fill="#2b3c2c" stroke="#263426" stroke-width="0.8"/><rect x="137.97" y="0.5" width="5.4" height="18.7" rx="1.3" fill="#2b3c2c" stroke="#263426" stroke-width="0.8"/><rect x="145.20" y="0.5" width="5.4" height="18.7" rx="1.3" fill="#2b3c2c" stroke="#263426" stroke-width="0.8"/><rect x="152.44" y="0.5" width="5.4" height="18.7" rx="1.3" fill="#2b3c2c" stroke="#263426" stroke-width="0.8"/><rect x="159.67" y="0.5" width="5.4" height="18.7" rx="1.3" fill="#2b3c2c" stroke="#263426" stroke-width="0.8"/><rect x="166.91" y="0.5" width="5.4" height="18.7" rx="1.3" fill="#2b3c2c" stroke="#263426" stroke-width="0.8"/><rect x="174.14" y="0.5" width="5.4" height="18.7" rx="1.3" fill="#2b3c2c" stroke="#263426" stroke-width="0.8"/><rect x="181.38" y="0.5" width="5.4" height="18.7" rx="1.3" fill="#2b3c2c" stroke="#263426" stroke-width="0.8"/><rect x="188.61" y="0.5" width="5.4" height="18.7" rx="1.3" fill="#2b3c2c" stroke="#263426" stroke-width="0.8"/><rect x="195.84" y="0.5" width="5.4" height="18.7" rx="1.3" fill="#2b3c2c" stroke="#263426" stroke-width="0.8"/><rect x="203.08" y="0.5" width="5.4" height="18.7" rx="1.3" fill="#2b3c2c" stroke="#263426" stroke-width="0.8"/><rect x="210.31" y="0.5" width="5.4" height="18.7" rx="1.3" fill="#2b3c2c" stroke="#263426" stroke-width="0.8"/><rect x="217.55" y="0.5" width="5.4" height="18.7" rx="1.3" fill="#2b3c2c" stroke="#263426" stroke-width="0.8"/><rect x="224.78" y="0.5" width="5.4" height="18.7" rx="1.3" fill="#2b3c2c" stroke="#263426" stroke-width="0.8"/><rect x="232.02" y="0.5" width="5.4" height="18.7" rx="1.3" fill="#2b3c2c" stroke="#263426" stroke-width="0.8"/><rect x="239.26" y="0.5" width="5.4" height="18.7" rx="1.3" fill="#2b3c2c" stroke="#263426" stroke-width="0.8"/><rect x="246.49" y="0.5" width="5.4" height="18.7" rx="1.3" fill="#2b3c2c" stroke="#263426" stroke-width="0.8"/><rect x="253.73" y="0.5" width="5.4" height="18.7" rx="1.3" fill="#2b3c2c" stroke="#263426" stroke-width="0.8"/><rect x="260.96" y="0.5" width="5.4" height="18.7" rx="1.3" fill="#2b3c2c" stroke="#263426" stroke-width="0.8"/><rect x="268.19" y="0.5" width="5.4" height="18.7" rx="1.3" fill="#2b3c2c" stroke="#263426" stroke-width="0.8"/><rect x="275.43" y="0.5" width="5.4" height="18.7" rx="1.3" fill="#2b3c2c" stroke="#263426" stroke-width="0.8"/><rect x="282.67" y="0.5" width="5.4" height="18.7" rx="1.3" fill="#2b3c2c" stroke="#263426" stroke-width="0.8"/><rect x="289.90" y="0.5" width="5.4" height="18.7" rx="1.3" fill="#2b3c2c" stroke="#263426" stroke-width="0.8"/><rect x="297.13" y="0.5" width="5.4" height="18.7" rx="1.3" fill="#2b3c2c" stroke="#263426" stroke-width="0.8"/><rect x="304.37" y="0.5" width="5.4" height="18.7" rx="1.3" fill="#2b3c2c" stroke="#263426" stroke-width="0.8"/><rect x="311.61" y="0.5" width="5.4" height="18.7" rx="1.3" fill="#2b3c2c" stroke="#263426" stroke-width="0.8"/><rect x="318.84" y="0.5" width="5.4" height="18.7" rx="1.3" fill="#2b3c2c" stroke="#263426" stroke-width="0.8"/></svg>
<svg class="s" style="left:0px;top:0px;pointer-events:none;" width="1020" height="1190" viewBox="0 0 1020 1190"><rect x="81" y="1110.0" width="917.5" height="1" fill="#2e3136"/><rect x="81" y="1076.5" width="917.5" height="1" fill="#2e3136"/><rect x="81" y="1042.8" width="917.5" height="1" fill="#2e3136"/><rect x="81" y="1009.5" width="917.5" height="1" fill="#2e3136"/><rect x="81" y="976.1" width="917.5" height="1" fill="#2e3136"/><rect x="81" y="942.3" width="917.5" height="1" fill="#2e3136"/><rect x="198.9" y="929.8" width="1" height="182" fill="#2e3136"/><rect x="351.5" y="929.8" width="1" height="182" fill="#2e3136"/><rect x="504.0" y="929.8" width="1" height="182" fill="#2e3136"/><rect x="657.2" y="929.8" width="1" height="182" fill="#2e3136"/><rect x="810.1" y="929.8" width="1" height="182" fill="#2e3136"/><rect x="963.8" y="929.8" width="1" height="182" fill="#2e3136"/><polyline points="137.6,1110.5 152.9,1110.5 168.2,1110.5 183.5,1110.5 198.8,1110.5 214.1,1110.5 229.4,1110.5 244.7,1110.5 260.0,1110.5 275.3,1110.5 290.6,1110.5 305.9,1110.5 321.2,1110.5 336.5,1110.5 351.8,1110.5 367.1,1110.5 382.4,1110.5 397.7,1110.5 413.0,1110.5 428.3,1110.5 443.6,1110.5 458.9,1110.5 474.2,1110.5 489.5,1110.5 504.8,1110.5 520.1,1110.5 535.4,1110.5 550.7,1110.5 566.0,1110.5 581.3,1110.5 596.6,1110.5 611.9,1110.5 627.2,1110.5 642.5,1110.5 657.8,1110.5 673.1,1110.5 688.4,1110.5 703.7,1110.5 719.0,1110.5 734.3,1110.5 749.6,1110.5 764.9,1110.5 780.2,1110.5 795.5,1110.5 810.8,1110.5 826.1,1110.5 841.4,1110.5 856.7,1110.5 872.0,1110.5 887.3,1110.5 902.6,1110.5 917.9,1110.5 933.2,1110.5 948.5,1110.5 963.8,1110.5 979.1,1110.5 994.4,1110.5" fill="none" stroke="#37872d" stroke-width="1.1"/><polyline points="137.6,1110.5 152.9,1071.9 168.2,1110.5 183.5,1110.5 198.8,1110.5 214.1,1110.5 229.4,1110.5 244.7,1110.5 260.0,1110.5 275.3,1110.5 290.6,1110.5 305.9,1110.5 321.2,1110.5 336.5,1110.5 351.8,1110.5 367.1,1110.5 382.4,1110.5 397.7,1110.5 413.0,1110.5 428.3,1110.5 443.6,1110.5 458.9,1071.9 474.2,1110.5 489.5,1110.5 504.8,1110.5 520.1,1110.5 535.4,1110.5 550.7,1110.5 566.0,1110.5 581.3,1110.5 596.6,1110.5 611.9,1110.5 627.2,1110.5 642.5,1110.5 657.8,1110.5 673.1,1110.5 688.4,1110.5 703.7,1110.5 719.0,1110.5 734.3,1110.5 749.6,1110.5 764.9,1072.7 780.2,1110.5 795.5,1110.5 810.8,1110.5 826.1,1110.5 841.4,1110.5 856.7,1110.5 872.0,1110.5 887.3,1110.5 902.6,1110.5 917.9,1110.5 933.2,1110.5 948.5,1110.5 963.8,1110.5 979.1,1110.5 994.4,1110.5" fill="none" stroke="#8ab8ff" stroke-width="1.1"/><polyline points="137.6,1110.5 152.9,1032.5 168.2,1110.5 183.5,1110.5 198.8,1110.5 214.1,1110.5 229.4,1110.5 244.7,1110.5 260.0,1110.5 275.3,1110.5 290.6,1110.5 305.9,1110.5 321.2,1110.5 336.5,1110.5 351.8,1110.5 367.1,1110.5 382.4,1110.5 397.7,1110.5 413.0,1110.5 428.3,1110.5 443.6,1110.5 458.9,1032.1 474.2,1110.5 489.5,1110.5 504.8,1110.5 520.1,1110.5 535.4,1110.5 550.7,1110.5 566.0,1110.5 581.3,1110.5 596.6,1110.5 611.9,1110.5 627.2,1110.5 642.5,1110.5 657.8,1110.5 673.1,1110.5 688.4,1110.5 703.7,1110.5 719.0,1110.5 734.3,1110.5 749.6,1110.5 764.9,1110.5 780.2,1110.5 795.5,1110.5 810.8,1110.5 826.1,1110.5 841.4,1110.5 856.7,1110.5 872.0,1110.5 887.3,1110.5 902.6,1110.5 917.9,1110.5 933.2,1110.5 948.5,1110.5 963.8,1110.5 979.1,1110.5 994.4,1110.5" fill="none" stroke="#b877d9" stroke-width="1.1"/><polyline points="137.6,1110.5 152.9,992.3 168.2,1110.5 183.5,1110.5 198.8,1110.5 214.1,1110.5 229.4,1110.5 244.7,1110.5 260.0,1110.5 275.3,1110.5 290.6,1110.5 305.9,1110.5 321.2,1110.5 336.5,1110.5 351.8,1110.5 367.1,1110.5 382.4,1110.5 397.7,1110.5 413.0,1110.5 428.3,1110.5 443.6,1110.5 458.9,991.5 474.2,1110.5 489.5,1110.5 504.8,1110.5 520.1,1110.5 535.4,1110.5 550.7,1110.5 566.0,1110.5 581.3,1110.5 596.6,1110.5 611.9,1110.5 627.2,1110.5 642.5,1110.5 657.8,1110.5 673.1,1110.5 688.4,1110.5 703.7,1110.5 719.0,1110.5 734.3,1110.5 749.6,1110.5 764.9,1032.5 780.2,1110.5 795.5,1110.5 810.8,1110.5 826.1,1110.5 841.4,1110.5 856.7,1110.5 872.0,1110.5 887.3,1110.5 902.6,1110.5 917.9,1110.5 933.2,1110.5 948.5,1110.5 963.8,1110.5 979.1,1110.5 994.4,1110.5" fill="none" stroke="#2b64ad" stroke-width="1.1"/><polyline points="81,1109.3 91.7,1107.3 107.0,1109.0 122.3,1108.1 137.6,1110.5 152.9,953.7 168.2,1110.5 183.5,1110.5 198.8,1110.5 214.1,1110.5 229.4,1110.5 244.7,1110.5 260.0,1110.5 275.3,1110.5 290.6,1110.5 305.9,1110.5 321.2,1110.5 336.5,1110.5 351.8,1110.5 367.1,1110.5 382.4,1110.5 397.7,1110.5 413.0,1110.5 428.3,1110.5 443.6,1110.5 458.9,952.9 474.2,1110.5 489.5,1110.5 504.8,1110.5 520.1,1110.5 535.4,1110.5 550.7,1110.5 566.0,1110.5 581.3,1110.5 596.6,1110.5 611.9,1110.5 627.2,1110.5 642.5,1110.5 657.8,1110.5 673.1,1110.5 688.4,1110.5 703.7,1110.5 719.0,1110.5 734.3,1110.5 749.6,1110.5 764.9,992.3 780.2,1110.5 795.5,1110.5 810.8,1110.5 826.1,1110.5 841.4,1110.5 856.7,1110.5 872.0,1110.5 887.3,1110.5 902.6,1110.5 917.9,1110.5 933.2,1110.5 948.5,1110.5 963.8,1110.5 979.1,1110.5 994.4,1110.5" fill="none" stroke="#6d5a96" stroke-width="1.1"/><path d="M137.6 1110.5 H168.2" stroke="#56a64b" stroke-width="1.6"/><path d="M443.6 1110.5 H474.2" stroke="#56a64b" stroke-width="1.6"/><path d="M749.6 1110.5 H780.2" stroke="#56a64b" stroke-width="1.6"/><circle cx="152.9" cy="1071.9" r="2.3" fill="#8ab8ff"/><circle cx="458.9" cy="1071.9" r="2.3" fill="#8ab8ff"/><circle cx="764.9" cy="1072.7" r="2.3" fill="#8ab8ff"/><circle cx="152.9" cy="1032.5" r="2.3" fill="#b877d9"/><circle cx="458.9" cy="1032.1" r="2.3" fill="#b877d9"/><circle cx="152.9" cy="992.3" r="2.3" fill="#2b64ad"/><circle cx="458.9" cy="991.5" r="2.3" fill="#2b64ad"/><circle cx="764.9" cy="1032.5" r="2.3" fill="#2b64ad"/><circle cx="91.7" cy="1107.3" r="2.3" fill="#6d5a96"/><circle cx="107.0" cy="1109.0" r="2.3" fill="#6d5a96"/><circle cx="122.3" cy="1108.1" r="2.3" fill="#6d5a96"/><circle cx="152.9" cy="953.7" r="2.3" fill="#6d5a96"/><circle cx="458.9" cy="952.9" r="2.3" fill="#6d5a96"/><circle cx="764.9" cy="992.3" r="2.3" fill="#6d5a96"/><circle cx="137.6" cy="1110.5" r="2.2" fill="#5e4f80"/><circle cx="168.2" cy="1110.5" r="2.2" fill="#5e4f80"/><circle cx="183.5" cy="1110.5" r="2.2" fill="#5e4f80"/><circle cx="198.8" cy="1110.5" r="2.2" fill="#5e4f80"/><circle cx="214.1" cy="1110.5" r="2.2" fill="#5e4f80"/><circle cx="229.4" cy="1110.5" r="2.2" fill="#5e4f80"/><circle cx="244.7" cy="1110.5" r="2.2" fill="#5e4f80"/><circle cx="260.0" cy="1110.5" r="2.2" fill="#5e4f80"/><circle cx="275.3" cy="1110.5" r="2.2" fill="#5e4f80"/><circle cx="290.6" cy="1110.5" r="2.2" fill="#5e4f80"/><circle cx="305.9" cy="1110.5" r="2.2" fill="#5e4f80"/><circle cx="321.2" cy="1110.5" r="2.2" fill="#5e4f80"/><circle cx="336.5" cy="1110.5" r="2.2" fill="#5e4f80"/><circle cx="351.8" cy="1110.5" r="2.2" fill="#5e4f80"/><circle cx="367.1" cy="1110.5" r="2.2" fill="#5e4f80"/><circle cx="382.4" cy="1110.5" r="2.2" fill="#5e4f80"/><circle cx="397.7" cy="1110.5" r="2.2" fill="#5e4f80"/><circle cx="413.0" cy="1110.5" r="2.2" fill="#5e4f80"/><circle cx="428.3" cy="1110.5" r="2.2" fill="#5e4f80"/><circle cx="443.6" cy="1110.5" r="2.2" fill="#5e4f80"/><circle cx="474.2" cy="1110.5" r="2.2" fill="#5e4f80"/><circle cx="489.5" cy="1110.5" r="2.2" fill="#5e4f80"/><circle cx="504.8" cy="1110.5" r="2.2" fill="#5e4f80"/><circle cx="520.1" cy="1110.5" r="2.2" fill="#5e4f80"/><circle cx="535.4" cy="1110.5" r="2.2" fill="#5e4f80"/><circle cx="550.7" cy="1110.5" r="2.2" fill="#5e4f80"/><circle cx="566.0" cy="1110.5" r="2.2" fill="#5e4f80"/><circle cx="581.3" cy="1110.5" r="2.2" fill="#5e4f80"/><circle cx="596.6" cy="1110.5" r="2.2" fill="#5e4f80"/><circle cx="611.9" cy="1110.5" r="2.2" fill="#5e4f80"/><circle cx="627.2" cy="1110.5" r="2.2" fill="#5e4f80"/><circle cx="642.5" cy="1110.5" r="2.2" fill="#5e4f80"/><circle cx="657.8" cy="1110.5" r="2.2" fill="#5e4f80"/><circle cx="673.1" cy="1110.5" r="2.2" fill="#5e4f80"/><circle cx="688.4" cy="1110.5" r="2.2" fill="#5e4f80"/><circle cx="703.7" cy="1110.5" r="2.2" fill="#5e4f80"/><circle cx="719.0" cy="1110.5" r="2.2" fill="#5e4f80"/><circle cx="734.3" cy="1110.5" r="2.2" fill="#5e4f80"/><circle cx="749.6" cy="1110.5" r="2.2" fill="#5e4f80"/><circle cx="780.2" cy="1110.5" r="2.2" fill="#5e4f80"/><circle cx="795.5" cy="1110.5" r="2.2" fill="#5e4f80"/><circle cx="810.8" cy="1110.5" r="2.2" fill="#5e4f80"/><circle cx="826.1" cy="1110.5" r="2.2" fill="#5e4f80"/><circle cx="841.4" cy="1110.5" r="2.2" fill="#5e4f80"/><circle cx="856.7" cy="1110.5" r="2.2" fill="#5e4f80"/><circle cx="872.0" cy="1110.5" r="2.2" fill="#5e4f80"/><circle cx="887.3" cy="1110.5" r="2.2" fill="#5e4f80"/><circle cx="902.6" cy="1110.5" r="2.2" fill="#5e4f80"/><circle cx="917.9" cy="1110.5" r="2.2" fill="#5e4f80"/><circle cx="933.2" cy="1110.5" r="2.2" fill="#5e4f80"/><circle cx="948.5" cy="1110.5" r="2.2" fill="#5e4f80"/><circle cx="963.8" cy="1110.5" r="2.2" fill="#5e4f80"/><circle cx="979.1" cy="1110.5" r="2.2" fill="#5e4f80"/><circle cx="994.4" cy="1110.5" r="2.2" fill="#5e4f80"/><circle cx="152.9" cy="1110.5" r="2.4" fill="#73bf69"/><circle cx="458.9" cy="1110.5" r="2.4" fill="#73bf69"/><circle cx="764.9" cy="1110.5" r="2.4" fill="#73bf69"/></svg>
<div class="t" style="right:1963.7px;top:1104.6px;font-size:12px;color:#ccccdc;font-weight:400;text-align:right;">0 ms</div>
<div class="t" style="right:1963.7px;top:1071.1px;font-size:12px;color:#ccccdc;font-weight:400;text-align:right;">8.33 mins</div>
<div class="t" style="right:1963.7px;top:1037.5px;font-size:12px;color:#ccccdc;font-weight:400;text-align:right;">16.7 mins</div>
<div class="t" style="right:1963.7px;top:1004.1px;font-size:12px;color:#ccccdc;font-weight:400;text-align:right;">25 mins</div>
<div class="t" style="right:1963.7px;top:970.7px;font-size:12px;color:#ccccdc;font-weight:400;text-align:right;">33.3 mins</div>
<div class="t" style="right:1963.7px;top:936.9px;font-size:12px;color:#ccccdc;font-weight:400;text-align:right;">41.7 mins</div>
<div class="t" style="left:169.4px;width:60px;top:1118.1px;font-size:12px;color:#ccccdc;font-weight:400;text-align:center;">10:50</div>
<div class="t" style="left:322.0px;width:60px;top:1118.1px;font-size:12px;color:#ccccdc;font-weight:400;text-align:center;">10:55</div>
<div class="t" style="left:474.5px;width:60px;top:1118.1px;font-size:12px;color:#ccccdc;font-weight:400;text-align:center;">11:00</div>
<div class="t" style="left:627.7px;width:60px;top:1118.1px;font-size:12px;color:#ccccdc;font-weight:400;text-align:center;">11:05</div>
<div class="t" style="left:780.6px;width:60px;top:1118.1px;font-size:12px;color:#ccccdc;font-weight:400;text-align:center;">11:10</div>
<div class="t" style="left:934.3px;width:60px;top:1118.1px;font-size:12px;color:#ccccdc;font-weight:400;text-align:center;">11:15</div>
<div class="b" style="left:25.7px;top:1143.9px;width:12.8px;height:4.0px;background:#73bf69;border-radius:2px;"></div>
<div class="t" style="left:44.7px;top:1139.8px;font-size:12px;color:#ccccdc;font-weight:400;">p99 accounting</div>
<div class="b" style="left:136.6px;top:1143.9px;width:12.8px;height:4.0px;background:#fade2a;border-radius:2px;"></div>
<div class="t" style="left:155.8px;top:1139.8px;font-size:12px;color:#ccccdc;font-weight:400;">p99 ad</div>
<div class="b" style="left:202.4px;top:1143.9px;width:12.8px;height:4.0px;background:#8ab8ff;border-radius:2px;"></div>
<div class="t" style="left:221.8px;top:1139.8px;font-size:12px;color:#ccccdc;font-weight:400;">p99 cart</div>
<div class="b" style="left:276.4px;top:1143.9px;width:12.8px;height:4.0px;background:#ff9830;border-radius:2px;"></div>
<div class="t" style="left:295.6px;top:1139.8px;font-size:12px;color:#ccccdc;font-weight:400;">p99 checkout</div>
<div class="b" style="left:378.2px;top:1143.9px;width:12.8px;height:4.0px;background:#f2495c;border-radius:2px;"></div>
<div class="t" style="left:397.3px;top:1139.8px;font-size:12px;color:#ccccdc;font-weight:400;">p99 currency</div>
<div class="b" style="left:477.3px;top:1143.9px;width:12.8px;height:4.0px;background:#5794f2;border-radius:2px;"></div>
<div class="t" style="left:496.5px;top:1139.8px;font-size:12px;color:#ccccdc;font-weight:400;">p99 email</div>
<div class="b" style="left:558.0px;top:1143.9px;width:12.8px;height:4.0px;background:#b877d9;border-radius:2px;"></div>
<div class="t" style="left:577.3px;top:1139.8px;font-size:12px;color:#ccccdc;font-weight:400;">p99 flagd</div>
<div class="b" style="left:637.5px;top:1143.9px;width:12.8px;height:4.0px;background:#705da0;border-radius:2px;"></div>
<div class="t" style="left:657.0px;top:1139.8px;font-size:12px;color:#ccccdc;font-weight:400;">p99 fraud-detection</div>
<div class="b" style="left:775.5px;top:1143.9px;width:12.8px;height:4.0px;background:#37872d;border-radius:2px;"></div>
<div class="t" style="left:794.5px;top:1139.8px;font-size:12px;color:#ccccdc;font-weight:400;">p99 frontend</div>
<div class="b" style="left:25.7px;top:1164.4px;width:12.8px;height:4.0px;background:#f2cc0c;border-radius:2px;"></div>
<div class="t" style="left:44.7px;top:1160.3px;font-size:12px;color:#ccccdc;font-weight:400;">p99 frontend-proxy</div>
<div class="b" style="left:159.5px;top:1164.4px;width:12.8px;height:4.0px;background:#447ebc;border-radius:2px;"></div>
<div class="t" style="left:178.8px;top:1160.3px;font-size:12px;color:#ccccdc;font-weight:400;">p99 load-generator</div>
<div class="b" style="left:293.0px;top:1164.4px;width:12.8px;height:4.0px;background:#c15c17;border-radius:2px;"></div>
<div class="t" style="left:312.7px;top:1160.3px;font-size:12px;color:#ccccdc;font-weight:400;">p99 payment</div>
<div class="b" style="left:391.8px;top:1164.4px;width:12.8px;height:4.0px;background:#8f1010;border-radius:2px;"></div>
<div class="t" style="left:411.0px;top:1160.3px;font-size:12px;color:#ccccdc;font-weight:400;">p99 product-catalog</div>
<div class="b" style="left:531.0px;top:1164.4px;width:12.8px;height:4.0px;background:#1f5c9e;border-radius:2px;"></div>
<div class="t" style="left:550.5px;top:1160.3px;font-size:12px;color:#ccccdc;font-weight:400;">p99 quote</div>
<div class="b" style="left:614.2px;top:1164.4px;width:12.8px;height:4.0px;background:#6d1f62;border-radius:2px;"></div>
<div class="t" style="left:633.5px;top:1160.3px;font-size:12px;color:#ccccdc;font-weight:400;">p99 recommendation</div>
<div class="b" style="left:755.9px;top:1164.4px;width:12.8px;height:4.0px;background:#584477;border-radius:2px;"></div>
<div class="t" style="left:775.3px;top:1160.3px;font-size:12px;color:#ccccdc;font-weight:400;">p99 shipping</div>
<div class="t" style="left:1035.5px;top:520.1px;font-size:16.5px;color:#d8d9e3;font-weight:400;letter-spacing:0.38px;">load-generator: user_checkout_multi</div>
<div class="t" style="left:1322.0px;top:524.4px;font-size:12px;color:#9fa0aa;font-weight:400;">1.04s</div>
<div class="t" style="left:1035.5px;top:542.8px;font-size:14px;color:#d8d9e3;font-weight:400;letter-spacing:0.62px;">2025-09-09 10:57<span style="color:#a9aab4;">:23.425</span></div>
<div class="b" style="left:1216.8px;top:540.8px;width:38.2px;height:19.7px;background:#1d2a44;border:1px solid #34507f;border-radius:2px;box-sizing:border-box;"></div>
<div class="t" style="left:1221.5px;top:545.7px;font-size:11px;color:#8ab8ff;font-weight:400;letter-spacing:0.2px;">POST</div>
<div class="b" style="left:1262.0px;top:540.8px;width:30.5px;height:19.7px;background:#1c2b1c;border:1px solid #35562f;border-radius:2px;box-sizing:border-box;"></div>
<div class="t" style="left:1267.0px;top:544.8px;font-size:12px;color:#8fd07f;font-weight:400;">200</div>
<div class="t" style="left:1302.5px;top:542.9px;font-size:13.8px;color:#d8d9e3;font-weight:400;">/oteldemo.CartService/GetCart</div>
<svg class="s" style="left:1749px;top:519px;" width="16" height="15" viewBox="0 0 16 15"><path d="M2 2.5 H13.5 V10.5 H9 L12 13.5 V10.5" fill="none" stroke="#6e9fff" stroke-width="1.4" stroke-linejoin="round"/><path d="M2 2.5 V10.5 H6" fill="none" stroke="#6e9fff" stroke-width="1.4"/><path d="M4.6 5.3 H10.8 M4.6 7.8 H9" stroke="#6e9fff" stroke-width="1.3"/></svg>
<div class="t" style="left:1769.4px;top:521.4px;font-size:12px;color:#6e9fff;font-weight:400;letter-spacing:-0.05px;">Give feedback</div>
<div class="b" style="left:1854.2px;top:516.3px;width:78.6px;height:21.1px;border:1px solid #3a3c42;border-radius:2px;box-sizing:border-box;"></div>
<svg class="s" style="left:1861px;top:520px;" width="14" height="14" viewBox="0 0 14 14"><path d="M5 3.2 H9.2 L11.6 5.6 V11.8 H5 Z" fill="none" stroke="#c8c9d2" stroke-width="1.3" stroke-linejoin="round"/><path d="M3 5 V12.8 Q3 13.6 3.8 13.6 H9" fill="none" stroke="#c8c9d2" stroke-width="1.3"/></svg>
<div class="t" style="left:1881.9px;top:521.8px;font-size:11.3px;color:#d8d9e3;font-weight:400;-webkit-text-stroke:0.45px currentColor;">Trace ID</div>
<div class="b" style="left:1937.4px;top:516.3px;width:68.2px;height:21.1px;border:1px solid #3a3c42;border-radius:2px;box-sizing:border-box;"></div>
<svg class="s" style="left:1944px;top:520px;" width="13" height="14" viewBox="0 0 13 14"><path d="M2 2 H9.3 L11.5 4.2 V12 H2 Z" fill="none" stroke="#c8c9d2" stroke-width="1.3" stroke-linejoin="round"/><path d="M4.4 2 V5.2 H8.6 V2 M4 12 V8.4 H9.4 V12" fill="none" stroke="#c8c9d2" stroke-width="1.2"/></svg>
<div class="t" style="left:1964.1px;top:521.5px;font-size:11.7px;color:#d8d9e3;font-weight:400;-webkit-text-stroke:0.45px currentColor;">Export</div>
<div class="b" style="left:1029.0px;top:570.3px;width:983.5px;height:1.0px;background:#2a2c31;"></div>
<svg class="s" style="left:1038px;top:584px;" width="9.0" height="9.0" viewBox="0 0 9.0 9.0"><path d="M3.2 2.0 L5.8 4.5 L3.2 7.0" fill="none" stroke="#c4c5cf" stroke-width="1.3" stroke-linecap="round" stroke-linejoin="round"/></svg>
<div class="t" style="left:1057.5px;top:581.9px;font-size:13.6px;color:#d8d9e3;font-weight:400;-webkit-text-stroke:0.45px currentColor;">Span Filters</div>
<svg class="s" style="left:1140px;top:582px;" width="14" height="14" viewBox="0 0 14 14"><circle cx="7" cy="7" r="5.6" fill="none" stroke="#b8b9c3" stroke-width="1.2"/><path d="M7 6.2 V10" stroke="#b8b9c3" stroke-width="1.3"/><circle cx="7" cy="4.3" r="0.8" fill="#b8b9c3"/></svg>
<div class="t" style="left:1833.6px;top:582.4px;font-size:14px;color:#d8d9e3;font-weight:400;-webkit-text-stroke:0.45px currentColor;">34 spans</div>
<svg class="s" style="left:1896px;top:583px;" width="14" height="14" viewBox="0 0 14 14"><circle cx="7" cy="7" r="5.6" fill="none" stroke="#b8b9c3" stroke-width="1.2"/><path d="M7 6.2 V10" stroke="#b8b9c3" stroke-width="1.3"/><circle cx="7" cy="4.3" r="0.8" fill="#b8b9c3"/></svg>
<div class="b" style="left:1924.2px;top:579.0px;width:38.7px;height:20.8px;border:1px solid #2e3035;border-radius:2px;box-sizing:border-box;"></div>
<div class="t" style="left:1931.6px;top:583.8px;font-size:11.5px;color:#8e8f9b;font-weight:400;-webkit-text-stroke:0.45px currentColor;">Prev</div>
<div class="b" style="left:1967.2px;top:579.0px;width:38.4px;height:20.8px;border:1px solid #2e3035;border-radius:2px;box-sizing:border-box;"></div>
<div class="t" style="left:1973.8px;top:583.5px;font-size:11.8px;color:#8e8f9b;font-weight:400;-webkit-text-stroke:0.45px currentColor;">Next</div>
<div class="b" style="left:1029.0px;top:607.7px;width:983.5px;height:1.0px;background:#2a2c31;"></div>
<div class="t" style="left:1035.5px;top:609.7px;font-size:10px;color:#8a8b94;font-weight:400;-webkit-text-stroke:0;">0μs</div>
<div class="t" style="left:1278.0px;top:609.7px;font-size:10px;color:#8a8b94;font-weight:400;-webkit-text-stroke:0;">260.92ms</div>
<div class="t" style="left:1520.8px;top:609.7px;font-size:10px;color:#8a8b94;font-weight:400;-webkit-text-stroke:0;">521.84ms</div>
<div class="t" style="left:1763.8px;top:609.7px;font-size:10px;color:#8a8b94;font-weight:400;-webkit-text-stroke:0;">782.76ms</div>
<div class="t" style="right:33.0px;top:609.7px;font-size:10px;color:#8a8b94;font-weight:400;text-align:right;-webkit-text-stroke:0;">1.04s</div>
<svg class="s" style="left:1035px;top:621px;" width="972" height="54" viewBox="0 0 972 54"><rect x="0.5" y="0.5" width="971" height="53" fill="#0b0b0d" stroke="#5e6066" stroke-width="1"/><rect x="1.0" y="1.0" width="1.5" height="18.0" fill="#55575c"/><rect x="1.0" y="1.0" width="41.0" height="1.0" fill="#d9a514"/><rect x="42.0" y="1.2" width="928.0" height="2.4" fill="#d9a514"/><rect x="42.0" y="3.6" width="928.0" height="2.4" fill="#5f9e50"/><rect x="43.0" y="6.0" width="927.0" height="6.8" fill="#dca583"/><rect x="45.0" y="12.8" width="898.0" height="3.2" fill="#5a9b4c"/><rect x="943.0" y="12.8" width="27.0" height="2.2" fill="#5a9b4c"/><path d="M48 16 L53 24.5" stroke="#7a9bb0" stroke-width="1.2"/><rect x="53.0" y="24.2" width="34.0" height="1.8" fill="#d9a514"/><rect x="53.0" y="23.5" width="139.0" height="1.5" fill="#5a9b4c"/><path d="M192 24.5 L194 32" stroke="#5a9b4c" stroke-width="1.2"/><rect x="193.0" y="32.0" width="127.0" height="2.0" fill="#d9a514"/><rect x="193.0" y="31.0" width="253.0" height="1.6" fill="#5a9b4c"/><path d="M446 32 L449 38.5" stroke="#5a9b4c" stroke-width="1.2"/><rect x="449.0" y="38.3" width="140.0" height="1.7" fill="#d9a514"/><rect x="449.0" y="37.0" width="259.0" height="1.5" fill="#5a9b4c"/><path d="M708 38 L714 51.5" stroke="#9fc09a" stroke-width="1.4"/><rect x="714.0" y="51.3" width="125.0" height="2.2" fill="#d9a514"/><rect x="714.0" y="50.5" width="229.0" height="1.5" fill="#5a9b4c"/><rect x="242.5" y="1" width="1.2" height="52" fill="#77787e"/><rect x="485.3" y="1" width="1.2" height="52" fill="#77787e"/><rect x="727.5" y="1" width="1.2" height="52" fill="#77787e"/></svg>
<div class="b" style="left:1028.9px;top:681.9px;width:983.6px;height:34.5px;background:#202020;border-bottom:1px solid #3a3b3e;box-sizing:border-box;"></div>
<div class="t" style="left:1035.5px;top:690.1px;font-size:16.8px;color:#dcdde6;font-weight:400;letter-spacing:0.55px;-webkit-text-stroke:0.3px #dcdde6;">Service &amp; Operation</div>
<svg class="s" style="left:1312px;top:693px;" width="11.0" height="11.0" viewBox="0 0 11.0 11.0"><path d="M2.5 4.0 L5.5 7.0 L8.5 4.0" fill="none" stroke="#c4c5cf" stroke-width="1.9" stroke-linecap="round" stroke-linejoin="round"/></svg>
<svg class="s" style="left:1337px;top:693px;" width="11.0" height="11.0" viewBox="0 0 11.0 11.0"><path d="M4.0 2.5 L7.0 5.5 L4.0 8.5" fill="none" stroke="#c4c5cf" stroke-width="1.9" stroke-linecap="round" stroke-linejoin="round"/></svg>
<svg class="s" style="left:1361px;top:690px;" width="14" height="16" viewBox="0 0 14 16"><path d="M3.5 3.5 L7 7 L10.5 3.5 M3.5 8.5 L7 12 L10.5 8.5" fill="none" stroke="#c4c5cf" stroke-width="1.8" stroke-linecap="round" stroke-linejoin="round"/></svg>
<svg class="s" style="left:1386px;top:691px;" width="16" height="14" viewBox="0 0 16 14"><path d="M3.5 3.5 L7 7 L3.5 10.5 M8.5 3.5 L12 7 L8.5 10.5" fill="none" stroke="#c4c5cf" stroke-width="1.8" stroke-linecap="round" stroke-linejoin="round"/></svg>
<div class="b" style="left:1413.5px;top:703.0px;width:1.0px;height:9.0px;background:#9a9ba3;"></div>
<div class="b" style="left:1416.2px;top:703.0px;width:1.0px;height:9.0px;background:#9a9ba3;"></div>
<div class="b" style="left:1421.8px;top:681.9px;width:1.0px;height:498.1px;background:#35373b;"></div>
<div class="t" style="left:1425.5px;top:692.2px;font-size:14.2px;color:#d8d9e3;font-weight:400;-webkit-text-stroke:0.45px currentColor;">0μs</div>
<div class="b" style="left:1569.3px;top:681.9px;width:1.0px;height:498.1px;background:#2e3034;"></div>
<div class="t" style="left:1573.3px;top:692.2px;font-size:14.2px;color:#d8d9e3;font-weight:400;-webkit-text-stroke:0.45px currentColor;">260.92ms</div>
<div class="b" style="left:1717.9px;top:681.9px;width:1.0px;height:498.1px;background:#2e3034;"></div>
<div class="t" style="left:1721.9px;top:692.2px;font-size:14.2px;color:#d8d9e3;font-weight:400;-webkit-text-stroke:0.45px currentColor;">521.84ms</div>
<div class="b" style="left:1865.0px;top:681.9px;width:1.0px;height:498.1px;background:#2e3034;"></div>
<div class="t" style="left:1869.0px;top:692.2px;font-size:14.2px;color:#d8d9e3;font-weight:400;-webkit-text-stroke:0.45px currentColor;">782.76ms</div>
<div class="t" style="right:29.5px;top:692.2px;font-size:14.2px;color:#d8d9e3;font-weight:400;text-align:right;-webkit-text-stroke:0.45px currentColor;">1.04s</div>
<div class="b" style="left:1028.9px;top:716.5px;width:13.3px;height:25.3px;background:#14191d;"></div>
<div class="b" style="left:1028.4px;top:716.5px;width:1.0px;height:25.3px;background:#2b2f33;"></div>
<div class="b" style="left:1042.2px;top:716.5px;width:379.6px;height:25.3px;background:#2a2620;"></div>
<div class="b" style="left:1042.2px;top:740.0px;width:379.6px;height:1.8px;background:#86692a;"></div>
<svg class="s" style="left:1031px;top:725px;" width="8.6" height="8.6" viewBox="0 0 8.6 8.6"><path d="M1.9 3.1 L4.3 5.5 L6.7 3.1" fill="none" stroke="#c4c5cf" stroke-width="1.4" stroke-linecap="round" stroke-linejoin="round"/></svg>
<div class="t" style="left:1045.7px;top:720.7px;width:358.3px;overflow:hidden;font-size:12.5px;line-height:1.4;letter-spacing:0.05px;"><span style="font-weight:700;color:#e1e2ea;-webkit-text-stroke:0;">load-generator</span>&nbsp;&nbsp;<span style="color:#b3b4bd;">user_checkout_multi (1.04s)</span></div>
<svg class="s" style="left:1404px;top:721px;" width="15" height="15" viewBox="0 0 15 15"><g transform="rotate(-45 7.5 7.5)" fill="none" stroke="#c8c9d2" stroke-width="1.3" stroke-linecap="round"><path d="M6.3 5.1 H3.9 A2.4 2.4 0 0 0 3.9 9.9 H6.3 A2.4 2.4 0 0 0 8.2 8.6"/><path d="M8.7 9.9 H11.1 A2.4 2.4 0 0 0 11.1 5.1 H8.7 A2.4 2.4 0 0 0 6.8 6.4"/></g></svg>
<div class="b" style="left:1028.9px;top:741.8px;width:26.8px;height:25.3px;background:#14191d;"></div>
<div class="b" style="left:1028.4px;top:741.8px;width:1.0px;height:25.3px;background:#2b2f33;"></div>
<div class="b" style="left:1041.9px;top:741.8px;width:1.0px;height:25.3px;background:#2b2f33;"></div>
<div class="b" style="left:1055.7px;top:741.8px;width:366.1px;height:25.3px;background:#2a2620;"></div>
<div class="b" style="left:1055.7px;top:765.3px;width:366.1px;height:1.8px;background:#b38a22;"></div>
<svg class="s" style="left:1044px;top:750px;" width="8.6" height="8.6" viewBox="0 0 8.6 8.6"><path d="M1.9 3.1 L4.3 5.5 L6.7 3.1" fill="none" stroke="#c4c5cf" stroke-width="1.4" stroke-linecap="round" stroke-linejoin="round"/></svg>
<div class="t" style="left:1059.2px;top:746.0px;width:344.8px;overflow:hidden;font-size:12.5px;line-height:1.4;letter-spacing:0.05px;"><span style="color:#b3b4bd;">POST (997.68ms)</span></div>
<svg class="s" style="left:1404px;top:746px;" width="15" height="15" viewBox="0 0 15 15"><g transform="rotate(-45 7.5 7.5)" fill="none" stroke="#c8c9d2" stroke-width="1.3" stroke-linecap="round"><path d="M6.3 5.1 H3.9 A2.4 2.4 0 0 0 3.9 9.9 H6.3 A2.4 2.4 0 0 0 8.2 8.6"/><path d="M8.7 9.9 H11.1 A2.4 2.4 0 0 0 11.1 5.1 H8.7 A2.4 2.4 0 0 0 6.8 6.4"/></g></svg>
<div class="t" style="left:1422.8px;top:747.6px;width:21.2px;overflow:hidden;font-size:12px;color:#b0b1ba;direction:rtl;text-align:left;">997.68ms</div>
<div class="b" style="left:1028.9px;top:767.1px;width:40.3px;height:25.3px;background:#14191d;"></div>
<div class="b" style="left:1028.4px;top:767.1px;width:1.0px;height:25.3px;background:#2b2f33;"></div>
<div class="b" style="left:1041.9px;top:767.1px;width:1.0px;height:25.3px;background:#2b2f33;"></div>
<div class="b" style="left:1055.4px;top:767.1px;width:1.0px;height:25.3px;background:#2b2f33;"></div>
<div class="b" style="left:1069.2px;top:767.1px;width:352.6px;height:25.3px;background:#1d2122;"></div>
<div class="b" style="left:1069.2px;top:790.6px;width:352.6px;height:1.8px;background:#4f9a45;"></div>
<svg class="s" style="left:1058px;top:775px;" width="8.6" height="8.6" viewBox="0 0 8.6 8.6"><path d="M1.9 3.1 L4.3 5.5 L6.7 3.1" fill="none" stroke="#c4c5cf" stroke-width="1.4" stroke-linecap="round" stroke-linejoin="round"/></svg>
<svg class="s" style="left:1072px;top:772px;" width="15" height="15" viewBox="0 0 15 15"><circle cx="7.5" cy="7.5" r="7.2" fill="#e0394b"/><circle cx="7.5" cy="7.5" r="4.6" fill="none" stroke="#2a1416" stroke-width="1.3"/><path d="M7.5 5 V8.2" stroke="#2a1416" stroke-width="1.4"/><circle cx="7.5" cy="10" r="0.8" fill="#2a1416"/></svg>
<div class="t" style="left:1090.7px;top:771.3px;width:313.3px;overflow:hidden;font-size:12.5px;line-height:1.4;letter-spacing:0.05px;"><span style="font-weight:700;color:#e1e2ea;-webkit-text-stroke:0;">frontend-proxy</span>&nbsp;&nbsp;<span style="color:#b3b4bd;">ingress (996.34ms)</span></div>
<svg class="s" style="left:1404px;top:772px;" width="15" height="15" viewBox="0 0 15 15"><g transform="rotate(-45 7.5 7.5)" fill="none" stroke="#c8c9d2" stroke-width="1.3" stroke-linecap="round"><path d="M6.3 5.1 H3.9 A2.4 2.4 0 0 0 3.9 9.9 H6.3 A2.4 2.4 0 0 0 8.2 8.6"/><path d="M8.7 9.9 H11.1 A2.4 2.4 0 0 0 11.1 5.1 H8.7 A2.4 2.4 0 0 0 6.8 6.4"/></g></svg>
<div class="t" style="left:1422.8px;top:772.9px;width:21.2px;overflow:hidden;font-size:12px;color:#b0b1ba;direction:rtl;text-align:left;">996.34ms</div>
<div class="b" style="left:1028.9px;top:792.4px;width:53.8px;height:25.3px;background:#14191d;"></div>
<div class="b" style="left:1028.4px;top:792.4px;width:1.0px;height:25.3px;background:#2b2f33;"></div>
<div class="b" style="left:1041.9px;top:792.4px;width:1.0px;height:25.3px;background:#2b2f33;"></div>
<div class="b" style="left:1055.4px;top:792.4px;width:1.0px;height:25.3px;background:#2b2f33;"></div>
<div class="b" style="left:1068.9px;top:792.4px;width:1.0px;height:25.3px;background:#2b2f33;"></div>
<div class="b" style="left:1082.7px;top:792.4px;width:339.1px;height:25.3px;background:#1d2122;"></div>
<div class="b" style="left:1082.7px;top:815.9px;width:339.1px;height:1.8px;background:#4f9a45;"></div>
<svg class="s" style="left:1071px;top:800px;" width="8.6" height="8.6" viewBox="0 0 8.6 8.6"><path d="M1.9 3.1 L4.3 5.5 L6.7 3.1" fill="none" stroke="#c4c5cf" stroke-width="1.4" stroke-linecap="round" stroke-linejoin="round"/></svg>
<svg class="s" style="left:1086px;top:797px;" width="15" height="15" viewBox="0 0 15 15"><circle cx="7.5" cy="7.5" r="7.2" fill="#e0394b"/><circle cx="7.5" cy="7.5" r="4.6" fill="none" stroke="#2a1416" stroke-width="1.3"/><path d="M7.5 5 V8.2" stroke="#2a1416" stroke-width="1.4"/><circle cx="7.5" cy="10" r="0.8" fill="#2a1416"/></svg>
<div class="t" style="left:1104.2px;top:796.6px;width:299.8px;overflow:hidden;font-size:12.5px;line-height:1.4;letter-spacing:0.05px;"><span style="color:#b3b4bd;">router frontend egress (996.06ms)</span></div>
<svg class="s" style="left:1404px;top:797px;" width="15" height="15" viewBox="0 0 15 15"><g transform="rotate(-45 7.5 7.5)" fill="none" stroke="#c8c9d2" stroke-width="1.3" stroke-linecap="round"><path d="M6.3 5.1 H3.9 A2.4 2.4 0 0 0 3.9 9.9 H6.3 A2.4 2.4 0 0 0 8.2 8.6"/><path d="M8.7 9.9 H11.1 A2.4 2.4 0 0 0 11.1 5.1 H8.7 A2.4 2.4 0 0 0 6.8 6.4"/></g></svg>
<div class="t" style="left:1422.8px;top:798.2px;width:21.2px;overflow:hidden;font-size:12px;color:#b0b1ba;direction:rtl;text-align:left;">996.06ms</div>
<div class="b" style="left:1028.9px;top:817.7px;width:67.3px;height:25.3px;background:#14191d;"></div>
<div class="b" style="left:1028.4px;top:817.7px;width:1.0px;height:25.3px;background:#2b2f33;"></div>
<div class="b" style="left:1041.9px;top:817.7px;width:1.0px;height:25.3px;background:#2b2f33;"></div>
<div class="b" style="left:1055.4px;top:817.7px;width:1.0px;height:25.3px;background:#2b2f33;"></div>
<div class="b" style="left:1068.9px;top:817.7px;width:1.0px;height:25.3px;background:#2b2f33;"></div>
<div class="b" style="left:1082.4px;top:817.7px;width:1.0px;height:25.3px;background:#2b2f33;"></div>
<div class="b" style="left:1096.2px;top:817.7px;width:325.6px;height:25.3px;background:#292524;"></div>
<div class="b" style="left:1096.2px;top:841.2px;width:325.6px;height:1.8px;background:#d9a07e;"></div>
<svg class="s" style="left:1085px;top:826px;" width="8.6" height="8.6" viewBox="0 0 8.6 8.6"><path d="M1.9 3.1 L4.3 5.5 L6.7 3.1" fill="none" stroke="#c4c5cf" stroke-width="1.4" stroke-linecap="round" stroke-linejoin="round"/></svg>
<div class="t" style="left:1099.7px;top:821.9px;width:304.3px;overflow:hidden;font-size:12.5px;line-height:1.4;letter-spacing:0.05px;"><span style="font-weight:700;color:#e1e2ea;-webkit-text-stroke:0;">frontend</span>&nbsp;&nbsp;<span style="color:#b3b4bd;">POST (997.01ms)</span></div>
<svg class="s" style="left:1404px;top:822px;" width="15" height="15" viewBox="0 0 15 15"><g transform="rotate(-45 7.5 7.5)" fill="none" stroke="#c8c9d2" stroke-width="1.3" stroke-linecap="round"><path d="M6.3 5.1 H3.9 A2.4 2.4 0 0 0 3.9 9.9 H6.3 A2.4 2.4 0 0 0 8.2 8.6"/><path d="M8.7 9.9 H11.1 A2.4 2.4 0 0 0 11.1 5.1 H8.7 A2.4 2.4 0 0 0 6.8 6.4"/></g></svg>
<div class="t" style="left:1422.8px;top:823.5px;width:21.2px;overflow:hidden;font-size:12px;color:#b0b1ba;direction:rtl;text-align:left;">997.01ms</div>
<div class="b" style="left:1028.9px;top:843.0px;width:80.8px;height:25.3px;background:#14191d;"></div>
<div class="b" style="left:1028.4px;top:843.0px;width:1.0px;height:25.3px;background:#2b2f33;"></div>
<div class="b" style="left:1041.9px;top:843.0px;width:1.0px;height:25.3px;background:#2b2f33;"></div>
<div class="b" style="left:1055.4px;top:843.0px;width:1.0px;height:25.3px;background:#2b2f33;"></div>
<div class="b" style="left:1068.9px;top:843.0px;width:1.0px;height:25.3px;background:#2b2f33;"></div>
<div class="b" style="left:1082.4px;top:843.0px;width:1.0px;height:25.3px;background:#2b2f33;"></div>
<div class="b" style="left:1095.9px;top:843.0px;width:1.0px;height:25.3px;background:#2b2f33;"></div>
<div class="b" style="left:1109.7px;top:843.0px;width:312.1px;height:25.3px;background:#292524;"></div>
<div class="b" style="left:1109.7px;top:866.5px;width:312.1px;height:1.8px;background:#d9a07e;"></div>
<svg class="s" style="left:1098px;top:851px;" width="8.6" height="8.6" viewBox="0 0 8.6 8.6"><path d="M1.9 3.1 L4.3 5.5 L6.7 3.1" fill="none" stroke="#c4c5cf" stroke-width="1.4" stroke-linecap="round" stroke-linejoin="round"/></svg>
<div class="t" style="left:1113.2px;top:847.2px;width:290.8px;overflow:hidden;font-size:12.5px;line-height:1.4;letter-spacing:0.05px;"><span style="color:#b3b4bd;">POST /api/checkout (996.62ms)</span></div>
<svg class="s" style="left:1404px;top:848px;" width="15" height="15" viewBox="0 0 15 15"><g transform="rotate(-45 7.5 7.5)" fill="none" stroke="#c8c9d2" stroke-width="1.3" stroke-linecap="round"><path d="M6.3 5.1 H3.9 A2.4 2.4 0 0 0 3.9 9.9 H6.3 A2.4 2.4 0 0 0 8.2 8.6"/><path d="M8.7 9.9 H11.1 A2.4 2.4 0 0 0 11.1 5.1 H8.7 A2.4 2.4 0 0 0 6.8 6.4"/></g></svg>
<div class="t" style="left:1422.8px;top:848.8px;width:21.2px;overflow:hidden;font-size:12px;color:#b0b1ba;direction:rtl;text-align:left;">996.62ms</div>
<div class="b" style="left:1028.9px;top:868.3px;width:94.3px;height:25.3px;background:#14191d;"></div>
<div class="b" style="left:1028.4px;top:868.3px;width:1.0px;height:25.3px;background:#2b2f33;"></div>
<div class="b" style="left:1041.9px;top:868.3px;width:1.0px;height:25.3px;background:#2b2f33;"></div>
<div class="b" style="left:1055.4px;top:868.3px;width:1.0px;height:25.3px;background:#2b2f33;"></div>
<div class="b" style="left:1068.9px;top:868.3px;width:1.0px;height:25.3px;background:#2b2f33;"></div>
<div class="b" style="left:1082.4px;top:868.3px;width:1.0px;height:25.3px;background:#2b2f33;"></div>
<div class="b" style="left:1095.9px;top:868.3px;width:1.0px;height:25.3px;background:#2b2f33;"></div>
<div class="b" style="left:1109.4px;top:868.3px;width:1.0px;height:25.3px;background:#2b2f33;"></div>
<div class="b" style="left:1123.2px;top:868.3px;width:298.6px;height:25.3px;background:#292524;"></div>
<div class="b" style="left:1123.2px;top:891.8px;width:298.6px;height:1.8px;background:#d9a07e;"></div>
<svg class="s" style="left:1112px;top:876px;" width="8.6" height="8.6" viewBox="0 0 8.6 8.6"><path d="M1.9 3.1 L4.3 5.5 L6.7 3.1" fill="none" stroke="#c4c5cf" stroke-width="1.4" stroke-linecap="round" stroke-linejoin="round"/></svg>
<div class="t" style="left:1126.7px;top:872.5px;width:277.3px;overflow:hidden;font-size:12.5px;line-height:1.4;letter-spacing:0.05px;"><span style="color:#b3b4bd;">executing api route (pages) /api/checkout (995.93ms)</span></div>
<svg class="s" style="left:1404px;top:873px;" width="15" height="15" viewBox="0 0 15 15"><g transform="rotate(-45 7.5 7.5)" fill="none" stroke="#c8c9d2" stroke-width="1.3" stroke-linecap="round"><path d="M6.3 5.1 H3.9 A2.4 2.4 0 0 0 3.9 9.9 H6.3 A2.4 2.4 0 0 0 8.2 8.6"/><path d="M8.7 9.9 H11.1 A2.4 2.4 0 0 0 11.1 5.1 H8.7 A2.4 2.4 0 0 0 6.8 6.4"/></g></svg>
<div class="t" style="left:1422.8px;top:874.1px;width:22.4px;overflow:hidden;font-size:12px;color:#b0b1ba;direction:rtl;text-align:left;">995.93ms</div>
<div class="b" style="left:1028.9px;top:893.6px;width:107.8px;height:25.3px;background:#14191d;"></div>
<div class="b" style="left:1028.4px;top:893.6px;width:1.0px;height:25.3px;background:#2b2f33;"></div>
<div class="b" style="left:1041.9px;top:893.6px;width:1.0px;height:25.3px;background:#2b2f33;"></div>
<div class="b" style="left:1055.4px;top:893.6px;width:1.0px;height:25.3px;background:#2b2f33;"></div>
<div class="b" style="left:1068.9px;top:893.6px;width:1.0px;height:25.3px;background:#2b2f33;"></div>
<div class="b" style="left:1082.4px;top:893.6px;width:1.0px;height:25.3px;background:#2b2f33;"></div>
<div class="b" style="left:1095.9px;top:893.6px;width:1.0px;height:25.3px;background:#2b2f33;"></div>
<div class="b" style="left:1109.4px;top:893.6px;width:1.0px;height:25.3px;background:#2b2f33;"></div>
<div class="b" style="left:1122.9px;top:893.6px;width:1.0px;height:25.3px;background:#2b2f33;"></div>
<div class="b" style="left:1136.7px;top:893.6px;width:285.1px;height:25.3px;background:#292524;"></div>
<div class="b" style="left:1136.7px;top:917.1px;width:285.1px;height:1.8px;background:#d9a07e;"></div>
<svg class="s" style="left:1125px;top:902px;" width="8.6" height="8.6" viewBox="0 0 8.6 8.6"><path d="M1.9 3.1 L4.3 5.5 L6.7 3.1" fill="none" stroke="#c4c5cf" stroke-width="1.4" stroke-linecap="round" stroke-linejoin="round"/></svg>
<div class="t" style="left:1140.2px;top:897.8px;width:263.8px;overflow:hidden;font-size:12.5px;line-height:1.4;letter-spacing:0.05px;"><span style="color:#b3b4bd;">grpc.oteldemo.CheckoutService/PlaceOrder (995.36ms)</span></div>
<svg class="s" style="left:1404px;top:898px;" width="15" height="15" viewBox="0 0 15 15"><g transform="rotate(-45 7.5 7.5)" fill="none" stroke="#c8c9d2" stroke-width="1.3" stroke-linecap="round"><path d="M6.3 5.1 H3.9 A2.4 2.4 0 0 0 3.9 9.9 H6.3 A2.4 2.4 0 0 0 8.2 8.6"/><path d="M8.7 9.9 H11.1 A2.4 2.4 0 0 0 11.1 5.1 H8.7 A2.4 2.4 0 0 0 6.8 6.4"/></g></svg>
<div class="t" style="left:1422.8px;top:899.4px;width:22.4px;overflow:hidden;font-size:12px;color:#b0b1ba;direction:rtl;text-align:left;">995.36ms</div>
<div class="b" style="left:1028.9px;top:918.9px;width:121.3px;height:25.3px;background:#14191d;"></div>
<div class="b" style="left:1028.4px;top:918.9px;width:1.0px;height:25.3px;background:#2b2f33;"></div>
<div class="b" style="left:1041.9px;top:918.9px;width:1.0px;height:25.3px;background:#2b2f33;"></div>
<div class="b" style="left:1055.4px;top:918.9px;width:1.0px;height:25.3px;background:#2b2f33;"></div>
<div class="b" style="left:1068.9px;top:918.9px;width:1.0px;height:25.3px;background:#2b2f33;"></div>
<div class="b" style="left:1082.4px;top:918.9px;width:1.0px;height:25.3px;background:#2b2f33;"></div>
<div class="b" style="left:1095.9px;top:918.9px;width:1.0px;height:25.3px;background:#2b2f33;"></div>
<div class="b" style="left:1109.4px;top:918.9px;width:1.0px;height:25.3px;background:#2b2f33;"></div>
<div class="b" style="left:1122.9px;top:918.9px;width:1.0px;height:25.3px;background:#2b2f33;"></div>
<div class="b" style="left:1136.4px;top:918.9px;width:1.0px;height:25.3px;background:#2b2f33;"></div>
<div class="b" style="left:1150.2px;top:918.9px;width:271.6px;height:25.3px;background:#1d2122;"></div>
<div class="b" style="left:1150.2px;top:942.4px;width:271.6px;height:1.8px;background:#4f9a45;"></div>
<svg class="s" style="left:1139px;top:927px;" width="8.6" height="8.6" viewBox="0 0 8.6 8.6"><path d="M1.9 3.1 L4.3 5.5 L6.7 3.1" fill="none" stroke="#c4c5cf" stroke-width="1.4" stroke-linecap="round" stroke-linejoin="round"/></svg>
<div class="t" style="left:1153.7px;top:923.1px;width:250.3px;overflow:hidden;font-size:12.5px;line-height:1.4;letter-spacing:0.05px;"><span style="font-weight:700;color:#e1e2ea;-webkit-text-stroke:0;">checkout</span>&nbsp;&nbsp;<span style="color:#b3b4bd;">oteldemo.CheckoutService/PlaceOrder (994.17ms)</span></div>
<svg class="s" style="left:1404px;top:923px;" width="15" height="15" viewBox="0 0 15 15"><g transform="rotate(-45 7.5 7.5)" fill="none" stroke="#c8c9d2" stroke-width="1.3" stroke-linecap="round"><path d="M6.3 5.1 H3.9 A2.4 2.4 0 0 0 3.9 9.9 H6.3 A2.4 2.4 0 0 0 8.2 8.6"/><path d="M8.7 9.9 H11.1 A2.4 2.4 0 0 0 11.1 5.1 H8.7 A2.4 2.4 0 0 0 6.8 6.4"/></g></svg>
<div class="t" style="left:1422.8px;top:924.7px;width:24.0px;overflow:hidden;font-size:12px;color:#b0b1ba;direction:rtl;text-align:left;">994.17ms</div>
<div class="b" style="left:1028.9px;top:944.2px;width:134.8px;height:25.3px;background:#14191d;"></div>
<div class="b" style="left:1028.4px;top:944.2px;width:1.0px;height:25.3px;background:#2b2f33;"></div>
<div class="b" style="left:1041.9px;top:944.2px;width:1.0px;height:25.3px;background:#2b2f33;"></div>
<div class="b" style="left:1055.4px;top:944.2px;width:1.0px;height:25.3px;background:#2b2f33;"></div>
<div class="b" style="left:1068.9px;top:944.2px;width:1.0px;height:25.3px;background:#2b2f33;"></div>
<div class="b" style="left:1082.4px;top:944.2px;width:1.0px;height:25.3px;background:#2b2f33;"></div>
<div class="b" style="left:1095.9px;top:944.2px;width:1.0px;height:25.3px;background:#2b2f33;"></div>
<div class="b" style="left:1109.4px;top:944.2px;width:1.0px;height:25.3px;background:#2b2f33;"></div>
<div class="b" style="left:1122.9px;top:944.2px;width:1.0px;height:25.3px;background:#2b2f33;"></div>
<div class="b" style="left:1136.4px;top:944.2px;width:1.0px;height:25.3px;background:#2b2f33;"></div>
<div class="b" style="left:1149.9px;top:944.2px;width:1.0px;height:25.3px;background:#2b2f33;"></div>
<div class="b" style="left:1163.7px;top:944.2px;width:258.1px;height:25.3px;background:#1d2122;"></div>
<div class="b" style="left:1163.7px;top:967.7px;width:258.1px;height:1.8px;background:#4f9a45;"></div>
<svg class="s" style="left:1152px;top:952px;" width="8.6" height="8.6" viewBox="0 0 8.6 8.6"><path d="M1.9 3.1 L4.3 5.5 L6.7 3.1" fill="none" stroke="#c4c5cf" stroke-width="1.4" stroke-linecap="round" stroke-linejoin="round"/></svg>
<div class="t" style="left:1167.2px;top:948.4px;width:236.8px;overflow:hidden;font-size:12.5px;line-height:1.4;letter-spacing:0.05px;"><span style="color:#b3b4bd;">prepareOrderItemsAndShippingQuoteFromCart (9</span></div>
<svg class="s" style="left:1404px;top:949px;" width="15" height="15" viewBox="0 0 15 15"><g transform="rotate(-45 7.5 7.5)" fill="none" stroke="#c8c9d2" stroke-width="1.3" stroke-linecap="round"><path d="M6.3 5.1 H3.9 A2.4 2.4 0 0 0 3.9 9.9 H6.3 A2.4 2.4 0 0 0 8.2 8.6"/><path d="M8.7 9.9 H11.1 A2.4 2.4 0 0 0 11.1 5.1 H8.7 A2.4 2.4 0 0 0 6.8 6.4"/></g></svg>
<div class="t" style="left:1422.8px;top:950.0px;width:25.6px;overflow:hidden;font-size:12px;color:#b0b1ba;direction:rtl;text-align:left;">974.56ms</div>
<div class="b" style="left:1028.9px;top:969.5px;width:148.3px;height:25.3px;background:#14191d;"></div>
<div class="b" style="left:1028.4px;top:969.5px;width:1.0px;height:25.3px;background:#2b2f33;"></div>
<div class="b" style="left:1041.9px;top:969.5px;width:1.0px;height:25.3px;background:#2b2f33;"></div>
<div class="b" style="left:1055.4px;top:969.5px;width:1.0px;height:25.3px;background:#2b2f33;"></div>
<div class="b" style="left:1068.9px;top:969.5px;width:1.0px;height:25.3px;background:#2b2f33;"></div>
<div class="b" style="left:1082.4px;top:969.5px;width:1.0px;height:25.3px;background:#2b2f33;"></div>
<div class="b" style="left:1095.9px;top:969.5px;width:1.0px;height:25.3px;background:#2b2f33;"></div>
<div class="b" style="left:1109.4px;top:969.5px;width:1.0px;height:25.3px;background:#2b2f33;"></div>
<div class="b" style="left:1122.9px;top:969.5px;width:1.0px;height:25.3px;background:#2b2f33;"></div>
<div class="b" style="left:1136.4px;top:969.5px;width:1.0px;height:25.3px;background:#2b2f33;"></div>
<div class="b" style="left:1149.9px;top:969.5px;width:1.0px;height:25.3px;background:#2b2f33;"></div>
<div class="b" style="left:1163.4px;top:969.5px;width:1.0px;height:25.3px;background:#2b2f33;"></div>
<div class="b" style="left:1177.2px;top:969.5px;width:244.6px;height:25.3px;background:#1d2122;"></div>
<div class="b" style="left:1177.2px;top:993.0px;width:244.6px;height:1.8px;background:#4f9a45;"></div>
<svg class="s" style="left:1166px;top:978px;" width="8.6" height="8.6" viewBox="0 0 8.6 8.6"><path d="M1.9 3.1 L4.3 5.5 L6.7 3.1" fill="none" stroke="#c4c5cf" stroke-width="1.4" stroke-linecap="round" stroke-linejoin="round"/></svg>
<div class="t" style="left:1180.7px;top:973.7px;width:223.3px;overflow:hidden;font-size:12.5px;line-height:1.4;letter-spacing:0.05px;"><span style="color:#b3b4bd;">oteldemo.CartService/GetCart (1.66ms)</span></div>
<svg class="s" style="left:1404px;top:974px;" width="15" height="15" viewBox="0 0 15 15"><g transform="rotate(-45 7.5 7.5)" fill="none" stroke="#c8c9d2" stroke-width="1.3" stroke-linecap="round"><path d="M6.3 5.1 H3.9 A2.4 2.4 0 0 0 3.9 9.9 H6.3 A2.4 2.4 0 0 0 8.2 8.6"/><path d="M8.7 9.9 H11.1 A2.4 2.4 0 0 0 11.1 5.1 H8.7 A2.4 2.4 0 0 0 6.8 6.4"/></g></svg>
<div class="t" style="left:1459.7px;top:975.5px;font-size:12px;color:#c0c1ca;font-weight:400;">1.66ms</div>
<div class="b" style="left:1028.9px;top:994.8px;width:161.8px;height:25.3px;background:#14191d;"></div>
<div class="b" style="left:1028.4px;top:994.8px;width:1.0px;height:25.3px;background:#2b2f33;"></div>
<div class="b" style="left:1041.9px;top:994.8px;width:1.0px;height:25.3px;background:#2b2f33;"></div>
<div class="b" style="left:1055.4px;top:994.8px;width:1.0px;height:25.3px;background:#2b2f33;"></div>
<div class="b" style="left:1068.9px;top:994.8px;width:1.0px;height:25.3px;background:#2b2f33;"></div>
<div class="b" style="left:1082.4px;top:994.8px;width:1.0px;height:25.3px;background:#2b2f33;"></div>
<div class="b" style="left:1095.9px;top:994.8px;width:1.0px;height:25.3px;background:#2b2f33;"></div>
<div class="b" style="left:1109.4px;top:994.8px;width:1.0px;height:25.3px;background:#2b2f33;"></div>
<div class="b" style="left:1122.9px;top:994.8px;width:1.0px;height:25.3px;background:#2b2f33;"></div>
<div class="b" style="left:1136.4px;top:994.8px;width:1.0px;height:25.3px;background:#2b2f33;"></div>
<div class="b" style="left:1149.9px;top:994.8px;width:1.0px;height:25.3px;background:#2b2f33;"></div>
<div class="b" style="left:1163.4px;top:994.8px;width:1.0px;height:25.3px;background:#2b2f33;"></div>
<div class="b" style="left:1176.9px;top:994.8px;width:1.0px;height:25.3px;background:#2b2f33;"></div>
<div class="b" style="left:1190.7px;top:994.8px;width:231.1px;height:25.3px;background:#2a2630;"></div>
<div class="b" style="left:1190.7px;top:1018.3px;width:231.1px;height:1.8px;background:#c58bd8;"></div>
<svg class="s" style="left:1179px;top:1003px;" width="8.6" height="8.6" viewBox="0 0 8.6 8.6"><path d="M1.9 3.1 L4.3 5.5 L6.7 3.1" fill="none" stroke="#c4c5cf" stroke-width="1.4" stroke-linecap="round" stroke-linejoin="round"/></svg>
<div class="t" style="left:1194.2px;top:999.0px;width:209.8px;overflow:hidden;font-size:12.5px;line-height:1.4;letter-spacing:0.05px;"><span style="font-weight:700;color:#e1e2ea;-webkit-text-stroke:0;">cart</span>&nbsp;&nbsp;<span style="color:#b3b4bd;">POST /oteldemo.CartService/GetCart (259.4μs)</span></div>
<svg class="s" style="left:1404px;top:999px;" width="15" height="15" viewBox="0 0 15 15"><g transform="rotate(-45 7.5 7.5)" fill="none" stroke="#c8c9d2" stroke-width="1.3" stroke-linecap="round"><path d="M6.3 5.1 H3.9 A2.4 2.4 0 0 0 3.9 9.9 H6.3 A2.4 2.4 0 0 0 8.2 8.6"/><path d="M8.7 9.9 H11.1 A2.4 2.4 0 0 0 11.1 5.1 H8.7 A2.4 2.4 0 0 0 6.8 6.4"/></g></svg>
<div class="t" style="left:1459.7px;top:1000.8px;font-size:12px;color:#c0c1ca;font-weight:400;">259.4μs</div>
<div class="b" style="left:1028.9px;top:1020.1px;width:175.3px;height:25.3px;background:#14191d;"></div>
<div class="b" style="left:1028.4px;top:1020.1px;width:1.0px;height:25.3px;background:#2b2f33;"></div>
<div class="b" style="left:1041.9px;top:1020.1px;width:1.0px;height:25.3px;background:#2b2f33;"></div>
<div class="b" style="left:1055.4px;top:1020.1px;width:1.0px;height:25.3px;background:#2b2f33;"></div>
<div class="b" style="left:1068.9px;top:1020.1px;width:1.0px;height:25.3px;background:#2b2f33;"></div>
<div class="b" style="left:1082.4px;top:1020.1px;width:1.0px;height:25.3px;background:#2b2f33;"></div>
<div class="b" style="left:1095.9px;top:1020.1px;width:1.0px;height:25.3px;background:#2b2f33;"></div>
<div class="b" style="left:1109.4px;top:1020.1px;width:1.0px;height:25.3px;background:#2b2f33;"></div>
<div class="b" style="left:1122.9px;top:1020.1px;width:1.0px;height:25.3px;background:#2b2f33;"></div>
<div class="b" style="left:1136.4px;top:1020.1px;width:1.0px;height:25.3px;background:#2b2f33;"></div>
<div class="b" style="left:1149.9px;top:1020.1px;width:1.0px;height:25.3px;background:#2b2f33;"></div>
<div class="b" style="left:1163.4px;top:1020.1px;width:1.0px;height:25.3px;background:#2b2f33;"></div>
<div class="b" style="left:1176.9px;top:1020.1px;width:1.0px;height:25.3px;background:#2b2f33;"></div>
<div class="b" style="left:1190.4px;top:1020.1px;width:1.0px;height:25.3px;background:#2b2f33;"></div>
<div class="b" style="left:1204.2px;top:1020.1px;width:217.6px;height:25.3px;background:#2a2630;"></div>
<div class="b" style="left:1204.2px;top:1043.6px;width:217.6px;height:1.8px;background:#c58bd8;"></div>
<div class="t" style="left:1207.7px;top:1024.3px;width:196.3px;overflow:hidden;font-size:12.5px;line-height:1.4;letter-spacing:0.05px;"><span style="color:#b3b4bd;">HGET (134.5μs)</span></div>
<svg class="s" style="left:1404px;top:1025px;" width="15" height="15" viewBox="0 0 15 15"><g transform="rotate(-45 7.5 7.5)" fill="none" stroke="#c8c9d2" stroke-width="1.3" stroke-linecap="round"><path d="M6.3 5.1 H3.9 A2.4 2.4 0 0 0 3.9 9.9 H6.3 A2.4 2.4 0 0 0 8.2 8.6"/><path d="M8.7 9.9 H11.1 A2.4 2.4 0 0 0 11.1 5.1 H8.7 A2.4 2.4 0 0 0 6.8 6.4"/></g></svg>
<div class="t" style="left:1459.7px;top:1026.1px;font-size:12px;color:#c0c1ca;font-weight:400;">134.5μs</div>
<div class="b" style="left:1028.9px;top:1045.4px;width:148.3px;height:25.3px;background:#14191d;"></div>
<div class="b" style="left:1028.4px;top:1045.4px;width:1.0px;height:25.3px;background:#2b2f33;"></div>
<div class="b" style="left:1041.9px;top:1045.4px;width:1.0px;height:25.3px;background:#2b2f33;"></div>
<div class="b" style="left:1055.4px;top:1045.4px;width:1.0px;height:25.3px;background:#2b2f33;"></div>
<div class="b" style="left:1068.9px;top:1045.4px;width:1.0px;height:25.3px;background:#2b2f33;"></div>
<div class="b" style="left:1082.4px;top:1045.4px;width:1.0px;height:25.3px;background:#2b2f33;"></div>
<div class="b" style="left:1095.9px;top:1045.4px;width:1.0px;height:25.3px;background:#2b2f33;"></div>
<div class="b" style="left:1109.4px;top:1045.4px;width:1.0px;height:25.3px;background:#2b2f33;"></div>
<div class="b" style="left:1122.9px;top:1045.4px;width:1.0px;height:25.3px;background:#2b2f33;"></div>
<div class="b" style="left:1136.4px;top:1045.4px;width:1.0px;height:25.3px;background:#2b2f33;"></div>
<div class="b" style="left:1149.9px;top:1045.4px;width:1.0px;height:25.3px;background:#2b2f33;"></div>
<div class="b" style="left:1163.4px;top:1045.4px;width:1.0px;height:25.3px;background:#2b2f33;"></div>
<div class="b" style="left:1177.2px;top:1045.4px;width:244.6px;height:25.3px;background:#1d2122;"></div>
<div class="b" style="left:1177.2px;top:1068.9px;width:244.6px;height:1.8px;background:#4f9a45;"></div>
<svg class="s" style="left:1166px;top:1053px;" width="8.6" height="8.6" viewBox="0 0 8.6 8.6"><path d="M1.9 3.1 L4.3 5.5 L6.7 3.1" fill="none" stroke="#c4c5cf" stroke-width="1.4" stroke-linecap="round" stroke-linejoin="round"/></svg>
<div class="t" style="left:1180.7px;top:1049.6px;width:223.3px;overflow:hidden;font-size:12.5px;line-height:1.4;letter-spacing:0.05px;"><span style="font-weight:700;color:#e1e2ea;-webkit-text-stroke:0;">checkout</span>&nbsp;&nbsp;<span style="color:#b3b4bd;">oteldemo.ProductCatalogService/GetProduct</span></div>
<svg class="s" style="left:1404px;top:1050px;" width="15" height="15" viewBox="0 0 15 15"><g transform="rotate(-45 7.5 7.5)" fill="none" stroke="#c8c9d2" stroke-width="1.3" stroke-linecap="round"><path d="M6.3 5.1 H3.9 A2.4 2.4 0 0 0 3.9 9.9 H6.3 A2.4 2.4 0 0 0 8.2 8.6"/><path d="M8.7 9.9 H11.1 A2.4 2.4 0 0 0 11.1 5.1 H8.7 A2.4 2.4 0 0 0 6.8 6.4"/></g></svg>
<div class="t" style="left:1461.0px;top:1051.4px;font-size:12px;color:#c0c1ca;font-weight:400;">1.72ms</div>
<div class="b" style="left:1028.9px;top:1070.7px;width:161.8px;height:25.3px;background:#14191d;"></div>
<div class="b" style="left:1028.4px;top:1070.7px;width:1.0px;height:25.3px;background:#2b2f33;"></div>
<div class="b" style="left:1041.9px;top:1070.7px;width:1.0px;height:25.3px;background:#2b2f33;"></div>
<div class="b" style="left:1055.4px;top:1070.7px;width:1.0px;height:25.3px;background:#2b2f33;"></div>
<div class="b" style="left:1068.9px;top:1070.7px;width:1.0px;height:25.3px;background:#2b2f33;"></div>
<div class="b" style="left:1082.4px;top:1070.7px;width:1.0px;height:25.3px;background:#2b2f33;"></div>
<div class="b" style="left:1095.9px;top:1070.7px;width:1.0px;height:25.3px;background:#2b2f33;"></div>
<div class="b" style="left:1109.4px;top:1070.7px;width:1.0px;height:25.3px;background:#2b2f33;"></div>
<div class="b" style="left:1122.9px;top:1070.7px;width:1.0px;height:25.3px;background:#2b2f33;"></div>
<div class="b" style="left:1136.4px;top:1070.7px;width:1.0px;height:25.3px;background:#2b2f33;"></div>
<div class="b" style="left:1149.9px;top:1070.7px;width:1.0px;height:25.3px;background:#2b2f33;"></div>
<div class="b" style="left:1163.4px;top:1070.7px;width:1.0px;height:25.3px;background:#2b2f33;"></div>
<div class="b" style="left:1176.9px;top:1070.7px;width:1.0px;height:25.3px;background:#2b2f33;"></div>
<div class="b" style="left:1190.7px;top:1070.7px;width:231.1px;height:25.3px;background:#172436;"></div>
<div class="b" style="left:1190.7px;top:1094.2px;width:231.1px;height:1.8px;background:#3a78d4;"></div>
<div class="t" style="left:1194.2px;top:1074.9px;width:209.8px;overflow:hidden;font-size:12.5px;line-height:1.4;letter-spacing:0.05px;"><span style="font-weight:700;color:#e1e2ea;-webkit-text-stroke:0;">product-catalog</span>&nbsp;&nbsp;<span style="color:#b3b4bd;">oteldemo.ProductCatalogService/GetProduct</span></div>
<svg class="s" style="left:1404px;top:1075px;" width="15" height="15" viewBox="0 0 15 15"><g transform="rotate(-45 7.5 7.5)" fill="none" stroke="#c8c9d2" stroke-width="1.3" stroke-linecap="round"><path d="M6.3 5.1 H3.9 A2.4 2.4 0 0 0 3.9 9.9 H6.3 A2.4 2.4 0 0 0 8.2 8.6"/><path d="M8.7 9.9 H11.1 A2.4 2.4 0 0 0 11.1 5.1 H8.7 A2.4 2.4 0 0 0 6.8 6.4"/></g></svg>
<div class="t" style="left:1461.0px;top:1076.7px;font-size:12px;color:#c0c1ca;font-weight:400;">198.07μs</div>
<div class="b" style="left:1028.9px;top:1096.0px;width:148.3px;height:25.3px;background:#14191d;"></div>
<div class="b" style="left:1028.4px;top:1096.0px;width:1.0px;height:25.3px;background:#2b2f33;"></div>
<div class="b" style="left:1041.9px;top:1096.0px;width:1.0px;height:25.3px;background:#2b2f33;"></div>
<div class="b" style="left:1055.4px;top:1096.0px;width:1.0px;height:25.3px;background:#2b2f33;"></div>
<div class="b" style="left:1068.9px;top:1096.0px;width:1.0px;height:25.3px;background:#2b2f33;"></div>
<div class="b" style="left:1082.4px;top:1096.0px;width:1.0px;height:25.3px;background:#2b2f33;"></div>
<div class="b" style="left:1095.9px;top:1096.0px;width:1.0px;height:25.3px;background:#2b2f33;"></div>
<div class="b" style="left:1109.4px;top:1096.0px;width:1.0px;height:25.3px;background:#2b2f33;"></div>
<div class="b" style="left:1122.9px;top:1096.0px;width:1.0px;height:25.3px;background:#2b2f33;"></div>
<div class="b" style="left:1136.4px;top:1096.0px;width:1.0px;height:25.3px;background:#2b2f33;"></div>
<div class="b" style="left:1149.9px;top:1096.0px;width:1.0px;height:25.3px;background:#2b2f33;"></div>
<div class="b" style="left:1163.4px;top:1096.0px;width:1.0px;height:25.3px;background:#2b2f33;"></div>
<div class="b" style="left:1177.2px;top:1096.0px;width:244.6px;height:25.3px;background:#1d2122;"></div>
<div class="b" style="left:1177.2px;top:1119.5px;width:244.6px;height:1.8px;background:#4f9a45;"></div>
<svg class="s" style="left:1166px;top:1104px;" width="8.6" height="8.6" viewBox="0 0 8.6 8.6"><path d="M1.9 3.1 L4.3 5.5 L6.7 3.1" fill="none" stroke="#c4c5cf" stroke-width="1.4" stroke-linecap="round" stroke-linejoin="round"/></svg>
<div class="t" style="left:1180.7px;top:1100.2px;width:223.3px;overflow:hidden;font-size:12.5px;line-height:1.4;letter-spacing:0.05px;"><span style="font-weight:700;color:#e1e2ea;-webkit-text-stroke:0;">checkout</span>&nbsp;&nbsp;<span style="color:#b3b4bd;">oteldemo.CurrencyService/Convert</span></div>
<svg class="s" style="left:1404px;top:1101px;" width="15" height="15" viewBox="0 0 15 15"><g transform="rotate(-45 7.5 7.5)" fill="none" stroke="#c8c9d2" stroke-width="1.3" stroke-linecap="round"><path d="M6.3 5.1 H3.9 A2.4 2.4 0 0 0 3.9 9.9 H6.3 A2.4 2.4 0 0 0 8.2 8.6"/><path d="M8.7 9.9 H11.1 A2.4 2.4 0 0 0 11.1 5.1 H8.7 A2.4 2.4 0 0 0 6.8 6.4"/></g></svg>
<div class="t" style="left:1545.3px;top:1102.0px;font-size:12px;color:#c0c1ca;font-weight:400;">151.2ms</div>
<div class="b" style="left:1028.9px;top:1121.3px;width:161.8px;height:25.3px;background:#14191d;"></div>
<div class="b" style="left:1028.4px;top:1121.3px;width:1.0px;height:25.3px;background:#2b2f33;"></div>
<div class="b" style="left:1041.9px;top:1121.3px;width:1.0px;height:25.3px;background:#2b2f33;"></div>
<div class="b" style="left:1055.4px;top:1121.3px;width:1.0px;height:25.3px;background:#2b2f33;"></div>
<div class="b" style="left:1068.9px;top:1121.3px;width:1.0px;height:25.3px;background:#2b2f33;"></div>
<div class="b" style="left:1082.4px;top:1121.3px;width:1.0px;height:25.3px;background:#2b2f33;"></div>
<div class="b" style="left:1095.9px;top:1121.3px;width:1.0px;height:25.3px;background:#2b2f33;"></div>
<div class="b" style="left:1109.4px;top:1121.3px;width:1.0px;height:25.3px;background:#2b2f33;"></div>
<div class="b" style="left:1122.9px;top:1121.3px;width:1.0px;height:25.3px;background:#2b2f33;"></div>
<div class="b" style="left:1136.4px;top:1121.3px;width:1.0px;height:25.3px;background:#2b2f33;"></div>
<div class="b" style="left:1149.9px;top:1121.3px;width:1.0px;height:25.3px;background:#2b2f33;"></div>
<div class="b" style="left:1163.4px;top:1121.3px;width:1.0px;height:25.3px;background:#2b2f33;"></div>
<div class="b" style="left:1176.9px;top:1121.3px;width:1.0px;height:25.3px;background:#2b2f33;"></div>
<div class="b" style="left:1190.7px;top:1121.3px;width:231.1px;height:25.3px;background:#2b2720;"></div>
<div class="b" style="left:1190.7px;top:1144.8px;width:231.1px;height:1.8px;background:#d4a716;"></div>
<div class="t" style="left:1194.2px;top:1125.5px;width:209.8px;overflow:hidden;font-size:12.5px;line-height:1.4;letter-spacing:0.05px;"><span style="font-weight:700;color:#e1e2ea;-webkit-text-stroke:0;">currency</span>&nbsp;&nbsp;<span style="color:#b3b4bd;">Currency/Convert (37.3ms)</span></div>
<svg class="s" style="left:1404px;top:1126px;" width="15" height="15" viewBox="0 0 15 15"><g transform="rotate(-45 7.5 7.5)" fill="none" stroke="#c8c9d2" stroke-width="1.3" stroke-linecap="round"><path d="M6.3 5.1 H3.9 A2.4 2.4 0 0 0 3.9 9.9 H6.3 A2.4 2.4 0 0 0 8.2 8.6"/><path d="M8.7 9.9 H11.1 A2.4 2.4 0 0 0 11.1 5.1 H8.7 A2.4 2.4 0 0 0 6.8 6.4"/></g></svg>
<div class="t" style="left:1482.0px;top:1127.3px;font-size:12px;color:#c0c1ca;font-weight:400;">37.3ms</div>
<div class="b" style="left:1028.9px;top:1146.6px;width:148.3px;height:25.3px;background:#14191d;"></div>
<div class="b" style="left:1028.4px;top:1146.6px;width:1.0px;height:25.3px;background:#2b2f33;"></div>
<div class="b" style="left:1041.9px;top:1146.6px;width:1.0px;height:25.3px;background:#2b2f33;"></div>
<div class="b" style="left:1055.4px;top:1146.6px;width:1.0px;height:25.3px;background:#2b2f33;"></div>
<div class="b" style="left:1068.9px;top:1146.6px;width:1.0px;height:25.3px;background:#2b2f33;"></div>
<div class="b" style="left:1082.4px;top:1146.6px;width:1.0px;height:25.3px;background:#2b2f33;"></div>
<div class="b" style="left:1095.9px;top:1146.6px;width:1.0px;height:25.3px;background:#2b2f33;"></div>
<div class="b" style="left:1109.4px;top:1146.6px;width:1.0px;height:25.3px;background:#2b2f33;"></div>
<div class="b" style="left:1122.9px;top:1146.6px;width:1.0px;height:25.3px;background:#2b2f33;"></div>
<div class="b" style="left:1136.4px;top:1146.6px;width:1.0px;height:25.3px;background:#2b2f33;"></div>
<div class="b" style="left:1149.9px;top:1146.6px;width:1.0px;height:25.3px;background:#2b2f33;"></div>
<div class="b" style="left:1163.4px;top:1146.6px;width:1.0px;height:25.3px;background:#2b2f33;"></div>
<div class="b" style="left:1177.2px;top:1146.6px;width:244.6px;height:25.3px;background:#1d2122;"></div>
<div class="b" style="left:1177.2px;top:1170.1px;width:244.6px;height:1.8px;background:#4f9a45;"></div>
<svg class="s" style="left:1166px;top:1155px;" width="8.6" height="8.6" viewBox="0 0 8.6 8.6"><path d="M1.9 3.1 L4.3 5.5 L6.7 3.1" fill="none" stroke="#c4c5cf" stroke-width="1.4" stroke-linecap="round" stroke-linejoin="round"/></svg>
<div class="t" style="left:1180.7px;top:1150.8px;width:223.3px;overflow:hidden;font-size:12.5px;line-height:1.4;letter-spacing:0.05px;"><span style="font-weight:700;color:#e1e2ea;-webkit-text-stroke:0;">checkout</span>&nbsp;&nbsp;<span style="color:#b3b4bd;">oteldemo.ProductCatalogService/GetProduct</span></div>
<svg class="s" style="left:1404px;top:1151px;" width="15" height="15" viewBox="0 0 15 15"><g transform="rotate(-45 7.5 7.5)" fill="none" stroke="#c8c9d2" stroke-width="1.3" stroke-linecap="round"><path d="M6.3 5.1 H3.9 A2.4 2.4 0 0 0 3.9 9.9 H6.3 A2.4 2.4 0 0 0 8.2 8.6"/><path d="M8.7 9.9 H11.1 A2.4 2.4 0 0 0 11.1 5.1 H8.7 A2.4 2.4 0 0 0 6.8 6.4"/></g></svg>
<div class="t" style="left:1545.9px;top:1152.6px;font-size:12px;color:#c0c1ca;font-weight:400;">432.97μs</div>
<div class="b" style="left:1028.9px;top:1171.9px;width:161.8px;height:8.1px;background:#14191d;"></div>
<div class="b" style="left:1028.4px;top:1171.9px;width:1.0px;height:8.1px;background:#2b2f33;"></div>
<div class="b" style="left:1041.9px;top:1171.9px;width:1.0px;height:8.1px;background:#2b2f33;"></div>
<div class="b" style="left:1055.4px;top:1171.9px;width:1.0px;height:8.1px;background:#2b2f33;"></div>
<div class="b" style="left:1068.9px;top:1171.9px;width:1.0px;height:8.1px;background:#2b2f33;"></div>
<div class="b" style="left:1082.4px;top:1171.9px;width:1.0px;height:8.1px;background:#2b2f33;"></div>
<div class="b" style="left:1095.9px;top:1171.9px;width:1.0px;height:8.1px;background:#2b2f33;"></div>
<div class="b" style="left:1109.4px;top:1171.9px;width:1.0px;height:8.1px;background:#2b2f33;"></div>
<div class="b" style="left:1122.9px;top:1171.9px;width:1.0px;height:8.1px;background:#2b2f33;"></div>
<div class="b" style="left:1136.4px;top:1171.9px;width:1.0px;height:8.1px;background:#2b2f33;"></div>
<div class="b" style="left:1149.9px;top:1171.9px;width:1.0px;height:8.1px;background:#2b2f33;"></div>
<div class="b" style="left:1163.4px;top:1171.9px;width:1.0px;height:8.1px;background:#2b2f33;"></div>
<div class="b" style="left:1176.9px;top:1171.9px;width:1.0px;height:8.1px;background:#2b2f33;"></div>
<div class="b" style="left:1190.7px;top:1171.9px;width:231.1px;height:8.1px;background:#172436;"></div>
<svg class="s" style="left:1422px;top:716px;" width="600" height="470" viewBox="0 0 600 470"><rect x="0.0" y="7.0" width="590.8" height="9.8" rx="2.5" fill="#e5ac12"/><rect x="26.0" y="32.3" width="564.8" height="9.8" rx="2.5" fill="#e5ac12"/><rect x="26.0" y="57.6" width="564.0" height="9.8" rx="2.5" fill="#62a153"/><rect x="26.0" y="82.9" width="564.0" height="9.8" rx="2.5" fill="#62a153"/><rect x="26.0" y="108.2" width="564.0" height="9.8" rx="2.5" fill="#f8b98e"/><rect x="26.0" y="133.5" width="564.0" height="9.8" rx="2.5" fill="#f8b98e"/><rect x="27.2" y="158.8" width="562.8" height="9.8" rx="2.5" fill="#f8b98e"/><rect x="27.2" y="184.1" width="561.5" height="9.8" rx="2.5" fill="#f8b98e"/><rect x="28.8" y="209.4" width="558.0" height="9.8" rx="2.5" fill="#62a153"/><rect x="30.4" y="234.7" width="543.2" height="9.8" rx="2.5" fill="#62a153"/><rect x="29.7" y="260.5" width="2" height="9" fill="#62a153"/><rect x="29.7" y="285.8" width="2" height="9" fill="#d394e6"/><rect x="29.7" y="311.1" width="2" height="9" fill="#d394e6"/><rect x="31.0" y="336.4" width="2" height="9" fill="#62a153"/><rect x="31.0" y="361.7" width="2" height="9" fill="#3b7ad8"/><rect x="31.3" y="386.5" width="86.2" height="9.8" rx="2" fill="#62a153"/><rect x="32.9" y="411.8" width="21.3" height="9.8" rx="2" fill="#e8b81a"/><rect x="115.9" y="437.6" width="2" height="9" fill="#62a153"/><rect x="0.8" y="10.7" width="24.5" height="2.4" fill="#0d1117"/><rect x="31.0" y="239.1" width="241.0" height="1.6" fill="#10151a"/><rect x="573.0" y="214.0" width="10" height="1.6" fill="#10151a"/></svg>
<svg class="s" style="left:1968px;top:1134px;" width="13" height="14" viewBox="0 0 13 14"><path d="M6.5 12.5 V2.5 M2.8 6 L6.5 2.3 L10.2 6" fill="none" stroke="#a8a9b3" stroke-width="1.5" stroke-linecap="round" stroke-linejoin="round"/></svg>
</body></html>
